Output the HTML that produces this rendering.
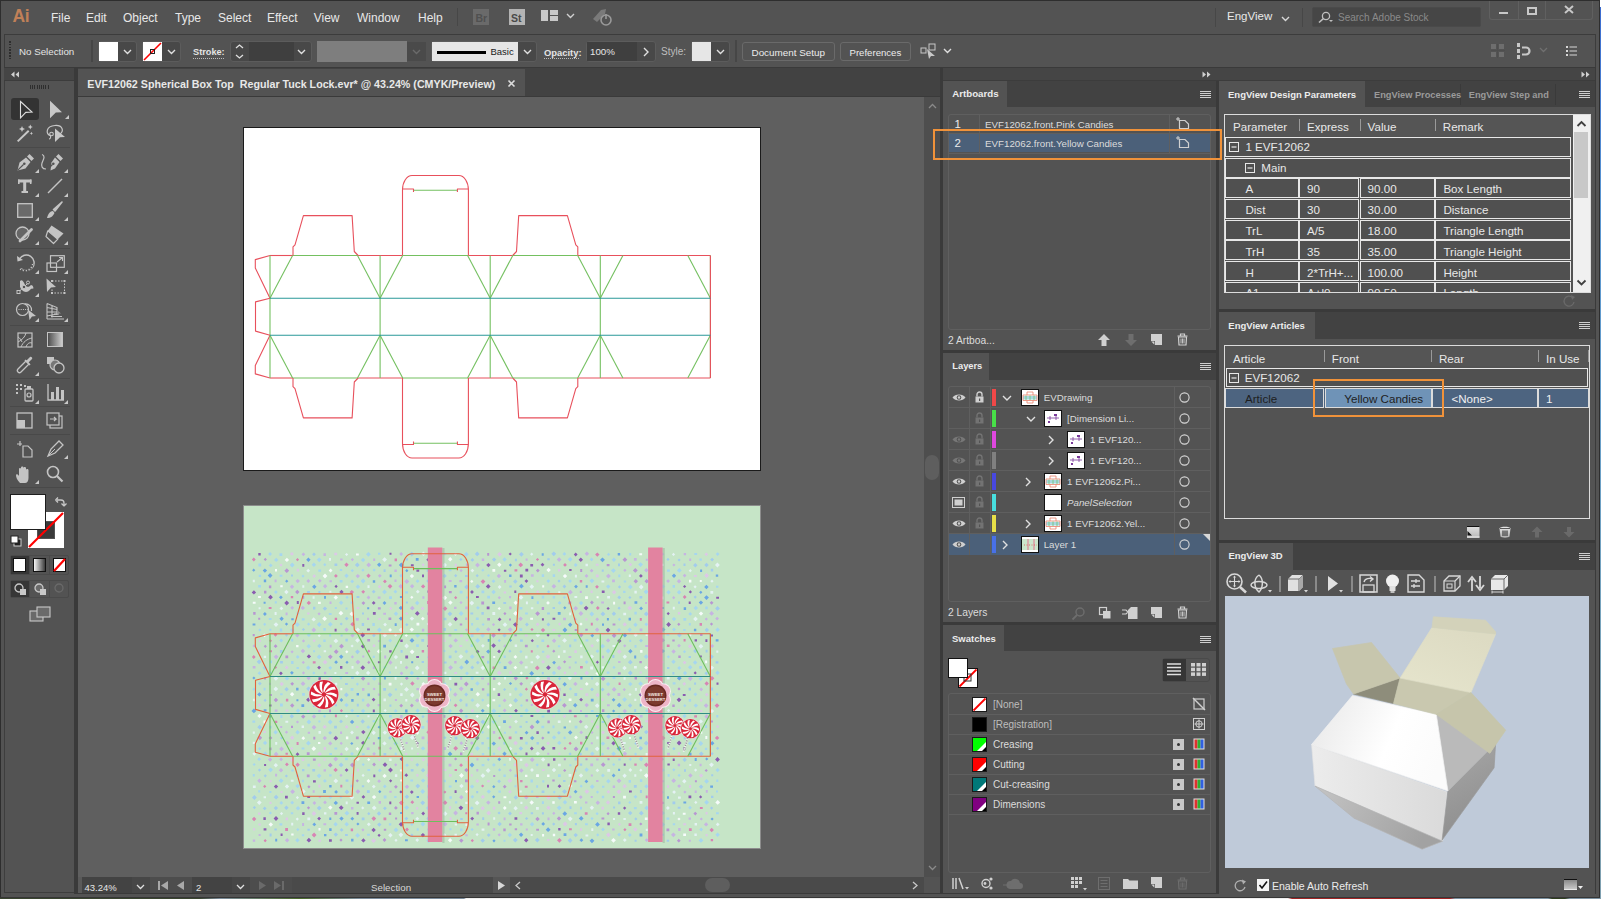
<!DOCTYPE html><html><head><meta charset="utf-8"><style>
html,body{margin:0;padding:0;}
body{width:1601px;height:899px;overflow:hidden;position:relative;background:#535353;font-family:"Liberation Sans",sans-serif;}
.a{position:absolute;}
.t{position:absolute;white-space:nowrap;line-height:1;}
svg{overflow:visible;}
</style></head><body>
<div class="a" style="left:0px;top:897px;width:1601px;height:2px;background:linear-gradient(90deg,#3a4630 0px,#3a4630 200px,#7a8a9a 220px,#4a6a2a 300px,#7a8a9a 360px,#7a8a9a 464px,#eeeeee 466px,#eeeeee 1288px,#a02424 1292px,#a02424 1450px,#7a90a0 1455px,#7a90a0 1548px,#304020 1552px,#304020 1565px,#7a90a0 1570px);"></div>
<div class="a" style="left:1600px;top:0px;width:1px;height:899px;background:linear-gradient(180deg,#3a6ad0 0px,#5a96d2 200px,#6aa0c8 450px,#7fa6b8 700px,#7fa0b0 899px);"></div>
<div class="a" style="left:1597px;top:0px;width:4px;height:7px;background:#ffffff;"></div>
<div class="a" style="left:0px;top:0px;width:1600px;height:898px;background:#535353;"></div>
<div class="a" style="left:0px;top:0px;width:1600px;height:1px;background:#2e2e2e;"></div>
<div class="a" style="left:0px;top:0px;width:1px;height:898px;background:#2e2e2e;"></div>
<div class="a" style="left:1599px;top:0px;width:1px;height:898px;background:#2e2e2e;"></div>
<div class="a" style="left:0px;top:897px;width:1600px;height:1px;background:#363636;"></div>
<div class="t" style="left:12.5px;top:8.19px;font-size:17.5px;color:#c08058;font-weight:bold;letter-spacing:-0.5px;">Ai</div>
<div class="t" style="left:51px;top:11.84px;font-size:12px;color:#e8e8e8;">File</div>
<div class="t" style="left:86px;top:11.84px;font-size:12px;color:#e8e8e8;">Edit</div>
<div class="t" style="left:123px;top:11.84px;font-size:12px;color:#e8e8e8;">Object</div>
<div class="t" style="left:175px;top:11.84px;font-size:12px;color:#e8e8e8;">Type</div>
<div class="t" style="left:218px;top:11.84px;font-size:12px;color:#e8e8e8;">Select</div>
<div class="t" style="left:267px;top:11.84px;font-size:12px;color:#e8e8e8;">Effect</div>
<div class="t" style="left:313.7px;top:11.84px;font-size:12px;color:#e8e8e8;">View</div>
<div class="t" style="left:357px;top:11.84px;font-size:12px;color:#e8e8e8;">Window</div>
<div class="t" style="left:418px;top:11.84px;font-size:12px;color:#e8e8e8;">Help</div>
<div class="a" style="left:457px;top:8px;width:1px;height:18px;background:#474747;"></div>
<div class="a" style="left:473px;top:9px;width:16px;height:16px;background:#6a6a6a;"></div>
<div class="t" style="left:475.5px;top:12.61px;font-size:10.5px;color:#505050;font-weight:bold;">Br</div>
<div class="a" style="left:509px;top:9px;width:16px;height:16px;background:#b4b4b4;"></div>
<div class="t" style="left:511px;top:12.61px;font-size:10.5px;color:#4a4a4a;font-weight:bold;">St</div>
<div class="a" style="left:541px;top:10px;width:7px;height:11px;background:#c8c8c8;"></div>
<div class="a" style="left:550px;top:10px;width:8px;height:5px;background:#c8c8c8;"></div>
<div class="a" style="left:550px;top:16px;width:8px;height:5px;background:#c8c8c8;"></div>
<svg class="a" style="left:566px;top:13px;" width="9" height="6" viewBox="0 0 9 6"><path d="M1 1 L4.5 4.5 L8 1" stroke="#d0d0d0" stroke-width="1.4" fill="none"/></svg>
<svg class="a" style="left:591px;top:7px;" width="22" height="19" viewBox="0 0 22 19"><path d="M2 12 L10 3 L15 2 L14 7 L6 15 Z" fill="#7a7a7a"/><circle cx="15" cy="13" r="5" fill="none" stroke="#9a9a9a" stroke-width="1.6"/><path d="M15 7 V12" stroke="#9a9a9a" stroke-width="1.6"/></svg>
<div class="a" style="left:1215px;top:8px;width:1px;height:19px;background:#474747;"></div>
<div class="t" style="left:1227px;top:11.27px;font-size:11.5px;color:#e8e8e8;">EngView</div>
<svg class="a" style="left:1281px;top:16px;" width="9" height="6" viewBox="0 0 9 6"><path d="M1 1 L4.5 4.5 L8 1" stroke="#d8d8d8" stroke-width="1.4" fill="none"/></svg>
<div class="a" style="left:1302px;top:8px;width:1px;height:19px;background:#474747;"></div>
<div class="a" style="left:1312px;top:7px;width:169px;height:20px;border:1px solid #4a4a4a;box-sizing:border-box;background:#464646;border-radius:2px;"></div>
<svg class="a" style="left:1317px;top:11px;" width="16" height="12" viewBox="0 0 16 12"><circle cx="9" cy="5" r="3.6" fill="none" stroke="#c0c0c0" stroke-width="1.3"/><path d="M6.5 7.5 L2 11.5" stroke="#c0c0c0" stroke-width="1.6"/><path d="M12 9 L16 9 L14 11 Z" fill="#c0c0c0"/></svg>
<div class="t" style="left:1338px;top:12.54px;font-size:10px;color:#8a8a8a;">Search Adobe Stock</div>
<div class="a" style="left:1489px;top:1px;width:104px;height:19px;border:1px solid #606060;box-sizing:border-box;border-top:none;border-radius:0 0 3px 3px;"></div>
<div class="a" style="left:1518px;top:1px;width:1px;height:18px;background:#606060;"></div>
<div class="a" style="left:1545px;top:1px;width:1px;height:18px;background:#606060;"></div>
<div class="a" style="left:1499px;top:12px;width:9px;height:2px;background:#c8c8c8;"></div>
<div class="a" style="left:1527px;top:7px;width:10px;height:8px;border:1px solid #c8c8c8;box-sizing:border-box;border-width:2px 2px 2px 2px;"></div>
<svg class="a" style="left:1564px;top:5px;" width="10" height="9" viewBox="0 0 10 9"><path d="M1 1 L9 8 M9 1 L1 8" stroke="#c8c8c8" stroke-width="2"/></svg>
<div class="a" style="left:4px;top:34px;width:1592px;height:34px;background:#3c3c3c;"></div>
<div class="a" style="left:5px;top:35px;width:1590px;height:32px;background:#535353;"></div>
<div class="a" style="left:9px;top:41.0px;width:2px;height:1.5px;background:#2e2e2e;"></div>
<div class="a" style="left:9px;top:43.8px;width:2px;height:1.5px;background:#2e2e2e;"></div>
<div class="a" style="left:9px;top:46.6px;width:2px;height:1.5px;background:#2e2e2e;"></div>
<div class="a" style="left:9px;top:49.4px;width:2px;height:1.5px;background:#2e2e2e;"></div>
<div class="a" style="left:9px;top:52.2px;width:2px;height:1.5px;background:#2e2e2e;"></div>
<div class="a" style="left:9px;top:55.0px;width:2px;height:1.5px;background:#2e2e2e;"></div>
<div class="a" style="left:9px;top:57.8px;width:2px;height:1.5px;background:#2e2e2e;"></div>
<div class="t" style="left:19px;top:46.75px;font-size:9.75px;color:#e4e4e4;">No Selection</div>
<div class="a" style="left:91px;top:40px;width:2px;height:22px;background:#464646;"></div>
<div class="a" style="left:98px;top:41px;width:39px;height:21px;border:1px solid #5c5c5c;box-sizing:border-box;background:#484848;border-radius:3px;"></div>
<div class="a" style="left:99px;top:42px;width:19px;height:19px;background:#ffffff;"></div>
<svg class="a" style="left:123px;top:49px;" width="9" height="6" viewBox="0 0 9 6"><path d="M1 1 L4.5 4.5 L8 1" stroke="#e0e0e0" stroke-width="1.4" fill="none"/></svg>
<div class="a" style="left:142px;top:41px;width:39px;height:21px;border:1px solid #5c5c5c;box-sizing:border-box;background:#484848;border-radius:3px;"></div>
<div class="a" style="left:143px;top:42px;width:19px;height:19px;background:#ffffff;"></div>
<svg class="a" style="left:143px;top:42px;" width="19" height="19" viewBox="0 0 19 19"><path d="M1 18 L18 1" stroke="#ff0000" stroke-width="1.6"/><rect x="7.5" y="7.5" width="4" height="4" fill="none" stroke="#222" stroke-width="1"/></svg>
<svg class="a" style="left:167px;top:49px;" width="9" height="6" viewBox="0 0 9 6"><path d="M1 1 L4.5 4.5 L8 1" stroke="#e0e0e0" stroke-width="1.4" fill="none"/></svg>
<div class="t" style="left:193px;top:48.21px;font-size:9.2px;color:#e4e4e4;font-weight:bold;">Stroke:</div>
<div class="a" style="left:193px;top:58px;width:31px;height:1px;background:repeating-linear-gradient(90deg,#bbb 0 1px,transparent 1px 2px);"></div>
<div class="a" style="left:230px;top:41px;width:82px;height:21px;border:1px solid #5c5c5c;box-sizing:border-box;background:#484848;border-radius:3px;"></div>
<svg class="a" style="left:235px;top:43px;" width="9" height="17" viewBox="0 0 9 17"><path d="M1 5 L4.5 2 L8 5 M1 12 L4.5 15 L8 12" stroke="#e0e0e0" stroke-width="1.3" fill="none"/></svg>
<div class="a" style="left:249px;top:42px;width:45px;height:19px;background:#3f3f3f;"></div>
<svg class="a" style="left:297px;top:49px;" width="9" height="6" viewBox="0 0 9 6"><path d="M1 1 L4.5 4.5 L8 1" stroke="#e0e0e0" stroke-width="1.4" fill="none"/></svg>
<div class="a" style="left:317px;top:41px;width:90px;height:21px;background:#7e7e7e;"></div>
<div class="a" style="left:407px;top:42px;width:19px;height:19px;background:#4a4a4a;"></div>
<svg class="a" style="left:412px;top:49px;" width="9" height="6" viewBox="0 0 9 6"><path d="M1 1 L4.5 4.5 L8 1" stroke="#6a6a6a" stroke-width="1.4" fill="none"/></svg>
<div class="a" style="left:431px;top:41px;width:106px;height:21px;border:1px solid #5c5c5c;box-sizing:border-box;background:#484848;border-radius:3px;"></div>
<div class="a" style="left:432px;top:42px;width:86px;height:19px;background:#e6e6e6;"></div>
<div class="a" style="left:437px;top:51px;width:49px;height:2.5px;background:#000000;"></div>
<div class="t" style="left:490.5px;top:47.46px;font-size:9.5px;color:#1a1a1a;">Basic</div>
<svg class="a" style="left:523px;top:49px;" width="9" height="6" viewBox="0 0 9 6"><path d="M1 1 L4.5 4.5 L8 1" stroke="#e0e0e0" stroke-width="1.4" fill="none"/></svg>
<div class="t" style="left:544px;top:48.04px;font-size:9.4px;color:#e4e4e4;font-weight:bold;">Opacity:</div>
<div class="a" style="left:544px;top:58px;width:36px;height:1px;background:repeating-linear-gradient(90deg,#bbb 0 1px,transparent 1px 2px);"></div>
<div class="a" style="left:586px;top:41px;width:70px;height:21px;border:1px solid #5c5c5c;box-sizing:border-box;background:#484848;border-radius:3px;"></div>
<div class="a" style="left:587px;top:42px;width:50px;height:19px;background:#3f3f3f;"></div>
<div class="t" style="left:590px;top:46.75px;font-size:9.75px;color:#e6e6e6;">100%</div>
<svg class="a" style="left:643px;top:47px;" width="6" height="10" viewBox="0 0 6 10"><path d="M1 1 L5 5 L1 9" stroke="#e0e0e0" stroke-width="1.4" fill="none"/></svg>
<div class="t" style="left:661px;top:47.04px;font-size:10px;color:#bdbdbd;">Style:</div>
<div class="a" style="left:691px;top:41px;width:39px;height:21px;border:1px solid #5c5c5c;box-sizing:border-box;background:#484848;border-radius:3px;"></div>
<div class="a" style="left:692px;top:42px;width:19px;height:19px;background:#e6e6e6;"></div>
<svg class="a" style="left:716px;top:49px;" width="9" height="6" viewBox="0 0 9 6"><path d="M1 1 L4.5 4.5 L8 1" stroke="#e0e0e0" stroke-width="1.4" fill="none"/></svg>
<div class="a" style="left:735px;top:40px;width:2px;height:22px;background:#464646;"></div>
<div class="a" style="left:742px;top:42px;width:93px;height:19px;border:1px solid #6a6a6a;box-sizing:border-box;border-radius:3px;"></div>
<div class="t" style="left:751.5px;top:47.62px;font-size:9.9px;color:#ececec;">Document Setup</div>
<div class="a" style="left:840px;top:42px;width:71px;height:19px;border:1px solid #6a6a6a;box-sizing:border-box;border-radius:3px;"></div>
<div class="t" style="left:849.5px;top:47.87px;font-size:9.6px;color:#ececec;">Preferences</div>
<svg class="a" style="left:920px;top:43px;" width="18" height="17" viewBox="0 0 18 17"><rect x="1" y="5" width="5" height="5" fill="none" stroke="#c8c8c8" stroke-width="1"/><rect x="9" y="1" width="6" height="6" fill="none" stroke="#c8c8c8" stroke-width="1"/><path d="M7 6 L15 13 L11 13 L9 16 Z" fill="#c8c8c8"/></svg>
<svg class="a" style="left:943px;top:48px;" width="9" height="6" viewBox="0 0 9 6"><path d="M1 1 L4.5 4.5 L8 1" stroke="#e0e0e0" stroke-width="1.4" fill="none"/></svg>
<svg class="a" style="left:1491px;top:44px;" width="14" height="14" viewBox="0 0 14 14"><rect x="0" y="0" width="5" height="5" fill="#6e6e6e"/><rect x="8" y="0" width="5" height="5" fill="#6e6e6e"/><rect x="0" y="8" width="5" height="5" fill="#6e6e6e"/><rect x="8" y="8" width="5" height="5" fill="#6e6e6e"/><path d="M6.5 0 V14 M0 6.5 H14" stroke="#4e4e4e" stroke-width="1"/></svg>
<svg class="a" style="left:1517px;top:43px;" width="16" height="16" viewBox="0 0 16 16"><rect x="0" y="0" width="3" height="4" fill="#c8c8c8"/><rect x="0" y="6" width="3" height="4" fill="#c8c8c8"/><rect x="0" y="12" width="3" height="4" fill="#c8c8c8"/><path d="M5 4.5 H9 A3.5 3.5 0 0 1 9 11.5 H5" stroke="#c8c8c8" stroke-width="2.2" fill="none"/></svg>
<svg class="a" style="left:1539px;top:47px;" width="9" height="6" viewBox="0 0 9 6"><path d="M1 1 L4.5 4.5 L8 1" stroke="#707070" stroke-width="1.3" fill="none"/></svg>
<svg class="a" style="left:1566px;top:46px;" width="12" height="10" viewBox="0 0 12 10"><rect x="0" y="0" width="2" height="2" fill="#d8d8d8"/><rect x="0" y="4" width="2" height="2" fill="#d8d8d8"/><rect x="0" y="8" width="2" height="2" fill="#d8d8d8"/><path d="M3.5 1 H11 M3.5 5 H11 M3.5 9 H11" stroke="#d8d8d8" stroke-width="1.2"/></svg>
<div class="a" style="left:4px;top:67px;width:1592px;height:2px;background:#3a3a3a;"></div>
<div class="a" style="left:4px;top:68px;width:72px;height:13px;background:#454545;"></div>
<div class="a" style="left:4px;top:80px;width:72px;height:1px;background:#3c3c3c;"></div>
<svg class="a" style="left:10px;top:71px;" width="10" height="7" viewBox="0 0 10 7"><path d="M4.5 0.5 L1 3.5 L4.5 6.5 Z M9 0.5 L5.5 3.5 L9 6.5 Z" fill="#d0d0d0"/></svg>
<div class="a" style="left:4px;top:81px;width:71px;height:812px;background:#3e3e3e;"></div>
<div class="a" style="left:5px;top:81px;width:69px;height:811px;background:#535353;"></div>
<div class="a" style="left:74px;top:68px;width:4px;height:826px;background:#3a3a3a;"></div>
<div class="a" style="left:30.0px;top:85px;width:1px;height:3.5px;background:#2e2e2e;"></div>
<div class="a" style="left:32.2px;top:85px;width:1px;height:3.5px;background:#2e2e2e;"></div>
<div class="a" style="left:34.4px;top:85px;width:1px;height:3.5px;background:#2e2e2e;"></div>
<div class="a" style="left:36.6px;top:85px;width:1px;height:3.5px;background:#2e2e2e;"></div>
<div class="a" style="left:38.8px;top:85px;width:1px;height:3.5px;background:#2e2e2e;"></div>
<div class="a" style="left:41.0px;top:85px;width:1px;height:3.5px;background:#2e2e2e;"></div>
<div class="a" style="left:43.2px;top:85px;width:1px;height:3.5px;background:#2e2e2e;"></div>
<div class="a" style="left:45.400000000000006px;top:85px;width:1px;height:3.5px;background:#2e2e2e;"></div>
<div class="a" style="left:47.6px;top:85px;width:1px;height:3.5px;background:#2e2e2e;"></div>
<div class="a" style="left:11px;top:98px;width:28px;height:22px;background:#333333;border-radius:3px;"></div>
<svg class="a" style="left:0px;top:0px;" width="80" height="150" viewBox="0 0 80 150"><path d="M20.5 101.5 L32 112 L25.8 112.4 L20.5 117.8 Z" fill="none" stroke="#dedede" stroke-width="1.1" stroke-linejoin="miter"/><path d="M50 100.8 L62 112.3 L55.8 112.6 L50 118.2 Z" fill="#c8c8c8"/><path d="M17.7 141.4 L28.7 130.7" stroke="#c8c8c8" stroke-width="2"/><path d="M22 126 L22.9 128.1 L25 129 L22.9 129.9 L22 132 L21.1 129.9 L19 129 L21.1 128.1 Z M30.3 124.5 L31.1 126.2 L32.8 127 L31.1 127.8 L30.3 129.5 L29.5 127.8 L27.8 127 L29.5 126.2 Z M31.4 131.8 L32 133 L33.2 133.4 L32 133.8 L31.4 135 L30.8 133.8 L29.6 133.4 L30.8 133 Z" fill="#c8c8c8"/><path d="M51 136 C45 134 46 126 55 125.5 C63 125 64 131 60 134" fill="none" stroke="#c8c8c8" stroke-width="1.2"/><circle cx="51.5" cy="134" r="1.8" fill="none" stroke="#c8c8c8" stroke-width="1.1"/><path d="M50.5 136 C51 138 50 139 49 139" fill="none" stroke="#c8c8c8" stroke-width="1.1"/><path d="M55 128.4 L65 137 L60 137.3 L55 142 Z" fill="#c8c8c8"/></svg>
<svg class="a" style="left:64.5px;top:115.3px;" width="4" height="4" viewBox="0 0 4 4"><path d="M4 0 L4 4 L0 4 Z" fill="#c8c8c8"/></svg>
<div class="a" style="left:10px;top:147px;width:60px;height:1px;background:#494949;"></div>
<svg class="a" style="left:16.5px;top:154px;" width="17" height="17" viewBox="0 0 17 17"><path d="M0.5 16.5 L2.5 8.5 L9 3.5 L13.5 8 L8.5 14.5 Z" fill="#c4c4c4"/><path d="M10 2.5 L12.5 0 L17 4.5 L14.5 7 Z" fill="#c4c4c4"/><path d="M0.8 16.2 L6.5 10.5" stroke="#535353" stroke-width="1.1"/><circle cx="7.3" cy="9.7" r="1.3" fill="#535353"/></svg>
<svg class="a" style="left:34.5px;top:168.5px;" width="4" height="4" viewBox="0 0 4 4"><path d="M4 0 L4 4 L0 4 Z" fill="#c8c8c8"/></svg>
<svg class="a" style="left:45.5px;top:154px;" width="17" height="17" viewBox="0 0 17 17"><path d="M4.5 16.5 L5.5 8.5 L9 3.5 L13.5 8 L9 14.5 Z" fill="#c4c4c4"/><path d="M10 2.5 L12.5 0 L17 4.5 L14.5 7 Z" fill="#c4c4c4"/><path d="M0.8 16.2 L6.5 10.5" stroke="#535353" stroke-width="1.1"/><circle cx="7.3" cy="9.7" r="1.3" fill="#535353"/></svg>
<svg class="a" style="left:40px;top:154px;" width="8" height="16" viewBox="0 0 8 16"><path d="M2 0.5 C6 2 3 6 2 9 C1 12 2 15 6 15" fill="none" stroke="#c4c4c4" stroke-width="1.2"/></svg>
<svg class="a" style="left:64px;top:168.5px;" width="4" height="4" viewBox="0 0 4 4"><path d="M4 0 L4 4 L0 4 Z" fill="#c8c8c8"/></svg>
<svg class="a" style="left:17px;top:179px;" width="15" height="15" viewBox="0 0 15 15"><rect x="1" y="0.5" width="13.5" height="3" fill="#c4c4c4"/><rect x="1" y="0.5" width="1.6" height="4.5" fill="#c4c4c4"/><rect x="12.9" y="0.5" width="1.6" height="4.5" fill="#c4c4c4"/><rect x="6.2" y="1" width="3" height="12.5" fill="#c4c4c4"/><rect x="4.5" y="12" width="6.5" height="2" fill="#c4c4c4"/></svg>
<svg class="a" style="left:34.5px;top:192.5px;" width="4" height="4" viewBox="0 0 4 4"><path d="M4 0 L4 4 L0 4 Z" fill="#c8c8c8"/></svg>
<svg class="a" style="left:47px;top:178px;" width="16" height="16" viewBox="0 0 16 16"><path d="M1 15 L15 1" stroke="#c4c4c4" stroke-width="1.5"/></svg>
<svg class="a" style="left:64px;top:192.5px;" width="4" height="4" viewBox="0 0 4 4"><path d="M4 0 L4 4 L0 4 Z" fill="#c8c8c8"/></svg>
<svg class="a" style="left:17px;top:202.5px;" width="16" height="15" viewBox="0 0 16 15"><rect x="0.7" y="0.7" width="14.6" height="13.6" fill="#6a6a6a" stroke="#c4c4c4" stroke-width="1.3"/></svg>
<svg class="a" style="left:34.5px;top:216.5px;" width="4" height="4" viewBox="0 0 4 4"><path d="M4 0 L4 4 L0 4 Z" fill="#c8c8c8"/></svg>
<svg class="a" style="left:46px;top:201px;" width="18" height="18" viewBox="0 0 18 18"><path d="M16 1 L9 10 L7.5 8.5 Z" fill="#c4c4c4" stroke="#c4c4c4" stroke-width="1.6" stroke-linejoin="round"/><path d="M1 17 C2 13 4 10 7 10 L8.5 12 C7 15 5 17 1 17 Z" fill="#c4c4c4"/></svg>
<svg class="a" style="left:64px;top:216.5px;" width="4" height="4" viewBox="0 0 4 4"><path d="M4 0 L4 4 L0 4 Z" fill="#c8c8c8"/></svg>
<svg class="a" style="left:14.5px;top:225.5px;" width="18" height="17" viewBox="0 0 18 17"><circle cx="7.5" cy="7.5" r="6.5" fill="#666" stroke="#c4c4c4" stroke-width="1.3"/><path d="M5 15 L16.5 3.5" stroke="#c4c4c4" stroke-width="2.8" stroke-linecap="round"/></svg>
<svg class="a" style="left:34.5px;top:240.5px;" width="4" height="4" viewBox="0 0 4 4"><path d="M4 0 L4 4 L0 4 Z" fill="#c8c8c8"/></svg>
<svg class="a" style="left:0px;top:0px;" width="80" height="260" viewBox="0 0 80 260"><path d="M51.5 225.5 L63.5 233.5 L57.8 239.2 L47.8 230.8 Z" fill="#c4c4c4"/><path d="M47.8 230.8 L57.8 239.2 L53.5 243.5 L46 236.5 Z" fill="none" stroke="#c4c4c4" stroke-width="1.2" stroke-linejoin="round"/></svg>
<svg class="a" style="left:64px;top:240.5px;" width="4" height="4" viewBox="0 0 4 4"><path d="M4 0 L4 4 L0 4 Z" fill="#c8c8c8"/></svg>
<div class="a" style="left:10px;top:248px;width:60px;height:1px;background:#494949;"></div>
<svg class="a" style="left:16px;top:254px;" width="18" height="18" viewBox="0 0 18 18"><path d="M3.5 5 A7.8 7.8 0 1 1 5 14.5" fill="none" stroke="#c4c4c4" stroke-width="1.4" stroke-dasharray="0 0"/><path d="M16.6 10 A7.8 7.8 0 0 1 4 15" fill="none" stroke="#535353" stroke-width="2"/><path d="M16.6 10 A7.8 7.8 0 0 1 4 15" fill="none" stroke="#c4c4c4" stroke-width="1.4" stroke-dasharray="1.2 1.8"/><path d="M1 2 L1.5 7.5 L7 6 Z" fill="#c4c4c4"/></svg>
<svg class="a" style="left:35px;top:270px;" width="4" height="4" viewBox="0 0 4 4"><path d="M4 0 L4 4 L0 4 Z" fill="#c8c8c8"/></svg>
<svg class="a" style="left:45.5px;top:254.5px;" width="19" height="17" viewBox="0 0 19 17"><rect x="1" y="8" width="9.5" height="8.5" fill="none" stroke="#c4c4c4" stroke-width="1.2"/><rect x="4.5" y="0.7" width="13.8" height="11.6" fill="none" stroke="#c4c4c4" stroke-width="1.2"/><path d="M11 7 L16.5 2.5 M13 2.5 H16.5 V6" stroke="#c4c4c4" stroke-width="1.1" fill="none"/></svg>
<svg class="a" style="left:64px;top:270px;" width="4" height="4" viewBox="0 0 4 4"><path d="M4 0 L4 4 L0 4 Z" fill="#c8c8c8"/></svg>
<svg class="a" style="left:15.5px;top:279px;" width="19" height="15" viewBox="0 0 19 15"><path d="M2.5 13 L9 7 L12 4" stroke="#c4c4c4" stroke-width="1" fill="none"/><path d="M4 2 C7 -1 8 5 10 7 C12 9 14 7 15 6 C17 6 18 9 17 10 C15 8 14 13 10 13 C7 13 5 10 4 8" fill="#c4c4c4"/><rect x="1" y="11.5" width="3" height="3" fill="#535353" stroke="#c4c4c4" stroke-width="1"/><circle cx="8" cy="8" r="1.8" fill="#535353" stroke="#c4c4c4" stroke-width="1"/><circle cx="12" cy="3.5" r="1.5" fill="#535353" stroke="#c4c4c4" stroke-width="1"/></svg>
<svg class="a" style="left:35px;top:293px;" width="4" height="4" viewBox="0 0 4 4"><path d="M4 0 L4 4 L0 4 Z" fill="#c8c8c8"/></svg>
<svg class="a" style="left:45.5px;top:278px;" width="20" height="16" viewBox="0 0 20 16"><path d="M0.5 0.5 L10 9 L5 9.5 L1 14 Z" fill="#c4c4c4"/><path d="M6 3 H18.5 V15 H6 V11" fill="none" stroke="#c4c4c4" stroke-width="1" stroke-dasharray="1.6 1.4"/><rect x="5" y="2" width="2" height="2" fill="#c4c4c4"/><rect x="17.5" y="2" width="2" height="2" fill="#c4c4c4"/><rect x="17.5" y="14" width="2" height="2" fill="#c4c4c4"/><rect x="5" y="14" width="2" height="2" fill="#c4c4c4"/></svg>
<svg class="a" style="left:15.5px;top:302.5px;" width="22" height="17" viewBox="0 0 22 17"><circle cx="6.5" cy="6.5" r="6" fill="none" stroke="#c4c4c4" stroke-width="1.2"/><path d="M8.5 1 A6 6 0 0 1 15.5 8" fill="none" stroke="#c4c4c4" stroke-width="1.2"/><path d="M2.5 6.5 H12" stroke="#c4c4c4" stroke-width="1.1" stroke-dasharray="1 1.2"/><path d="M12 6.5 L20 13 L16 13.5 L13.5 17 Z" fill="#c4c4c4"/></svg>
<svg class="a" style="left:35px;top:318px;" width="4" height="4" viewBox="0 0 4 4"><path d="M4 0 L4 4 L0 4 Z" fill="#c8c8c8"/></svg>
<svg class="a" style="left:45.5px;top:302.5px;" width="19" height="17" viewBox="0 0 19 17"><path d="M1 0.5 V16 M1 0.5 L11 4.5 V12 M1 4.5 L11 6.5 M1 9 L11 9 M1 13 L11 11 M6 2.5 V14.5" stroke="#c4c4c4" stroke-width="1.1" fill="none"/><path d="M1 16 H18 M5 13.5 H16 M8 11 H13" stroke="#c4c4c4" stroke-width="1"/><path d="M11 7 L15 10.5 H11 Z" fill="#8a8a8a"/></svg>
<svg class="a" style="left:64px;top:318px;" width="4" height="4" viewBox="0 0 4 4"><path d="M4 0 L4 4 L0 4 Z" fill="#c8c8c8"/></svg>
<div class="a" style="left:10px;top:325px;width:60px;height:1px;background:#494949;"></div>
<svg class="a" style="left:17px;top:332px;" width="16" height="16" viewBox="0 0 16 16"><rect x="1" y="1" width="14" height="14" fill="none" stroke="#c4c4c4" stroke-width="1.2"/><path d="M1 10 C5 8 8 5 9 1 M4 15 C6 10 10 7 15 6 M9 15 C10 12 12 10 15 11 M1 5 C3 6 4 8 5 10" fill="none" stroke="#c4c4c4" stroke-width="1"/></svg>
<svg class="a" style="left:47px;top:332px;" width="16" height="16" viewBox="0 0 16 16"><defs><linearGradient id="gg" x1="0" x2="1"><stop offset="0" stop-color="#4a4a4a"/><stop offset="1" stop-color="#d0d0d0"/></linearGradient></defs><rect x="0.5" y="0.5" width="15" height="14" fill="url(#gg)" stroke="#c4c4c4" stroke-width="1"/></svg>
<svg class="a" style="left:16px;top:356px;" width="18" height="18" viewBox="0 0 18 18"><path d="M2 16 C1 15 1 14 2 13 L10 5 L13 8 L5 16 C4 17 3 17 2 16 Z" fill="none" stroke="#c4c4c4" stroke-width="1.3"/><path d="M10 5 L14 1 C15 0 17 2 16 3 L12 7 Z" fill="#c4c4c4"/><path d="M9 4 L14 9" stroke="#c4c4c4" stroke-width="1.6"/></svg>
<svg class="a" style="left:35px;top:372px;" width="4" height="4" viewBox="0 0 4 4"><path d="M4 0 L4 4 L0 4 Z" fill="#c8c8c8"/></svg>
<svg class="a" style="left:46px;top:356px;" width="19" height="17" viewBox="0 0 19 17"><rect x="1" y="1" width="7" height="7" fill="#c4c4c4"/><circle cx="9" cy="9" r="5" fill="#777" stroke="#c4c4c4" stroke-width="1.2"/><circle cx="13" cy="12" r="5" fill="#535353" stroke="#c4c4c4" stroke-width="1.3"/></svg>
<div class="a" style="left:10px;top:378px;width:60px;height:1px;background:#494949;"></div>
<svg class="a" style="left:15px;top:383px;" width="22" height="19" viewBox="0 0 22 19"><rect x="1" y="1" width="2" height="2" fill="#c4c4c4"/><rect x="5" y="1" width="2" height="2" fill="#c4c4c4"/><rect x="1" y="5" width="2" height="2" fill="#c4c4c4"/><rect x="5" y="5" width="2" height="2" fill="#c4c4c4"/><rect x="1" y="9" width="2" height="2" fill="#c4c4c4"/><rect x="9" y="2" width="2" height="2" fill="#c4c4c4"/><rect x="10" y="6" width="8" height="12" rx="1" fill="none" stroke="#c4c4c4" stroke-width="1.3"/><rect x="12" y="3" width="4" height="3" fill="#c4c4c4"/><circle cx="14" cy="12" r="2" fill="none" stroke="#c4c4c4" stroke-width="1.2"/></svg>
<svg class="a" style="left:35px;top:400px;" width="4" height="4" viewBox="0 0 4 4"><path d="M4 0 L4 4 L0 4 Z" fill="#c8c8c8"/></svg>
<svg class="a" style="left:47px;top:383px;" width="17" height="18" viewBox="0 0 17 18"><path d="M1 1 V17 H17" stroke="#c4c4c4" stroke-width="1.3" fill="none"/><rect x="4" y="9" width="3" height="8" fill="#c4c4c4"/><rect x="9" y="4" width="3" height="13" fill="#c4c4c4"/><rect x="14" y="7" width="3" height="10" fill="#c4c4c4"/></svg>
<svg class="a" style="left:64px;top:400px;" width="4" height="4" viewBox="0 0 4 4"><path d="M4 0 L4 4 L0 4 Z" fill="#c8c8c8"/></svg>
<div class="a" style="left:10px;top:406px;width:60px;height:1px;background:#494949;"></div>
<svg class="a" style="left:16px;top:412px;" width="17" height="17" viewBox="0 0 17 17"><rect x="1" y="1" width="15" height="15" fill="none" stroke="#c4c4c4" stroke-width="1.3"/><rect x="1" y="8" width="8" height="8" fill="#c4c4c4"/></svg>
<svg class="a" style="left:46px;top:412px;" width="19" height="17" viewBox="0 0 19 17"><rect x="4" y="4" width="12" height="12" fill="none" stroke="#c4c4c4" stroke-width="1.2"/><rect x="1" y="1" width="12" height="12" fill="#535353" stroke="#c4c4c4" stroke-width="1.2"/><path d="M4 7 H10 L8 5 M10 7 L8 9" stroke="#c4c4c4" stroke-width="1.2" fill="none"/></svg>
<div class="a" style="left:10px;top:434px;width:60px;height:1px;background:#494949;"></div>
<svg class="a" style="left:16px;top:440px;" width="18" height="18" viewBox="0 0 18 18"><path d="M4 1 V6 M1 4 H6" stroke="#c4c4c4" stroke-width="1.2"/><path d="M7 6 H12 L16 10 V17 H7 Z" fill="none" stroke="#c4c4c4" stroke-width="1.2"/></svg>
<svg class="a" style="left:46px;top:440px;" width="19" height="18" viewBox="0 0 19 18"><path d="M2 16 L5 9 L13 1 L17 5 L9 13 Z" fill="none" stroke="#c4c4c4" stroke-width="1.3"/><path d="M2 16 L9 9" stroke="#c4c4c4" stroke-width="1"/></svg>
<svg class="a" style="left:64px;top:455px;" width="4" height="4" viewBox="0 0 4 4"><path d="M4 0 L4 4 L0 4 Z" fill="#c8c8c8"/></svg>
<svg class="a" style="left:15px;top:465px;" width="20" height="19" viewBox="0 0 20 19"><path d="M5 18 C2 15 1 12 1 10 C1 9 3 9 4 11 L4 4 C4 2.5 6 2.5 6 4 L6 9 L6 2.5 C6 1 8.5 1 8.5 2.5 L8.5 9 L8.5 3 C8.5 1.5 11 1.5 11 3 L11 9 L11 5 C11 3.5 13.5 3.5 13.5 5 L13.5 13 C13.5 16 12 18 10 18 Z" fill="#c4c4c4"/></svg>
<svg class="a" style="left:35px;top:480px;" width="4" height="4" viewBox="0 0 4 4"><path d="M4 0 L4 4 L0 4 Z" fill="#c8c8c8"/></svg>
<svg class="a" style="left:46px;top:465px;" width="18" height="18" viewBox="0 0 18 18"><circle cx="7" cy="7" r="5.5" fill="none" stroke="#c4c4c4" stroke-width="1.6"/><path d="M11 11 L16.5 16.5" stroke="#c4c4c4" stroke-width="2.2"/></svg>
<div class="a" style="left:10px;top:487px;width:60px;height:1px;background:#494949;"></div>
<div class="a" style="left:28px;top:512px;width:36px;height:36px;background:#ffffff;"></div>
<div class="a" style="left:37px;top:521px;width:18px;height:18px;background:#535353;"></div>
<div class="a" style="left:38px;top:522px;width:16px;height:16px;background:#3a3a3a;"></div>
<svg class="a" style="left:28px;top:512px;" width="36" height="36" viewBox="0 0 36 36"><path d="M1 35 L35 1" stroke="#ff0000" stroke-width="2.2"/></svg>
<div class="a" style="left:10px;top:494px;width:36px;height:36px;background:#1e1e1e;"></div>
<div class="a" style="left:11px;top:495px;width:34px;height:34px;background:#ffffff;"></div>
<svg class="a" style="left:55px;top:496px;" width="11" height="11" viewBox="0 0 11 11"><path d="M2 4 H6 A3 3 0 0 1 9 7 V10 M0.5 4 L3 1.5 M0.5 4 L3 6.5 M9 10 L6.5 7.5 M9 10 L11.5 7.5" stroke="#c8c8c8" stroke-width="1.3" fill="none"/></svg>
<svg class="a" style="left:10px;top:535px;" width="12" height="12" viewBox="0 0 12 12"><rect x="4" y="4" width="7" height="7" fill="#222" stroke="#d0d0d0" stroke-width="1"/><rect x="1" y="1" width="7" height="7" fill="#fff" stroke="#222" stroke-width="1"/></svg>
<div class="a" style="left:10px;top:555px;width:59px;height:20px;border:1px solid #4a4a4a;box-sizing:border-box;border-radius:2px;"></div>
<div class="a" style="left:11px;top:556px;width:18px;height:18px;background:#363636;"></div>
<div class="a" style="left:29px;top:556px;width:1px;height:18px;background:#4a4a4a;"></div>
<div class="a" style="left:49px;top:556px;width:1px;height:18px;background:#4a4a4a;"></div>
<div class="a" style="left:13px;top:558px;width:13px;height:14px;border:1px solid #111;box-sizing:border-box;background:#ffffff;"></div>
<svg class="a" style="left:33px;top:558px;" width="13" height="14" viewBox="0 0 13 14"><defs><linearGradient id="g2" x1="0" x2="1"><stop offset="0" stop-color="#fff"/><stop offset="1" stop-color="#333"/></linearGradient></defs><rect x="0.5" y="0.5" width="12" height="13" fill="url(#g2)" stroke="#111"/></svg>
<svg class="a" style="left:53px;top:558px;" width="13" height="14" viewBox="0 0 13 14"><rect x="0.5" y="0.5" width="12" height="13" fill="#fff" stroke="#111"/><path d="M1 13 L12 1" stroke="#ff0000" stroke-width="2.2"/></svg>
<div class="a" style="left:10px;top:580px;width:59px;height:18px;border:1px solid #4a4a4a;box-sizing:border-box;border-radius:2px;"></div>
<div class="a" style="left:11px;top:581px;width:18px;height:16px;background:#363636;"></div>
<div class="a" style="left:29px;top:581px;width:1px;height:16px;background:#4a4a4a;"></div>
<div class="a" style="left:49px;top:581px;width:1px;height:16px;background:#4a4a4a;"></div>
<svg class="a" style="left:14px;top:583px;" width="13" height="12" viewBox="0 0 13 12"><circle cx="5" cy="5" r="4" fill="none" stroke="#c8c8c8" stroke-width="1.3"/><rect x="6" y="6" width="6" height="6" fill="#c8c8c8"/></svg>
<svg class="a" style="left:34px;top:583px;" width="13" height="12" viewBox="0 0 13 12"><circle cx="5" cy="5" r="4" fill="#6a6a6a" stroke="#c8c8c8" stroke-width="1.3"/><rect x="6" y="6" width="6" height="6" fill="#c8c8c8"/></svg>
<svg class="a" style="left:54px;top:583px;" width="10" height="10" viewBox="0 0 10 10"><circle cx="5" cy="5" r="4" fill="none" stroke="#6a6a6a" stroke-width="1.3"/></svg>
<svg class="a" style="left:29px;top:606px;" width="22" height="16" viewBox="0 0 22 16"><rect x="1" y="5" width="13" height="10" fill="#6a6a6a" stroke="#c8c8c8" stroke-width="1.1"/><rect x="8" y="1" width="13" height="10" fill="#6a6a6a" stroke="#c8c8c8" stroke-width="1.1"/></svg>
<div class="a" style="left:78px;top:68px;width:862px;height:29px;background:#424242;"></div>
<div class="a" style="left:78px;top:69px;width:447px;height:28px;background:#535353;"></div>
<div class="t" style="left:87.3px;top:78.94px;font-size:10.7px;color:#e8e8e8;font-weight:bold;">EVF12062 Spherical Box Top &nbsp;Regular Tuck Lock.evr* @ 43.24% (CMYK/Preview)</div>
<svg class="a" style="left:508px;top:80px;" width="7" height="7" viewBox="0 0 7 7"><path d="M0.5 0.5 L6.5 6.5 M6.5 0.5 L0.5 6.5" stroke="#dcdcdc" stroke-width="1.6"/></svg>
<div class="a" style="left:78px;top:96px;width:862px;height:1px;background:#3a3a3a;"></div>
<div class="a" style="left:78px;top:97px;width:846px;height:780px;background:#5f5f5f;"></div>
<div class="a" style="left:924px;top:97px;width:16px;height:780px;background:#4e4e4e;"></div>
<svg class="a" style="left:928px;top:103px;" width="9" height="6" viewBox="0 0 9 6"><path d="M1 5 L4.5 1.5 L8 5" stroke="#8a8a8a" stroke-width="1.3" fill="none"/></svg>
<svg class="a" style="left:928px;top:865px;" width="9" height="6" viewBox="0 0 9 6"><path d="M1 1 L4.5 4.5 L8 1" stroke="#8a8a8a" stroke-width="1.3" fill="none"/></svg>
<div class="a" style="left:925px;top:455px;width:14px;height:25px;background:#5e5e5e;border-radius:7px;"></div>
<div class="a" style="left:940px;top:68px;width:3px;height:826px;background:#3a3a3a;"></div>
<div class="a" style="left:78px;top:877px;width:862px;height:16px;background:#4a4a4a;"></div>
<div class="a" style="left:78px;top:893px;width:862px;height:1px;background:#3a3a3a;"></div>
<div class="a" style="left:78px;top:877px;width:4px;height:16px;background:#5a5a5a;"></div>
<div class="a" style="left:82px;top:877px;width:50px;height:16px;background:#434343;"></div>
<div class="t" style="left:84.5px;top:882.96px;font-size:9.5px;color:#e6e6e6;">43.24%</div>
<div class="a" style="left:132px;top:877px;width:18px;height:16px;background:#474747;"></div>
<svg class="a" style="left:136px;top:884px;" width="9" height="6" viewBox="0 0 9 6"><path d="M1 1 L4.5 4.5 L8 1" stroke="#e0e0e0" stroke-width="1.3" fill="none"/></svg>
<div class="a" style="left:150px;top:877px;width:42px;height:16px;background:#4d4d4d;"></div>
<svg class="a" style="left:158px;top:881px;" width="11" height="9" viewBox="0 0 11 9"><rect x="0" y="0" width="2" height="9" fill="#a8a8a8"/><path d="M10 0 L3 4.5 L10 9 Z" fill="#a8a8a8"/></svg>
<svg class="a" style="left:177px;top:881px;" width="7" height="9" viewBox="0 0 7 9"><path d="M7 0 L0 4.5 L7 9 Z" fill="#a8a8a8"/></svg>
<div class="a" style="left:192px;top:877px;width:40px;height:16px;background:#434343;"></div>
<div class="t" style="left:196px;top:882.96px;font-size:9.5px;color:#e6e6e6;">2</div>
<div class="a" style="left:232px;top:877px;width:18px;height:16px;background:#474747;"></div>
<svg class="a" style="left:236px;top:884px;" width="9" height="6" viewBox="0 0 9 6"><path d="M1 1 L4.5 4.5 L8 1" stroke="#e0e0e0" stroke-width="1.3" fill="none"/></svg>
<div class="a" style="left:250px;top:877px;width:42px;height:16px;background:#4d4d4d;"></div>
<svg class="a" style="left:259px;top:881px;" width="7" height="9" viewBox="0 0 7 9"><path d="M0 0 L7 4.5 L0 9 Z" fill="#6a6a6a"/></svg>
<svg class="a" style="left:274px;top:881px;" width="11" height="9" viewBox="0 0 11 9"><path d="M0 0 L7 4.5 L0 9 Z" fill="#6a6a6a"/><rect x="8" y="0" width="2" height="9" fill="#6a6a6a"/></svg>
<div class="a" style="left:292px;top:877px;width:200px;height:16px;background:#4a4a4a;"></div>
<div class="t" style="left:371px;top:882.75px;font-size:9.75px;color:#d8d8d8;">Selection</div>
<div class="a" style="left:493px;top:877px;width:17px;height:16px;background:#555555;"></div>
<svg class="a" style="left:498px;top:881px;" width="7" height="9" viewBox="0 0 7 9"><path d="M0 0 L7 4.5 L0 9 Z" fill="#d8d8d8"/></svg>
<svg class="a" style="left:515px;top:881px;" width="6" height="9" viewBox="0 0 6 9"><path d="M5 1 L1 4.5 L5 8" stroke="#c8c8c8" stroke-width="1.3" fill="none"/></svg>
<div class="a" style="left:705px;top:878px;width:25px;height:14px;background:#5e5e5e;border-radius:7px;"></div>
<svg class="a" style="left:912px;top:881px;" width="6" height="9" viewBox="0 0 6 9"><path d="M1 1 L5 4.5 L1 8" stroke="#c8c8c8" stroke-width="1.3" fill="none"/></svg>
<div class="a" style="left:924px;top:877px;width:16px;height:16px;background:#535353;"></div>
<div class="a" style="left:243px;top:127px;width:518px;height:344px;background:#1a1a1a;"></div>
<div class="a" style="left:244px;top:128px;width:516px;height:342px;background:#ffffff;"></div>
<svg class="a" style="left:0px;top:0px;pointer-events:none;" width="1601" height="899" viewBox="0 0 1601 899"><path d="M270.0 255.5 L293.0 255.5" fill="none" stroke="#e8505c" stroke-width="1.1" stroke-linejoin="round"/><path d="M358.1 255.5 L402.5 255.5" fill="none" stroke="#e8505c" stroke-width="1.1" stroke-linejoin="round"/><path d="M468.4 255.5 L512.2 255.5" fill="none" stroke="#e8505c" stroke-width="1.1" stroke-linejoin="round"/><path d="M577.8 255.5 L710.4 255.5" fill="none" stroke="#e8505c" stroke-width="1.1" stroke-linejoin="round"/><path d="M293.0 255.5 L358.1 255.5" fill="none" stroke="#74c060" stroke-width="1.1" stroke-linejoin="round"/><path d="M402.5 255.5 L468.4 255.5" fill="none" stroke="#74c060" stroke-width="1.1" stroke-linejoin="round"/><path d="M512.2 255.5 L577.8 255.5" fill="none" stroke="#74c060" stroke-width="1.1" stroke-linejoin="round"/><path d="M293.0 255.5 L293.0 246.8 L295.0 244.8 L303.4 215.6 L352.1 215.6 L354.3 251.5 L358.1 255.5" fill="none" stroke="#e8505c" stroke-width="1.1" stroke-linejoin="round"/><path d="M577.8 255.5 L577.8 246.8 L575.8 244.8 L567.4 215.6 L518.7 215.6 L516.5 251.5 L512.7 255.5" fill="none" stroke="#e8505c" stroke-width="1.1" stroke-linejoin="round"/><path d="M402.5 255.5 L402.5 190.0 A9.5 14.5 0 0 1 412.0 175.5 L458.9 175.5 A9.5 14.5 0 0 1 468.4 190.0 L468.4 255.5" fill="none" stroke="#e8505c" stroke-width="1.1"/><path d="M402.5 189.0 L413.5 189.0 L413.5 192.0" fill="none" stroke="#e8505c" stroke-width="1.1" stroke-linejoin="round"/><path d="M468.4 189.0 L457.4 189.0 L457.4 192.0" fill="none" stroke="#e8505c" stroke-width="1.1" stroke-linejoin="round"/><path d="M413.8 190.3 L457.1 190.3" fill="none" stroke="#74c060" stroke-width="1.1" stroke-linejoin="round"/><path d="M270.0 298.2 L292.6 255.5" fill="none" stroke="#74c060" stroke-width="1.1" stroke-linejoin="round"/><path d="M357.5 255.5 L380.1 298.2" fill="none" stroke="#74c060" stroke-width="1.1" stroke-linejoin="round"/><path d="M380.1 298.2 L402.7 255.5" fill="none" stroke="#74c060" stroke-width="1.1" stroke-linejoin="round"/><path d="M467.6 255.5 L490.2 298.2" fill="none" stroke="#74c060" stroke-width="1.1" stroke-linejoin="round"/><path d="M490.2 298.2 L512.8 255.5" fill="none" stroke="#74c060" stroke-width="1.1" stroke-linejoin="round"/><path d="M577.7 255.5 L600.3 298.2" fill="none" stroke="#74c060" stroke-width="1.1" stroke-linejoin="round"/><path d="M600.3 298.2 L622.9 255.5" fill="none" stroke="#74c060" stroke-width="1.1" stroke-linejoin="round"/><path d="M687.8 255.5 L710.4 298.2" fill="none" stroke="#74c060" stroke-width="1.1" stroke-linejoin="round"/><path d="M270.0 255.5 L255.3 259.6 L255.3 268.1 L270.0 298.2" fill="none" stroke="#e8505c" stroke-width="1.1" stroke-linejoin="round"/><path d="M270.0 378.0 L293.0 378.0" fill="none" stroke="#e8505c" stroke-width="1.1" stroke-linejoin="round"/><path d="M358.1 378.0 L402.5 378.0" fill="none" stroke="#e8505c" stroke-width="1.1" stroke-linejoin="round"/><path d="M468.4 378.0 L512.2 378.0" fill="none" stroke="#e8505c" stroke-width="1.1" stroke-linejoin="round"/><path d="M577.8 378.0 L710.4 378.0" fill="none" stroke="#e8505c" stroke-width="1.1" stroke-linejoin="round"/><path d="M293.0 378.0 L358.1 378.0" fill="none" stroke="#74c060" stroke-width="1.1" stroke-linejoin="round"/><path d="M402.5 378.0 L468.4 378.0" fill="none" stroke="#74c060" stroke-width="1.1" stroke-linejoin="round"/><path d="M512.2 378.0 L577.8 378.0" fill="none" stroke="#74c060" stroke-width="1.1" stroke-linejoin="round"/><path d="M293.0 378.0 L293.0 386.7 L295.0 388.7 L303.4 417.9 L352.1 417.9 L354.3 382.0 L358.1 378.0" fill="none" stroke="#e8505c" stroke-width="1.1" stroke-linejoin="round"/><path d="M577.8 378.0 L577.8 386.7 L575.8 388.7 L567.4 417.9 L518.7 417.9 L516.5 382.0 L512.7 378.0" fill="none" stroke="#e8505c" stroke-width="1.1" stroke-linejoin="round"/><path d="M402.5 378.0 L402.5 443.5 A9.5 14.5 0 0 0 412.0 458.0 L458.9 458.0 A9.5 14.5 0 0 0 468.4 443.5 L468.4 378.0" fill="none" stroke="#e8505c" stroke-width="1.1"/><path d="M402.5 444.5 L413.5 444.5 L413.5 441.5" fill="none" stroke="#e8505c" stroke-width="1.1" stroke-linejoin="round"/><path d="M468.4 444.5 L457.4 444.5 L457.4 441.5" fill="none" stroke="#e8505c" stroke-width="1.1" stroke-linejoin="round"/><path d="M413.8 443.2 L457.1 443.2" fill="none" stroke="#74c060" stroke-width="1.1" stroke-linejoin="round"/><path d="M270.0 335.3 L292.6 378.0" fill="none" stroke="#74c060" stroke-width="1.1" stroke-linejoin="round"/><path d="M357.5 378.0 L380.1 335.3" fill="none" stroke="#74c060" stroke-width="1.1" stroke-linejoin="round"/><path d="M380.1 335.3 L402.7 378.0" fill="none" stroke="#74c060" stroke-width="1.1" stroke-linejoin="round"/><path d="M467.6 378.0 L490.2 335.3" fill="none" stroke="#74c060" stroke-width="1.1" stroke-linejoin="round"/><path d="M490.2 335.3 L512.8 378.0" fill="none" stroke="#74c060" stroke-width="1.1" stroke-linejoin="round"/><path d="M577.7 378.0 L600.3 335.3" fill="none" stroke="#74c060" stroke-width="1.1" stroke-linejoin="round"/><path d="M600.3 335.3 L622.9 378.0" fill="none" stroke="#74c060" stroke-width="1.1" stroke-linejoin="round"/><path d="M687.8 378.0 L710.4 335.3" fill="none" stroke="#74c060" stroke-width="1.1" stroke-linejoin="round"/><path d="M270.0 378.0 L255.3 373.9 L255.3 365.4 L270.0 335.3" fill="none" stroke="#e8505c" stroke-width="1.1" stroke-linejoin="round"/><path d="M270.0 255.5 L270.0 378.0" fill="none" stroke="#74c060" stroke-width="1.1" stroke-linejoin="round"/><path d="M380.1 255.5 L380.1 378.0" fill="none" stroke="#74c060" stroke-width="1.1" stroke-linejoin="round"/><path d="M490.2 255.5 L490.2 378.0" fill="none" stroke="#74c060" stroke-width="1.1" stroke-linejoin="round"/><path d="M600.3 255.5 L600.3 378.0" fill="none" stroke="#74c060" stroke-width="1.1" stroke-linejoin="round"/><path d="M710.4 255.5 L710.4 378.0" fill="none" stroke="#74c060" stroke-width="1.1" stroke-linejoin="round"/><path d="M710.4 255.5 L710.4 378.0" fill="none" stroke="#e8505c" stroke-width="1.1" stroke-linejoin="round"/><path d="M270.0 298.2 L255.5 301.9 L255.5 331.1 L270.0 335.2" fill="none" stroke="#e8505c" stroke-width="1.1" stroke-linejoin="round"/><path d="M270.0 298.2 L710.4 298.2" fill="none" stroke="#2a9898" stroke-width="1.1" stroke-linejoin="round"/><path d="M270.0 335.2 L710.4 335.2" fill="none" stroke="#2a9898" stroke-width="1.1" stroke-linejoin="round"/></svg>
<div class="a" style="left:243px;top:505px;width:518px;height:344px;background:#8c8c8c;"></div>
<div class="a" style="left:244px;top:506px;width:516px;height:342px;background:#c6e5c7;"></div>
<svg class="a" style="left:0px;top:0px;pointer-events:none;" width="1601" height="899" viewBox="0 0 1601 899"><g><path d="M270.1 552.1l1.9 1.9 -1.9 1.9 -1.9 -1.9zM279.5 553.2h2.8v2.8h-2.8zM368.4 551.9l2.4 2.4 -2.4 2.4 -2.4 -2.4zM378.0 552.8h2.4v2.0h-2.4zM432.6 552.4h2.8v2.8h-2.8zM445.0 552.5l1.6 1.6 -1.6 1.6 -1.6 -1.6zM466.3 551.9l2.4 2.4 -2.4 2.4 -2.4 -2.4zM564.4 552.0l1.9 1.9 -1.9 1.9 -1.9 -1.9zM608.6 552.8l1.6 1.6 -1.6 1.6 -1.6 -1.6zM629.2 553.1h2.0v2.4h-2.0zM694.3 553.1h2.8v2.0h-2.8zM717.6 552.2l1.9 1.9 -1.9 1.9 -1.9 -1.9zM276.2 557.7l2.2 2.2 -2.2 2.2 -2.2 -2.2zM319.2 557.4l2.4 2.4 -2.4 2.4 -2.4 -2.4zM363.1 557.8l2.2 2.2 -2.2 2.2 -2.2 -2.2zM504.6 557.3l2.2 2.2 -2.2 2.2 -2.2 -2.2zM570.2 556.9l2.4 2.4 -2.4 2.4 -2.4 -2.4zM591.6 557.5l1.9 1.9 -1.9 1.9 -1.9 -1.9zM613.9 557.6l2.2 2.2 -2.2 2.2 -2.2 -2.2zM699.4 558.4h2.4v2.4h-2.4zM258.4 563.6h2.8v2.8h-2.8zM270.7 563.5l1.9 1.9 -1.9 1.9 -1.9 -1.9zM292.2 562.6l2.4 2.4 -2.4 2.4 -2.4 -2.4zM313.9 562.6l2.2 2.2 -2.2 2.2 -2.2 -2.2zM324.8 563.1l1.6 1.6 -1.6 1.6 -1.6 -1.6zM575.7 563.1l1.9 1.9 -1.9 1.9 -1.9 -1.9zM640.6 562.2l2.4 2.4 -2.4 2.4 -2.4 -2.4zM318.3 569.4h2.8v2.4h-2.8zM339.8 569.0h2.4v2.0h-2.4zM352.3 569.0l1.6 1.6 -1.6 1.6 -1.6 -1.6zM362.9 568.6l1.6 1.6 -1.6 1.6 -1.6 -1.6zM374.1 568.5l1.6 1.6 -1.6 1.6 -1.6 -1.6zM439.7 567.8l2.4 2.4 -2.4 2.4 -2.4 -2.4zM448.7 569.3h2.8v2.0h-2.8zM482.8 568.6l1.6 1.6 -1.6 1.6 -1.6 -1.6zM613.4 568.2l2.4 2.4 -2.4 2.4 -2.4 -2.4zM667.0 569.4h2.8v2.4h-2.8zM679.3 568.0l2.4 2.4 -2.4 2.4 -2.4 -2.4zM258.7 574.7h2.4v2.4h-2.4zM279.6 574.7h2.8v2.0h-2.8zM303.0 574.5l1.6 1.6 -1.6 1.6 -1.6 -1.6zM346.5 573.6l2.2 2.2 -2.2 2.2 -2.2 -2.2zM401.2 573.8l1.9 1.9 -1.9 1.9 -1.9 -1.9zM488.5 573.9l1.6 1.6 -1.6 1.6 -1.6 -1.6zM541.7 574.3h2.4v2.8h-2.4zM552.7 574.3h2.4v2.8h-2.4zM618.3 574.4h2.0v2.8h-2.0zM651.7 573.6l2.2 2.2 -2.2 2.2 -2.2 -2.2zM339.7 580.0h2.8v2.4h-2.8zM352.2 579.5l1.9 1.9 -1.9 1.9 -1.9 -1.9zM363.1 578.6l2.4 2.4 -2.4 2.4 -2.4 -2.4zM417.6 579.3l1.9 1.9 -1.9 1.9 -1.9 -1.9zM493.5 579.3l1.9 1.9 -1.9 1.9 -1.9 -1.9zM548.3 579.2l1.9 1.9 -1.9 1.9 -1.9 -1.9zM570.1 579.2l1.9 1.9 -1.9 1.9 -1.9 -1.9zM591.9 578.4l2.4 2.4 -2.4 2.4 -2.4 -2.4zM623.7 580.4h2.4v2.0h-2.4zM657.3 579.1l1.9 1.9 -1.9 1.9 -1.9 -1.9zM258.2 585.1h2.8v2.4h-2.8zM357.9 584.5l2.2 2.2 -2.2 2.2 -2.2 -2.2zM433.5 584.2l2.4 2.4 -2.4 2.4 -2.4 -2.4zM608.2 584.4l2.2 2.2 -2.2 2.2 -2.2 -2.2zM630.3 584.5l2.4 2.4 -2.4 2.4 -2.4 -2.4zM663.1 584.3l2.2 2.2 -2.2 2.2 -2.2 -2.2zM672.6 585.0h2.4v2.8h-2.4zM716.0 585.8h2.4v2.0h-2.4zM275.9 590.2l1.9 1.9 -1.9 1.9 -1.9 -1.9zM384.5 589.5l2.4 2.4 -2.4 2.4 -2.4 -2.4zM395.4 589.8l1.9 1.9 -1.9 1.9 -1.9 -1.9zM405.2 591.2h2.8v2.4h-2.8zM459.7 590.7h2.8v2.8h-2.8zM481.5 590.4h2.8v2.8h-2.8zM493.6 589.8l2.2 2.2 -2.2 2.2 -2.2 -2.2zM623.1 590.7h2.4v2.4h-2.4zM646.1 589.4l2.4 2.4 -2.4 2.4 -2.4 -2.4zM668.5 590.0l2.2 2.2 -2.2 2.2 -2.2 -2.2zM679.1 590.1l2.2 2.2 -2.2 2.2 -2.2 -2.2zM347.1 595.7l1.6 1.6 -1.6 1.6 -1.6 -1.6zM389.1 596.3h2.8v2.8h-2.8zM433.9 595.6l1.6 1.6 -1.6 1.6 -1.6 -1.6zM466.0 596.4h2.0v2.0h-2.0zM487.2 595.7h2.8v2.8h-2.8zM541.8 595.8h2.4v2.8h-2.4zM552.7 596.1h2.4v2.4h-2.4zM564.4 595.7l1.6 1.6 -1.6 1.6 -1.6 -1.6zM274.8 601.2h2.0v2.4h-2.0zM341.1 600.5l2.2 2.2 -2.2 2.2 -2.2 -2.2zM350.7 601.4h2.4v2.4h-2.4zM417.2 600.8l2.2 2.2 -2.2 2.2 -2.2 -2.2zM536.8 601.2h2.0v2.8h-2.0zM559.6 601.0l1.9 1.9 -1.9 1.9 -1.9 -1.9zM581.1 600.9l2.2 2.2 -2.2 2.2 -2.2 -2.2zM334.8 607.1h2.0v2.0h-2.0zM345.5 607.5h2.0v2.0h-2.0zM477.9 605.9l1.9 1.9 -1.9 1.9 -1.9 -1.9zM519.6 607.1h2.8v2.4h-2.8zM695.8 605.8l2.2 2.2 -2.2 2.2 -2.2 -2.2zM705.3 606.5h2.4v2.8h-2.4zM298.0 611.8l1.6 1.6 -1.6 1.6 -1.6 -1.6zM328.8 612.9h2.8v2.0h-2.8zM396.0 611.5l2.2 2.2 -2.2 2.2 -2.2 -2.2zM461.1 611.1l2.4 2.4 -2.4 2.4 -2.4 -2.4zM525.1 612.6h2.8v2.0h-2.8zM591.8 611.6l2.4 2.4 -2.4 2.4 -2.4 -2.4zM634.4 611.8h2.4v2.8h-2.4zM690.2 612.0l1.9 1.9 -1.9 1.9 -1.9 -1.9zM268.8 618.0h2.8v2.0h-2.8zM301.8 618.2h2.8v2.4h-2.8zM475.9 617.6h2.8v2.4h-2.8zM619.4 617.7l1.6 1.6 -1.6 1.6 -1.6 -1.6zM661.7 617.7h2.4v2.0h-2.4zM674.0 616.9l2.2 2.2 -2.2 2.2 -2.2 -2.2zM683.4 617.9h2.8v2.8h-2.8zM264.7 622.7l1.6 1.6 -1.6 1.6 -1.6 -1.6zM297.4 622.2l2.4 2.4 -2.4 2.4 -2.4 -2.4zM308.6 622.6l1.6 1.6 -1.6 1.6 -1.6 -1.6zM319.2 622.1l2.4 2.4 -2.4 2.4 -2.4 -2.4zM330.3 621.9l2.4 2.4 -2.4 2.4 -2.4 -2.4zM372.4 623.1h2.4v2.8h-2.4zM471.1 623.1h2.0v2.4h-2.0zM483.1 622.9l1.6 1.6 -1.6 1.6 -1.6 -1.6zM635.5 622.5l2.2 2.2 -2.2 2.2 -2.2 -2.2zM646.3 622.4l1.9 1.9 -1.9 1.9 -1.9 -1.9zM655.6 623.3h2.8v2.4h-2.8zM688.8 623.1h2.0v2.4h-2.0zM259.8 628.4l1.6 1.6 -1.6 1.6 -1.6 -1.6zM269.4 628.7h2.0v2.4h-2.0zM279.8 628.6h2.4v2.8h-2.4zM292.2 627.9l2.2 2.2 -2.2 2.2 -2.2 -2.2zM323.4 628.0h2.4v2.8h-2.4zM379.4 627.5l2.4 2.4 -2.4 2.4 -2.4 -2.4zM454.3 629.0h2.8v2.0h-2.8zM477.7 627.2l2.4 2.4 -2.4 2.4 -2.4 -2.4zM519.4 628.3h2.8v2.8h-2.8zM619.1 627.9l1.9 1.9 -1.9 1.9 -1.9 -1.9zM629.7 627.6l2.2 2.2 -2.2 2.2 -2.2 -2.2zM674.0 627.6l1.9 1.9 -1.9 1.9 -1.9 -1.9zM683.2 628.9h2.4v2.0h-2.4zM717.6 627.6l2.2 2.2 -2.2 2.2 -2.2 -2.2zM308.9 632.7l2.2 2.2 -2.2 2.2 -2.2 -2.2zM329.2 634.0h2.0v2.4h-2.0zM417.6 633.0l2.4 2.4 -2.4 2.4 -2.4 -2.4zM428.1 633.0l1.9 1.9 -1.9 1.9 -1.9 -1.9zM470.7 634.1h2.8v2.8h-2.8zM482.6 632.9l2.4 2.4 -2.4 2.4 -2.4 -2.4zM656.4 633.9h2.4v2.8h-2.4zM666.5 633.8h2.8v2.0h-2.8zM281.2 638.6l1.9 1.9 -1.9 1.9 -1.9 -1.9zM291.2 638.8h2.0v2.8h-2.0zM323.3 639.5h2.4v2.4h-2.4zM390.2 638.7l1.9 1.9 -1.9 1.9 -1.9 -1.9zM477.6 638.1l2.4 2.4 -2.4 2.4 -2.4 -2.4zM541.4 639.6h2.8v2.4h-2.8zM573.8 639.1h2.8v2.4h-2.8zM585.5 639.2h2.8v2.4h-2.8zM629.2 639.7h2.0v2.4h-2.0zM651.5 638.1l2.4 2.4 -2.4 2.4 -2.4 -2.4zM308.7 644.0l2.2 2.2 -2.2 2.2 -2.2 -2.2zM396.0 644.4l1.6 1.6 -1.6 1.6 -1.6 -1.6zM416.1 644.3h2.8v2.8h-2.8zM439.4 644.7l1.6 1.6 -1.6 1.6 -1.6 -1.6zM470.7 644.3h2.0v2.8h-2.0zM536.6 645.0h2.0v2.4h-2.0zM557.9 645.3h2.4v2.0h-2.4zM602.6 643.8l2.4 2.4 -2.4 2.4 -2.4 -2.4zM634.5 644.9h2.0v2.8h-2.0zM313.1 650.2h2.0v2.0h-2.0zM432.5 649.7h2.4v2.8h-2.4zM444.4 649.4l1.6 1.6 -1.6 1.6 -1.6 -1.6zM466.5 649.6l1.9 1.9 -1.9 1.9 -1.9 -1.9zM520.9 650.0l1.6 1.6 -1.6 1.6 -1.6 -1.6zM541.9 650.8h2.4v2.0h-2.4zM597.5 649.3l1.9 1.9 -1.9 1.9 -1.9 -1.9zM608.1 648.6l2.4 2.4 -2.4 2.4 -2.4 -2.4zM684.5 650.1l1.6 1.6 -1.6 1.6 -1.6 -1.6zM297.7 655.0l1.9 1.9 -1.9 1.9 -1.9 -1.9zM319.1 654.5l2.4 2.4 -2.4 2.4 -2.4 -2.4zM372.8 655.7h2.0v2.4h-2.0zM428.5 655.6l1.6 1.6 -1.6 1.6 -1.6 -1.6zM472.2 654.3l2.4 2.4 -2.4 2.4 -2.4 -2.4zM503.7 655.5h2.0v2.4h-2.0zM646.2 654.3l2.4 2.4 -2.4 2.4 -2.4 -2.4zM668.4 655.2l1.6 1.6 -1.6 1.6 -1.6 -1.6zM269.6 660.4h2.4v2.8h-2.4zM291.1 661.1h2.4v2.8h-2.4zM499.7 660.9l1.6 1.6 -1.6 1.6 -1.6 -1.6zM586.6 660.2l1.9 1.9 -1.9 1.9 -1.9 -1.9zM608.4 660.1l1.9 1.9 -1.9 1.9 -1.9 -1.9zM651.0 660.7h2.0v2.8h-2.0zM673.5 659.6l2.2 2.2 -2.2 2.2 -2.2 -2.2zM695.1 660.3l2.2 2.2 -2.2 2.2 -2.2 -2.2zM264.9 665.4l2.4 2.4 -2.4 2.4 -2.4 -2.4zM296.5 666.9h2.4v2.0h-2.4zM308.2 665.5l2.2 2.2 -2.2 2.2 -2.2 -2.2zM330.3 665.9l1.9 1.9 -1.9 1.9 -1.9 -1.9zM384.9 665.7l1.6 1.6 -1.6 1.6 -1.6 -1.6zM438.0 666.4h2.0v2.4h-2.0zM614.0 665.8l1.6 1.6 -1.6 1.6 -1.6 -1.6zM679.2 666.1l1.9 1.9 -1.9 1.9 -1.9 -1.9zM690.2 665.0l2.2 2.2 -2.2 2.2 -2.2 -2.2zM699.2 665.9h2.8v2.8h-2.8zM259.5 671.3l1.9 1.9 -1.9 1.9 -1.9 -1.9zM269.4 671.7h2.8v2.0h-2.8zM313.8 671.4l1.6 1.6 -1.6 1.6 -1.6 -1.6zM388.9 671.6h2.0v2.0h-2.0zM411.8 670.7l2.2 2.2 -2.2 2.2 -2.2 -2.2zM432.9 671.6h2.0v2.4h-2.0zM467.0 671.4l1.9 1.9 -1.9 1.9 -1.9 -1.9zM554.0 670.7l2.2 2.2 -2.2 2.2 -2.2 -2.2zM606.7 671.4h2.8v2.4h-2.8zM685.0 670.9l2.2 2.2 -2.2 2.2 -2.2 -2.2zM717.5 670.5l2.2 2.2 -2.2 2.2 -2.2 -2.2zM287.0 676.2l2.2 2.2 -2.2 2.2 -2.2 -2.2zM341.0 676.5l1.6 1.6 -1.6 1.6 -1.6 -1.6zM374.3 676.0l2.4 2.4 -2.4 2.4 -2.4 -2.4zM427.5 677.0h2.0v2.0h-2.0zM439.4 676.1l1.9 1.9 -1.9 1.9 -1.9 -1.9zM470.8 676.9h2.8v2.8h-2.8zM612.6 677.0h2.8v2.0h-2.8zM657.4 675.7l2.4 2.4 -2.4 2.4 -2.4 -2.4zM700.7 676.5l2.2 2.2 -2.2 2.2 -2.2 -2.2zM314.3 681.7l2.4 2.4 -2.4 2.4 -2.4 -2.4zM357.4 682.5l1.6 1.6 -1.6 1.6 -1.6 -1.6zM443.3 682.8h2.8v2.4h-2.8zM477.4 681.3l2.2 2.2 -2.2 2.2 -2.2 -2.2zM608.1 681.9l2.2 2.2 -2.2 2.2 -2.2 -2.2zM630.3 681.9l2.2 2.2 -2.2 2.2 -2.2 -2.2zM640.6 681.3l2.4 2.4 -2.4 2.4 -2.4 -2.4zM650.6 682.1h2.0v2.8h-2.0zM672.7 682.2h2.8v2.4h-2.8zM253.9 687.6l1.6 1.6 -1.6 1.6 -1.6 -1.6zM263.6 687.8h2.0v2.8h-2.0zM350.6 687.9h2.8v2.8h-2.8zM394.9 688.5h2.0v2.0h-2.0zM450.1 687.6l1.9 1.9 -1.9 1.9 -1.9 -1.9zM515.8 687.1l1.9 1.9 -1.9 1.9 -1.9 -1.9zM570.5 687.3l1.6 1.6 -1.6 1.6 -1.6 -1.6zM280.2 693.2h2.4v2.0h-2.4zM302.1 693.0h2.8v2.8h-2.8zM421.7 693.2h2.0v2.8h-2.0zM434.1 693.3l1.6 1.6 -1.6 1.6 -1.6 -1.6zM520.7 692.6l2.2 2.2 -2.2 2.2 -2.2 -2.2zM695.4 692.4l1.9 1.9 -1.9 1.9 -1.9 -1.9zM717.0 692.7l1.6 1.6 -1.6 1.6 -1.6 -1.6zM361.9 698.7h2.4v2.8h-2.4zM428.2 698.8l1.6 1.6 -1.6 1.6 -1.6 -1.6zM472.4 698.3l1.9 1.9 -1.9 1.9 -1.9 -1.9zM482.7 698.5l1.6 1.6 -1.6 1.6 -1.6 -1.6zM559.5 697.7l2.2 2.2 -2.2 2.2 -2.2 -2.2zM624.6 697.2l2.4 2.4 -2.4 2.4 -2.4 -2.4zM666.8 698.7h2.4v2.4h-2.4zM688.7 698.9h2.4v2.8h-2.4zM711.8 697.5l2.2 2.2 -2.2 2.2 -2.2 -2.2zM280.0 703.6h2.8v2.8h-2.8zM346.5 702.9l2.2 2.2 -2.2 2.2 -2.2 -2.2zM433.6 703.8l1.9 1.9 -1.9 1.9 -1.9 -1.9zM498.6 704.5h2.0v2.4h-2.0zM521.4 703.9l1.6 1.6 -1.6 1.6 -1.6 -1.6zM552.3 703.7h2.4v2.8h-2.4zM651.9 703.5l2.2 2.2 -2.2 2.2 -2.2 -2.2zM684.8 704.1l1.6 1.6 -1.6 1.6 -1.6 -1.6zM695.8 703.4l2.2 2.2 -2.2 2.2 -2.2 -2.2zM298.0 708.5l2.2 2.2 -2.2 2.2 -2.2 -2.2zM352.2 708.7l1.9 1.9 -1.9 1.9 -1.9 -1.9zM363.1 708.7l2.2 2.2 -2.2 2.2 -2.2 -2.2zM395.7 709.0l1.9 1.9 -1.9 1.9 -1.9 -1.9zM417.6 708.5l2.2 2.2 -2.2 2.2 -2.2 -2.2zM428.7 708.6l2.2 2.2 -2.2 2.2 -2.2 -2.2zM450.1 709.1l1.9 1.9 -1.9 1.9 -1.9 -1.9zM493.9 708.5l2.4 2.4 -2.4 2.4 -2.4 -2.4zM526.6 708.2l2.2 2.2 -2.2 2.2 -2.2 -2.2zM590.8 710.0h2.8v2.0h-2.8zM646.8 709.1l1.6 1.6 -1.6 1.6 -1.6 -1.6zM280.4 715.1h2.0v2.8h-2.0zM324.5 714.7l1.6 1.6 -1.6 1.6 -1.6 -1.6zM356.7 715.0h2.4v2.0h-2.4zM389.0 715.0h2.8v2.4h-2.8zM455.5 714.2l2.4 2.4 -2.4 2.4 -2.4 -2.4zM466.4 714.4l1.9 1.9 -1.9 1.9 -1.9 -1.9zM498.5 714.9h2.0v2.0h-2.0zM541.6 715.6h2.8v2.0h-2.8zM619.2 714.6l1.9 1.9 -1.9 1.9 -1.9 -1.9zM629.3 714.7h2.0v2.4h-2.0zM684.5 713.9l2.2 2.2 -2.2 2.2 -2.2 -2.2zM716.3 715.1h2.0v2.4h-2.0zM252.4 720.4h2.8v2.4h-2.8zM308.9 719.5l2.4 2.4 -2.4 2.4 -2.4 -2.4zM318.4 720.5h2.0v2.0h-2.0zM330.2 719.6l2.4 2.4 -2.4 2.4 -2.4 -2.4zM372.6 720.3h2.4v2.0h-2.4zM428.4 719.2l2.4 2.4 -2.4 2.4 -2.4 -2.4zM494.0 719.3l2.4 2.4 -2.4 2.4 -2.4 -2.4zM623.8 720.4h2.4v2.4h-2.4zM657.1 719.2l2.2 2.2 -2.2 2.2 -2.2 -2.2zM368.3 725.3l1.9 1.9 -1.9 1.9 -1.9 -1.9zM421.5 725.9h2.8v2.8h-2.8zM455.4 724.6l2.2 2.2 -2.2 2.2 -2.2 -2.2zM541.4 725.8h2.8v2.4h-2.8zM552.5 725.5h2.0v2.8h-2.0zM574.6 725.7h2.8v2.8h-2.8zM619.3 724.4l2.4 2.4 -2.4 2.4 -2.4 -2.4zM629.3 725.6h2.4v2.8h-2.4zM662.8 725.6l1.6 1.6 -1.6 1.6 -1.6 -1.6zM705.1 725.3h2.0v2.8h-2.0zM275.6 730.1l2.2 2.2 -2.2 2.2 -2.2 -2.2zM297.6 730.1l2.2 2.2 -2.2 2.2 -2.2 -2.2zM482.6 730.7l1.6 1.6 -1.6 1.6 -1.6 -1.6zM503.9 731.7h2.0v2.0h-2.0zM514.8 731.2h2.4v2.4h-2.4zM635.3 730.8l1.9 1.9 -1.9 1.9 -1.9 -1.9zM367.7 737.0h2.0v2.0h-2.0zM401.5 735.5l1.9 1.9 -1.9 1.9 -1.9 -1.9zM486.6 737.2h2.8v2.0h-2.8zM554.1 735.3l2.2 2.2 -2.2 2.2 -2.2 -2.2zM564.6 736.3l1.6 1.6 -1.6 1.6 -1.6 -1.6zM673.4 736.0l1.9 1.9 -1.9 1.9 -1.9 -1.9zM265.1 740.7l2.2 2.2 -2.2 2.2 -2.2 -2.2zM308.4 740.8l2.4 2.4 -2.4 2.4 -2.4 -2.4zM427.3 741.6h2.4v2.4h-2.4zM439.3 741.0l2.2 2.2 -2.2 2.2 -2.2 -2.2zM525.3 741.7h2.4v2.8h-2.4zM559.3 740.7l2.2 2.2 -2.2 2.2 -2.2 -2.2zM602.9 741.4l2.2 2.2 -2.2 2.2 -2.2 -2.2zM690.1 741.2l2.2 2.2 -2.2 2.2 -2.2 -2.2zM700.8 741.1l2.4 2.4 -2.4 2.4 -2.4 -2.4zM259.6 747.1l1.6 1.6 -1.6 1.6 -1.6 -1.6zM301.6 747.6h2.8v2.0h-2.8zM334.4 747.4h2.8v2.0h-2.8zM423.0 746.2l2.2 2.2 -2.2 2.2 -2.2 -2.2zM477.4 746.1l2.4 2.4 -2.4 2.4 -2.4 -2.4zM487.8 747.0h2.0v2.4h-2.0zM662.4 747.3l1.6 1.6 -1.6 1.6 -1.6 -1.6zM693.8 747.5h2.8v2.0h-2.8zM704.9 747.7h2.4v2.4h-2.4zM265.2 751.6l2.2 2.2 -2.2 2.2 -2.2 -2.2zM329.2 752.9h2.8v2.0h-2.8zM352.0 751.9l1.9 1.9 -1.9 1.9 -1.9 -1.9zM361.9 753.2h2.8v2.0h-2.8zM395.8 752.3l1.6 1.6 -1.6 1.6 -1.6 -1.6zM481.8 752.9h2.4v2.4h-2.4zM494.0 752.2l1.6 1.6 -1.6 1.6 -1.6 -1.6zM592.3 751.6l2.2 2.2 -2.2 2.2 -2.2 -2.2zM602.6 752.6l1.6 1.6 -1.6 1.6 -1.6 -1.6zM613.6 751.4l2.4 2.4 -2.4 2.4 -2.4 -2.4zM635.6 752.5l1.6 1.6 -1.6 1.6 -1.6 -1.6zM259.1 757.3l1.9 1.9 -1.9 1.9 -1.9 -1.9zM345.0 757.8h2.8v2.4h-2.8zM433.7 758.1l1.6 1.6 -1.6 1.6 -1.6 -1.6zM630.3 757.7l1.6 1.6 -1.6 1.6 -1.6 -1.6zM641.2 756.6l2.4 2.4 -2.4 2.4 -2.4 -2.4zM254.2 762.9l1.6 1.6 -1.6 1.6 -1.6 -1.6zM307.4 763.8h2.4v2.8h-2.4zM363.2 763.0l1.6 1.6 -1.6 1.6 -1.6 -1.6zM407.0 763.3l1.9 1.9 -1.9 1.9 -1.9 -1.9zM427.3 763.3h2.8v2.8h-2.8zM481.6 763.9h2.8v2.4h-2.8zM493.9 763.0l1.9 1.9 -1.9 1.9 -1.9 -1.9zM503.4 763.8h2.4v2.0h-2.4zM537.2 763.2l1.6 1.6 -1.6 1.6 -1.6 -1.6zM569.4 764.2h2.0v2.0h-2.0zM613.7 763.0l1.6 1.6 -1.6 1.6 -1.6 -1.6zM270.6 767.4l2.4 2.4 -2.4 2.4 -2.4 -2.4zM291.3 769.6h2.4v2.0h-2.4zM367.4 769.1h2.8v2.0h-2.8zM379.8 768.5l1.9 1.9 -1.9 1.9 -1.9 -1.9zM586.6 767.6l2.2 2.2 -2.2 2.2 -2.2 -2.2zM650.7 768.9h2.0v2.4h-2.0zM662.7 767.9l2.2 2.2 -2.2 2.2 -2.2 -2.2zM673.8 768.2l1.6 1.6 -1.6 1.6 -1.6 -1.6zM717.6 767.9l2.2 2.2 -2.2 2.2 -2.2 -2.2zM252.8 774.0h2.0v2.4h-2.0zM296.3 774.6h2.4v2.4h-2.4zM319.1 773.4l2.4 2.4 -2.4 2.4 -2.4 -2.4zM329.2 774.2h2.4v2.4h-2.4zM503.4 774.5h2.4v2.4h-2.4zM558.0 774.3h2.8v2.8h-2.8zM602.9 773.6l1.9 1.9 -1.9 1.9 -1.9 -1.9zM667.6 773.9h2.0v2.8h-2.0zM679.1 773.7l1.6 1.6 -1.6 1.6 -1.6 -1.6zM281.1 778.3l2.4 2.4 -2.4 2.4 -2.4 -2.4zM301.9 779.8h2.0v2.4h-2.0zM324.9 779.0l1.9 1.9 -1.9 1.9 -1.9 -1.9zM410.3 779.6h2.8v2.0h-2.8zM423.1 778.4l2.2 2.2 -2.2 2.2 -2.2 -2.2zM443.5 779.8h2.4v2.4h-2.4zM530.5 779.6h2.4v2.8h-2.4zM542.3 780.2h2.0v2.4h-2.0zM608.3 779.0l2.2 2.2 -2.2 2.2 -2.2 -2.2zM628.6 779.9h2.4v2.8h-2.4zM639.9 779.3h2.4v2.8h-2.4zM706.6 778.9l2.4 2.4 -2.4 2.4 -2.4 -2.4zM716.3 779.6h2.0v2.4h-2.0zM297.6 783.9l2.2 2.2 -2.2 2.2 -2.2 -2.2zM350.6 784.8h2.8v2.4h-2.8zM384.8 784.5l1.9 1.9 -1.9 1.9 -1.9 -1.9zM427.1 785.1h2.0v2.4h-2.0zM448.8 785.4h2.8v2.0h-2.8zM472.1 784.4l2.2 2.2 -2.2 2.2 -2.2 -2.2zM514.5 785.3h2.0v2.0h-2.0zM536.1 785.3h2.0v2.4h-2.0zM581.1 784.6l1.6 1.6 -1.6 1.6 -1.6 -1.6zM592.2 784.3l2.4 2.4 -2.4 2.4 -2.4 -2.4zM602.0 785.7h2.4v2.0h-2.4zM646.4 784.2l2.2 2.2 -2.2 2.2 -2.2 -2.2zM657.7 784.8l1.6 1.6 -1.6 1.6 -1.6 -1.6zM258.2 790.2h2.0v2.4h-2.0zM269.4 790.9h2.0v2.0h-2.0zM422.7 789.1l2.4 2.4 -2.4 2.4 -2.4 -2.4zM432.9 791.1h2.4v2.0h-2.4zM488.8 789.4l2.2 2.2 -2.2 2.2 -2.2 -2.2zM498.4 790.4h2.4v2.4h-2.4zM531.2 790.4h2.0v2.4h-2.0zM554.2 790.5l1.6 1.6 -1.6 1.6 -1.6 -1.6zM597.5 790.5l1.6 1.6 -1.6 1.6 -1.6 -1.6zM716.0 790.6h2.0v2.0h-2.0zM330.4 795.3l1.9 1.9 -1.9 1.9 -1.9 -1.9zM340.9 795.5l1.6 1.6 -1.6 1.6 -1.6 -1.6zM383.7 795.6h2.8v2.8h-2.8zM394.2 796.0h2.4v2.0h-2.4zM427.4 795.8h2.4v2.8h-2.4zM449.4 796.3h2.4v2.4h-2.4zM472.4 794.9l1.9 1.9 -1.9 1.9 -1.9 -1.9zM601.8 795.8h2.4v2.4h-2.4zM635.5 794.9l1.9 1.9 -1.9 1.9 -1.9 -1.9zM281.3 801.0l1.9 1.9 -1.9 1.9 -1.9 -1.9zM292.2 800.8l1.9 1.9 -1.9 1.9 -1.9 -1.9zM433.7 801.0l1.9 1.9 -1.9 1.9 -1.9 -1.9zM454.9 801.2h2.4v2.4h-2.4zM541.9 801.2h2.0v2.8h-2.0zM565.0 800.1l2.2 2.2 -2.2 2.2 -2.2 -2.2zM629.8 800.9l1.6 1.6 -1.6 1.6 -1.6 -1.6zM652.2 801.3l1.6 1.6 -1.6 1.6 -1.6 -1.6zM706.6 799.9l2.4 2.4 -2.4 2.4 -2.4 -2.4zM298.0 806.1l2.2 2.2 -2.2 2.2 -2.2 -2.2zM406.7 805.2l2.4 2.4 -2.4 2.4 -2.4 -2.4zM428.3 805.7l2.4 2.4 -2.4 2.4 -2.4 -2.4zM471.8 806.3l1.9 1.9 -1.9 1.9 -1.9 -1.9zM559.2 805.4l2.4 2.4 -2.4 2.4 -2.4 -2.4zM580.0 806.7h2.0v2.8h-2.0zM633.9 806.9h2.8v2.4h-2.8zM646.7 805.5l2.4 2.4 -2.4 2.4 -2.4 -2.4zM690.0 805.8l1.9 1.9 -1.9 1.9 -1.9 -1.9zM270.4 811.4l1.6 1.6 -1.6 1.6 -1.6 -1.6zM290.8 812.3h2.4v2.0h-2.4zM346.9 810.8l2.4 2.4 -2.4 2.4 -2.4 -2.4zM574.1 812.3h2.8v2.0h-2.8zM597.1 812.1l1.6 1.6 -1.6 1.6 -1.6 -1.6zM650.5 811.7h2.4v2.8h-2.4zM716.0 812.3h2.8v2.0h-2.8zM592.0 817.0l1.6 1.6 -1.6 1.6 -1.6 -1.6zM666.5 817.4h2.8v2.4h-2.8zM279.5 823.2h2.8v2.4h-2.8zM335.6 822.0l2.2 2.2 -2.2 2.2 -2.2 -2.2zM346.7 822.0l2.2 2.2 -2.2 2.2 -2.2 -2.2zM388.9 823.2h2.4v2.4h-2.4zM411.8 822.9l1.6 1.6 -1.6 1.6 -1.6 -1.6zM422.9 821.6l2.4 2.4 -2.4 2.4 -2.4 -2.4zM434.3 821.6l2.4 2.4 -2.4 2.4 -2.4 -2.4zM532.1 822.0l2.2 2.2 -2.2 2.2 -2.2 -2.2zM585.0 823.3h2.8v2.0h-2.8zM672.8 823.2h2.4v2.0h-2.4zM297.8 828.0l1.6 1.6 -1.6 1.6 -1.6 -1.6zM396.0 827.5l2.4 2.4 -2.4 2.4 -2.4 -2.4zM416.7 828.3h2.0v2.4h-2.0zM438.0 828.1h2.4v2.8h-2.4zM449.5 828.3h2.0v2.0h-2.0zM460.1 828.5h2.4v2.8h-2.4zM472.1 827.9l1.6 1.6 -1.6 1.6 -1.6 -1.6zM603.0 827.5l1.9 1.9 -1.9 1.9 -1.9 -1.9zM656.5 828.5h2.4v2.4h-2.4zM701.2 827.6l1.9 1.9 -1.9 1.9 -1.9 -1.9zM301.8 834.2h2.4v2.0h-2.4zM357.6 833.0l2.4 2.4 -2.4 2.4 -2.4 -2.4zM367.1 833.8h2.8v2.0h-2.8zM509.8 832.8l2.2 2.2 -2.2 2.2 -2.2 -2.2zM597.7 833.3l1.6 1.6 -1.6 1.6 -1.6 -1.6zM619.1 832.8l1.9 1.9 -1.9 1.9 -1.9 -1.9zM629.8 833.1l1.9 1.9 -1.9 1.9 -1.9 -1.9zM717.6 832.6l2.2 2.2 -2.2 2.2 -2.2 -2.2zM297.4 838.0l2.2 2.2 -2.2 2.2 -2.2 -2.2zM428.7 838.1l2.4 2.4 -2.4 2.4 -2.4 -2.4zM503.5 839.7h2.0v2.0h-2.0zM601.7 839.1h2.0v2.0h-2.0zM701.0 838.0l2.4 2.4 -2.4 2.4 -2.4 -2.4z" fill="#a6d6f0"/><path d="M346.6 552.9l1.6 1.6 -1.6 1.6 -1.6 -1.6zM423.4 551.6l2.2 2.2 -2.2 2.2 -2.2 -2.2zM455.5 552.7l1.6 1.6 -1.6 1.6 -1.6 -1.6zM531.7 552.6l1.6 1.6 -1.6 1.6 -1.6 -1.6zM673.5 552.8l1.6 1.6 -1.6 1.6 -1.6 -1.6zM329.0 557.9h2.0v2.8h-2.0zM384.6 557.2l2.4 2.4 -2.4 2.4 -2.4 -2.4zM438.4 558.0h2.0v2.4h-2.0zM444.8 562.8l2.2 2.2 -2.2 2.2 -2.2 -2.2zM585.5 563.8h2.4v2.4h-2.4zM652.2 563.1l1.6 1.6 -1.6 1.6 -1.6 -1.6zM661.5 563.7h2.4v2.4h-2.4zM717.4 562.6l2.4 2.4 -2.4 2.4 -2.4 -2.4zM308.2 568.8l1.9 1.9 -1.9 1.9 -1.9 -1.9zM472.4 568.7l1.9 1.9 -1.9 1.9 -1.9 -1.9zM690.3 569.1l1.6 1.6 -1.6 1.6 -1.6 -1.6zM574.9 574.8h2.0v2.8h-2.0zM628.8 574.6h2.0v2.4h-2.0zM252.8 579.8h2.0v2.4h-2.0zM601.5 580.4h2.8v2.0h-2.8zM712.0 579.6l1.6 1.6 -1.6 1.6 -1.6 -1.6zM302.3 585.3h2.0v2.4h-2.0zM367.5 585.3h2.0v2.8h-2.0zM499.6 585.1l1.9 1.9 -1.9 1.9 -1.9 -1.9zM531.8 584.3l2.4 2.4 -2.4 2.4 -2.4 -2.4zM641.2 584.6l2.4 2.4 -2.4 2.4 -2.4 -2.4zM695.1 585.2l1.6 1.6 -1.6 1.6 -1.6 -1.6zM286.4 589.8l2.2 2.2 -2.2 2.2 -2.2 -2.2zM329.4 590.8h2.0v2.0h-2.0zM417.8 589.8l1.9 1.9 -1.9 1.9 -1.9 -1.9zM558.3 591.2h2.0v2.0h-2.0zM634.4 590.8h2.4v2.8h-2.4zM657.2 589.4l2.2 2.2 -2.2 2.2 -2.2 -2.2zM710.4 590.9h2.8v2.8h-2.8zM312.6 596.3h2.0v2.4h-2.0zM521.0 595.0l2.4 2.4 -2.4 2.4 -2.4 -2.4zM574.4 596.0h2.8v2.0h-2.8zM607.2 596.0h2.8v2.4h-2.8zM661.4 596.4h2.4v2.8h-2.4zM471.8 600.7l2.4 2.4 -2.4 2.4 -2.4 -2.4zM525.9 601.5h2.0v2.8h-2.0zM258.6 607.3h2.0v2.0h-2.0zM281.4 606.5l1.9 1.9 -1.9 1.9 -1.9 -1.9zM530.9 607.3h2.4v2.0h-2.4zM672.8 606.8h2.0v2.8h-2.0zM274.6 612.1h2.0v2.8h-2.0zM492.4 612.1h2.8v2.8h-2.8zM569.2 612.4h2.0v2.8h-2.0zM623.3 612.8h2.8v2.4h-2.8zM313.7 617.2l2.2 2.2 -2.2 2.2 -2.2 -2.2zM411.9 616.4l2.2 2.2 -2.2 2.2 -2.2 -2.2zM695.5 616.5l2.4 2.4 -2.4 2.4 -2.4 -2.4zM276.0 622.2l2.4 2.4 -2.4 2.4 -2.4 -2.4zM385.1 622.7l1.9 1.9 -1.9 1.9 -1.9 -1.9zM428.8 621.9l2.2 2.2 -2.2 2.2 -2.2 -2.2zM450.0 622.0l2.4 2.4 -2.4 2.4 -2.4 -2.4zM505.0 622.3l2.4 2.4 -2.4 2.4 -2.4 -2.4zM357.8 627.5l2.2 2.2 -2.2 2.2 -2.2 -2.2zM401.1 627.5l2.4 2.4 -2.4 2.4 -2.4 -2.4zM319.2 634.0l1.6 1.6 -1.6 1.6 -1.6 -1.6zM384.8 633.1l2.2 2.2 -2.2 2.2 -2.2 -2.2zM395.6 633.6l1.6 1.6 -1.6 1.6 -1.6 -1.6zM537.8 632.5l2.4 2.4 -2.4 2.4 -2.4 -2.4zM635.7 632.7l2.2 2.2 -2.2 2.2 -2.2 -2.2zM645.6 633.9h2.0v2.0h-2.0zM690.2 633.3l1.6 1.6 -1.6 1.6 -1.6 -1.6zM335.9 638.5l2.4 2.4 -2.4 2.4 -2.4 -2.4zM357.5 637.9l2.4 2.4 -2.4 2.4 -2.4 -2.4zM564.6 638.0l2.4 2.4 -2.4 2.4 -2.4 -2.4zM597.7 638.4l1.9 1.9 -1.9 1.9 -1.9 -1.9zM352.1 644.4l1.6 1.6 -1.6 1.6 -1.6 -1.6zM406.6 643.6l2.4 2.4 -2.4 2.4 -2.4 -2.4zM482.9 643.9l1.9 1.9 -1.9 1.9 -1.9 -1.9zM514.7 644.6h2.4v2.4h-2.4zM580.1 644.6h2.0v2.4h-2.0zM612.5 645.0h2.8v2.0h-2.8zM700.9 643.9l2.4 2.4 -2.4 2.4 -2.4 -2.4zM323.7 650.2h2.4v2.0h-2.4zM563.2 650.3h2.4v2.4h-2.4zM716.3 650.4h2.0v2.4h-2.0zM263.7 655.7h2.4v2.4h-2.4zM395.9 654.9l2.2 2.2 -2.2 2.2 -2.2 -2.2zM460.9 654.2l2.4 2.4 -2.4 2.4 -2.4 -2.4zM525.1 655.7h2.4v2.8h-2.4zM537.7 654.7l2.4 2.4 -2.4 2.4 -2.4 -2.4zM580.2 655.4h2.4v2.8h-2.4zM591.8 654.4l2.2 2.2 -2.2 2.2 -2.2 -2.2zM624.8 654.5l2.2 2.2 -2.2 2.2 -2.2 -2.2zM400.0 661.0h2.0v2.8h-2.0zM530.6 661.2h2.4v2.0h-2.4zM351.5 666.0h2.0v2.8h-2.0zM394.9 666.4h2.0v2.4h-2.0zM417.2 665.5l2.4 2.4 -2.4 2.4 -2.4 -2.4zM482.9 665.4l2.4 2.4 -2.4 2.4 -2.4 -2.4zM524.8 666.2h2.8v2.4h-2.8zM590.2 666.6h2.8v2.8h-2.8zM601.7 666.2h2.4v2.4h-2.4zM624.5 665.8l2.2 2.2 -2.2 2.2 -2.2 -2.2zM634.0 666.0h2.8v2.4h-2.8zM711.9 665.5l2.2 2.2 -2.2 2.2 -2.2 -2.2zM334.4 671.9h2.0v2.0h-2.0zM357.3 670.8l2.2 2.2 -2.2 2.2 -2.2 -2.2zM368.1 670.7l2.2 2.2 -2.2 2.2 -2.2 -2.2zM421.8 671.5h2.0v2.8h-2.0zM443.6 671.7h2.8v2.4h-2.8zM475.7 671.8h2.8v2.0h-2.8zM275.9 676.0l2.4 2.4 -2.4 2.4 -2.4 -2.4zM394.6 677.0h2.0v2.8h-2.0zM449.0 677.2h2.4v2.8h-2.4zM504.1 677.1h2.0v2.4h-2.0zM537.8 676.3l2.4 2.4 -2.4 2.4 -2.4 -2.4zM569.9 675.9l2.2 2.2 -2.2 2.2 -2.2 -2.2zM623.6 677.3h2.0v2.4h-2.0zM666.8 677.1h2.8v2.4h-2.8zM334.8 682.8h2.4v2.8h-2.4zM401.5 682.5l1.6 1.6 -1.6 1.6 -1.6 -1.6zM532.0 681.6l2.2 2.2 -2.2 2.2 -2.2 -2.2zM597.1 681.8l2.2 2.2 -2.2 2.2 -2.2 -2.2zM275.8 686.5l2.4 2.4 -2.4 2.4 -2.4 -2.4zM406.5 687.0l2.4 2.4 -2.4 2.4 -2.4 -2.4zM634.9 688.0h2.0v2.8h-2.0zM400.2 693.3h2.4v2.8h-2.4zM412.3 692.6l2.4 2.4 -2.4 2.4 -2.4 -2.4zM509.3 693.3h2.0v2.4h-2.0zM531.8 692.6l1.9 1.9 -1.9 1.9 -1.9 -1.9zM542.7 693.1l1.6 1.6 -1.6 1.6 -1.6 -1.6zM630.0 692.9l1.6 1.6 -1.6 1.6 -1.6 -1.6zM252.9 698.8h2.0v2.4h-2.0zM383.5 698.4h2.4v2.8h-2.4zM405.3 699.1h2.0v2.4h-2.0zM634.3 698.7h2.0v2.4h-2.0zM422.8 703.7l1.9 1.9 -1.9 1.9 -1.9 -1.9zM477.7 702.9l2.4 2.4 -2.4 2.4 -2.4 -2.4zM597.2 703.3l2.4 2.4 -2.4 2.4 -2.4 -2.4zM385.2 708.9l1.6 1.6 -1.6 1.6 -1.6 -1.6zM657.2 708.4l2.4 2.4 -2.4 2.4 -2.4 -2.4zM668.6 709.0l1.6 1.6 -1.6 1.6 -1.6 -1.6zM712.0 708.9l2.2 2.2 -2.2 2.2 -2.2 -2.2zM346.5 714.6l1.6 1.6 -1.6 1.6 -1.6 -1.6zM367.5 715.2h2.0v2.0h-2.0zM379.1 714.1l2.4 2.4 -2.4 2.4 -2.4 -2.4zM412.1 714.8l1.6 1.6 -1.6 1.6 -1.6 -1.6zM285.4 720.7h2.8v2.0h-2.8zM395.4 719.5l2.4 2.4 -2.4 2.4 -2.4 -2.4zM416.4 720.4h2.4v2.0h-2.4zM516.0 719.7l1.9 1.9 -1.9 1.9 -1.9 -1.9zM557.8 720.5h2.8v2.4h-2.8zM700.8 719.2l2.2 2.2 -2.2 2.2 -2.2 -2.2zM301.6 725.6h2.4v2.4h-2.4zM390.4 724.5l2.4 2.4 -2.4 2.4 -2.4 -2.4zM434.2 725.2l1.6 1.6 -1.6 1.6 -1.6 -1.6zM498.4 726.0h2.0v2.4h-2.0zM586.2 724.7l2.2 2.2 -2.2 2.2 -2.2 -2.2zM652.1 724.8l2.2 2.2 -2.2 2.2 -2.2 -2.2zM672.3 726.1h2.0v2.4h-2.0zM694.8 725.3h2.0v2.8h-2.0zM252.8 731.4h2.0v2.4h-2.0zM318.5 731.0h2.4v2.8h-2.4zM352.0 730.6l1.9 1.9 -1.9 1.9 -1.9 -1.9zM373.7 730.5l2.2 2.2 -2.2 2.2 -2.2 -2.2zM384.9 730.4l2.2 2.2 -2.2 2.2 -2.2 -2.2zM406.6 729.9l2.2 2.2 -2.2 2.2 -2.2 -2.2zM472.2 729.9l2.2 2.2 -2.2 2.2 -2.2 -2.2zM412.3 735.1l2.4 2.4 -2.4 2.4 -2.4 -2.4zM433.9 736.3l1.9 1.9 -1.9 1.9 -1.9 -1.9zM596.2 736.4h2.4v2.8h-2.4zM252.8 741.7h2.8v2.4h-2.8zM275.2 742.0h2.0v2.8h-2.0zM384.5 741.2l2.2 2.2 -2.2 2.2 -2.2 -2.2zM449.2 741.6h2.0v2.8h-2.0zM622.9 742.1h2.8v2.0h-2.8zM346.6 746.8l2.2 2.2 -2.2 2.2 -2.2 -2.2zM400.4 747.1h2.0v2.8h-2.0zM411.1 747.5h2.0v2.0h-2.0zM510.5 746.8l1.9 1.9 -1.9 1.9 -1.9 -1.9zM597.2 746.4l2.4 2.4 -2.4 2.4 -2.4 -2.4zM254.3 751.9l1.9 1.9 -1.9 1.9 -1.9 -1.9zM537.7 751.4l2.2 2.2 -2.2 2.2 -2.2 -2.2zM645.6 752.9h2.0v2.8h-2.0zM357.8 756.9l2.2 2.2 -2.2 2.2 -2.2 -2.2zM389.2 758.6h2.4v2.4h-2.4zM509.0 758.0h2.0v2.8h-2.0zM519.9 758.6h2.4v2.4h-2.4zM543.1 757.3l2.2 2.2 -2.2 2.2 -2.2 -2.2zM275.8 763.0l2.2 2.2 -2.2 2.2 -2.2 -2.2zM558.0 763.8h2.8v2.4h-2.8zM689.3 763.9h2.0v2.0h-2.0zM711.5 762.4l2.4 2.4 -2.4 2.4 -2.4 -2.4zM488.1 768.1l2.4 2.4 -2.4 2.4 -2.4 -2.4zM532.0 768.1l1.9 1.9 -1.9 1.9 -1.9 -1.9zM554.0 767.8l2.2 2.2 -2.2 2.2 -2.2 -2.2zM597.4 768.5l1.9 1.9 -1.9 1.9 -1.9 -1.9zM607.3 768.9h2.8v2.8h-2.8zM630.3 768.1l1.9 1.9 -1.9 1.9 -1.9 -1.9zM640.8 768.6l1.6 1.6 -1.6 1.6 -1.6 -1.6zM695.6 768.5l1.6 1.6 -1.6 1.6 -1.6 -1.6zM363.1 773.8l1.6 1.6 -1.6 1.6 -1.6 -1.6zM394.9 774.2h2.4v2.8h-2.4zM482.9 773.3l2.4 2.4 -2.4 2.4 -2.4 -2.4zM568.6 773.9h2.8v2.8h-2.8zM581.0 773.3l2.2 2.2 -2.2 2.2 -2.2 -2.2zM624.6 773.5l2.2 2.2 -2.2 2.2 -2.2 -2.2zM634.3 774.3h2.0v2.4h-2.0zM656.2 774.8h2.4v2.4h-2.4zM290.8 779.8h2.8v2.0h-2.8zM335.8 778.5l2.4 2.4 -2.4 2.4 -2.4 -2.4zM684.3 779.0l2.2 2.2 -2.2 2.2 -2.2 -2.2zM252.9 785.6h2.8v2.4h-2.8zM287.0 784.3l2.2 2.2 -2.2 2.2 -2.2 -2.2zM373.8 784.7l1.9 1.9 -1.9 1.9 -1.9 -1.9zM461.5 783.8l2.2 2.2 -2.2 2.2 -2.2 -2.2zM570.3 783.9l2.2 2.2 -2.2 2.2 -2.2 -2.2zM303.3 789.0l2.4 2.4 -2.4 2.4 -2.4 -2.4zM519.7 790.4h2.0v2.0h-2.0zM674.1 790.2l1.9 1.9 -1.9 1.9 -1.9 -1.9zM263.6 796.2h2.4v2.0h-2.4zM297.4 796.0l1.6 1.6 -1.6 1.6 -1.6 -1.6zM351.8 794.9l2.4 2.4 -2.4 2.4 -2.4 -2.4zM678.0 796.4h2.8v2.4h-2.8zM259.3 800.2l2.4 2.4 -2.4 2.4 -2.4 -2.4zM345.7 801.4h2.0v2.8h-2.0zM465.3 801.7h2.4v2.4h-2.4zM477.1 800.5l2.4 2.4 -2.4 2.4 -2.4 -2.4zM508.9 801.1h2.0v2.4h-2.0zM520.4 801.7h2.0v2.4h-2.0zM639.6 800.9h2.8v2.8h-2.8zM695.8 800.8l1.6 1.6 -1.6 1.6 -1.6 -1.6zM362.7 806.3l1.6 1.6 -1.6 1.6 -1.6 -1.6zM374.2 805.5l2.4 2.4 -2.4 2.4 -2.4 -2.4zM438.3 806.5h2.8v2.4h-2.8zM515.6 806.1l2.2 2.2 -2.2 2.2 -2.2 -2.2zM536.0 806.9h2.8v2.8h-2.8zM591.9 805.5l2.2 2.2 -2.2 2.2 -2.2 -2.2zM656.6 807.0h2.0v2.0h-2.0zM667.9 806.1l1.9 1.9 -1.9 1.9 -1.9 -1.9zM281.5 812.0l1.6 1.6 -1.6 1.6 -1.6 -1.6zM324.0 812.2h2.4v2.4h-2.4zM445.1 811.3l2.4 2.4 -2.4 2.4 -2.4 -2.4zM672.9 812.0h2.0v2.4h-2.0zM297.3 817.5l1.6 1.6 -1.6 1.6 -1.6 -1.6zM307.4 817.5h2.8v2.8h-2.8zM417.3 816.8l1.9 1.9 -1.9 1.9 -1.9 -1.9zM493.2 817.3h2.0v2.4h-2.0zM570.2 816.4l2.4 2.4 -2.4 2.4 -2.4 -2.4zM613.0 817.9h2.0v2.0h-2.0zM623.4 818.0h2.4v2.0h-2.4zM291.2 822.8h2.0v2.8h-2.0zM368.8 822.4l1.9 1.9 -1.9 1.9 -1.9 -1.9zM454.7 823.4h2.4v2.0h-2.4zM465.4 823.1h2.8v2.8h-2.8zM652.0 821.6l2.4 2.4 -2.4 2.4 -2.4 -2.4zM694.6 823.0h2.4v2.4h-2.4zM717.7 822.5l1.9 1.9 -1.9 1.9 -1.9 -1.9zM481.6 828.4h2.8v2.4h-2.8zM591.3 828.3h2.0v2.8h-2.0zM645.8 828.7h2.0v2.4h-2.0zM390.4 833.0l2.2 2.2 -2.2 2.2 -2.2 -2.2zM400.9 832.4l2.4 2.4 -2.4 2.4 -2.4 -2.4zM434.3 832.3l2.4 2.4 -2.4 2.4 -2.4 -2.4zM444.6 833.3l1.9 1.9 -1.9 1.9 -1.9 -1.9zM454.5 833.8h2.4v2.8h-2.4zM477.1 833.0l1.6 1.6 -1.6 1.6 -1.6 -1.6zM530.7 833.9h2.0v2.0h-2.0zM585.5 834.4h2.8v2.0h-2.8zM694.4 833.6h2.4v2.4h-2.4zM396.0 838.7l1.6 1.6 -1.6 1.6 -1.6 -1.6zM417.2 838.2l1.9 1.9 -1.9 1.9 -1.9 -1.9zM624.8 838.2l1.9 1.9 -1.9 1.9 -1.9 -1.9z" fill="#e4f2f4"/><path d="M356.0 553.5h2.8v2.0h-2.8zM639.3 553.3h2.8v2.0h-2.8zM286.9 557.7l2.2 2.2 -2.2 2.2 -2.2 -2.2zM450.2 557.0l2.2 2.2 -2.2 2.2 -2.2 -2.2zM657.7 557.2l2.2 2.2 -2.2 2.2 -2.2 -2.2zM499.3 562.6l2.2 2.2 -2.2 2.2 -2.2 -2.2zM275.0 569.1h2.0v2.4h-2.0zM330.6 568.6l1.9 1.9 -1.9 1.9 -1.9 -1.9zM492.4 569.0h2.8v2.8h-2.8zM548.6 567.8l2.2 2.2 -2.2 2.2 -2.2 -2.2zM325.0 573.6l2.4 2.4 -2.4 2.4 -2.4 -2.4zM411.9 573.9l2.2 2.2 -2.2 2.2 -2.2 -2.2zM565.0 573.9l2.2 2.2 -2.2 2.2 -2.2 -2.2zM471.8 579.8l1.6 1.6 -1.6 1.6 -1.6 -1.6zM689.0 579.7h2.4v2.8h-2.4zM699.8 580.1h2.0v2.0h-2.0zM280.3 585.3h2.4v2.0h-2.4zM345.7 585.7h2.4v2.4h-2.4zM542.2 585.2h2.0v2.4h-2.0zM258.1 596.1h2.8v2.0h-2.8zM335.8 595.3l2.2 2.2 -2.2 2.2 -2.2 -2.2zM411.8 595.7l1.6 1.6 -1.6 1.6 -1.6 -1.6zM444.8 595.4l2.4 2.4 -2.4 2.4 -2.4 -2.4zM585.1 596.2h2.8v2.8h-2.8zM596.6 596.3h2.0v2.0h-2.0zM252.8 601.7h2.8v2.0h-2.8zM318.0 601.7h2.8v2.4h-2.8zM450.4 600.4l2.2 2.2 -2.2 2.2 -2.2 -2.2zM515.7 600.5l2.2 2.2 -2.2 2.2 -2.2 -2.2zM548.0 601.0l1.9 1.9 -1.9 1.9 -1.9 -1.9zM613.1 601.7h2.0v2.8h-2.0zM499.2 606.9l1.6 1.6 -1.6 1.6 -1.6 -1.6zM340.9 610.8l2.4 2.4 -2.4 2.4 -2.4 -2.4zM351.9 611.5l2.4 2.4 -2.4 2.4 -2.4 -2.4zM515.6 611.0l2.4 2.4 -2.4 2.4 -2.4 -2.4zM701.0 611.4l2.2 2.2 -2.2 2.2 -2.2 -2.2zM324.6 616.3l2.4 2.4 -2.4 2.4 -2.4 -2.4zM422.8 616.8l1.9 1.9 -1.9 1.9 -1.9 -1.9zM530.2 617.7h2.8v2.0h-2.8zM416.5 622.8h2.8v2.8h-2.8zM581.0 622.5l1.6 1.6 -1.6 1.6 -1.6 -1.6zM390.1 628.0l1.9 1.9 -1.9 1.9 -1.9 -1.9zM411.8 627.4l2.2 2.2 -2.2 2.2 -2.2 -2.2zM432.6 628.3h2.4v2.4h-2.4zM264.6 633.4l1.9 1.9 -1.9 1.9 -1.9 -1.9zM406.3 633.8l1.6 1.6 -1.6 1.6 -1.6 -1.6zM434.1 639.0l1.9 1.9 -1.9 1.9 -1.9 -1.9zM296.1 644.9h2.4v2.4h-2.4zM346.8 650.2l1.6 1.6 -1.6 1.6 -1.6 -1.6zM379.2 649.0l2.4 2.4 -2.4 2.4 -2.4 -2.4zM412.1 649.4l2.4 2.4 -2.4 2.4 -2.4 -2.4zM640.1 650.0h2.4v2.8h-2.4zM493.2 655.9h2.0v2.0h-2.0zM515.4 655.0l1.9 1.9 -1.9 1.9 -1.9 -1.9zM557.9 655.5h2.0v2.4h-2.0zM705.1 660.5h2.0v2.8h-2.0zM515.4 665.7l1.9 1.9 -1.9 1.9 -1.9 -1.9zM646.1 665.7l1.9 1.9 -1.9 1.9 -1.9 -1.9zM379.5 671.0l2.2 2.2 -2.2 2.2 -2.2 -2.2zM521.3 671.5l1.6 1.6 -1.6 1.6 -1.6 -1.6zM597.6 671.2l2.2 2.2 -2.2 2.2 -2.2 -2.2zM388.7 682.7h2.8v2.8h-2.8zM423.4 682.1l1.9 1.9 -1.9 1.9 -1.9 -1.9zM499.2 681.8l1.9 1.9 -1.9 1.9 -1.9 -1.9zM586.8 682.0l1.9 1.9 -1.9 1.9 -1.9 -1.9zM340.3 687.9h2.0v2.4h-2.0zM492.9 688.1h2.4v2.4h-2.4zM292.1 692.0l2.2 2.2 -2.2 2.2 -2.2 -2.2zM477.8 692.0l2.2 2.2 -2.2 2.2 -2.2 -2.2zM651.8 692.0l2.2 2.2 -2.2 2.2 -2.2 -2.2zM330.5 697.4l2.4 2.4 -2.4 2.4 -2.4 -2.4zM492.4 699.2h2.8v2.0h-2.8zM568.7 698.5h2.8v2.4h-2.8zM488.3 703.7l1.9 1.9 -1.9 1.9 -1.9 -1.9zM510.5 703.4l1.9 1.9 -1.9 1.9 -1.9 -1.9zM259.5 713.7l2.2 2.2 -2.2 2.2 -2.2 -2.2zM477.3 714.7l1.6 1.6 -1.6 1.6 -1.6 -1.6zM487.3 715.3h2.8v2.4h-2.8zM263.5 720.6h2.8v2.8h-2.8zM568.9 720.4h2.0v2.0h-2.0zM488.7 724.7l2.2 2.2 -2.2 2.2 -2.2 -2.2zM417.4 730.9l1.9 1.9 -1.9 1.9 -1.9 -1.9zM623.4 731.0h2.0v2.8h-2.0zM699.9 731.0h2.4v2.8h-2.4zM303.3 736.3l1.9 1.9 -1.9 1.9 -1.9 -1.9zM345.9 736.4h2.4v2.8h-2.4zM466.4 736.3l1.6 1.6 -1.6 1.6 -1.6 -1.6zM576.0 735.6l1.9 1.9 -1.9 1.9 -1.9 -1.9zM629.0 737.0h2.0v2.0h-2.0zM705.3 736.1h2.0v2.8h-2.0zM318.0 741.9h2.4v2.0h-2.4zM313.8 746.3l2.4 2.4 -2.4 2.4 -2.4 -2.4zM357.4 746.9l1.9 1.9 -1.9 1.9 -1.9 -1.9zM368.7 758.0l1.6 1.6 -1.6 1.6 -1.6 -1.6zM399.9 769.6h2.0v2.0h-2.0zM384.6 773.7l2.2 2.2 -2.2 2.2 -2.2 -2.2zM439.6 773.8l1.6 1.6 -1.6 1.6 -1.6 -1.6zM461.5 773.1l2.4 2.4 -2.4 2.4 -2.4 -2.4zM525.0 774.7h2.4v2.4h-2.4zM536.1 774.3h2.8v2.8h-2.8zM547.1 774.6h2.4v2.4h-2.4zM646.4 773.2l2.4 2.4 -2.4 2.4 -2.4 -2.4zM368.4 779.1l1.9 1.9 -1.9 1.9 -1.9 -1.9zM400.2 779.6h2.0v2.0h-2.0zM439.7 784.2l1.9 1.9 -1.9 1.9 -1.9 -1.9zM466.5 790.0l1.6 1.6 -1.6 1.6 -1.6 -1.6zM374.1 794.9l2.2 2.2 -2.2 2.2 -2.2 -2.2zM503.5 796.3h2.8v2.0h-2.8zM623.1 795.8h2.8v2.8h-2.8zM531.7 800.3l2.2 2.2 -2.2 2.2 -2.2 -2.2zM552.3 801.3h2.4v2.4h-2.4zM574.0 801.1h2.8v2.4h-2.8zM717.7 800.0l2.4 2.4 -2.4 2.4 -2.4 -2.4zM330.3 805.4l2.2 2.2 -2.2 2.2 -2.2 -2.2zM504.8 806.1l1.9 1.9 -1.9 1.9 -1.9 -1.9zM682.8 812.7h2.8v2.0h-2.8zM644.8 817.5h2.8v2.4h-2.8zM679.0 817.4l1.6 1.6 -1.6 1.6 -1.6 -1.6zM270.8 822.3l2.2 2.2 -2.2 2.2 -2.2 -2.2zM318.5 828.1h2.0v2.4h-2.0zM291.2 833.6h2.4v2.0h-2.4zM542.1 834.1h2.0v2.4h-2.0zM552.8 833.8h2.4v2.4h-2.4zM683.2 833.6h2.8v2.4h-2.8zM450.1 838.1l2.2 2.2 -2.2 2.2 -2.2 -2.2zM613.5 837.9l2.4 2.4 -2.4 2.4 -2.4 -2.4z" fill="#f6fbfb"/><path d="M258.3 553.1h2.4v2.4h-2.4zM389.5 552.8h2.0v2.0h-2.0zM510.2 552.4l1.6 1.6 -1.6 1.6 -1.6 -1.6zM575.7 552.6l1.9 1.9 -1.9 1.9 -1.9 -1.9zM428.5 557.6l2.2 2.2 -2.2 2.2 -2.2 -2.2zM580.8 557.6l2.2 2.2 -2.2 2.2 -2.2 -2.2zM302.3 563.9h2.0v2.8h-2.0zM410.9 564.2h2.8v2.0h-2.8zM434.0 562.7l1.9 1.9 -1.9 1.9 -1.9 -1.9zM488.4 562.9l2.2 2.2 -2.2 2.2 -2.2 -2.2zM530.3 564.1h2.8v2.4h-2.8zM542.5 562.8l1.9 1.9 -1.9 1.9 -1.9 -1.9zM416.4 569.4h2.8v2.4h-2.8zM503.9 569.7h2.4v2.0h-2.4zM525.4 568.7h2.8v2.8h-2.8zM569.2 569.1h2.4v2.0h-2.4zM422.0 574.4h2.0v2.8h-2.0zM519.9 574.6h2.8v2.8h-2.8zM640.9 574.0l1.9 1.9 -1.9 1.9 -1.9 -1.9zM526.4 579.2l1.9 1.9 -1.9 1.9 -1.9 -1.9zM336.1 584.8l1.6 1.6 -1.6 1.6 -1.6 -1.6zM488.2 584.0l2.4 2.4 -2.4 2.4 -2.4 -2.4zM650.7 585.1h2.8v2.4h-2.8zM684.6 584.9l1.6 1.6 -1.6 1.6 -1.6 -1.6zM253.9 590.2l2.2 2.2 -2.2 2.2 -2.2 -2.2zM341.5 589.7l2.2 2.2 -2.2 2.2 -2.2 -2.2zM427.5 590.4h2.0v2.4h-2.0zM472.0 590.1l1.9 1.9 -1.9 1.9 -1.9 -1.9zM514.3 590.5h2.0v2.4h-2.0zM601.8 590.5h2.8v2.4h-2.8zM690.4 590.3l1.6 1.6 -1.6 1.6 -1.6 -1.6zM270.5 594.8l2.4 2.4 -2.4 2.4 -2.4 -2.4zM476.0 596.0h2.8v2.0h-2.8zM716.2 596.8h2.8v2.0h-2.8zM286.7 600.6l2.4 2.4 -2.4 2.4 -2.4 -2.4zM296.8 601.1h2.0v2.8h-2.0zM373.7 601.0l1.9 1.9 -1.9 1.9 -1.9 -1.9zM688.7 601.5h2.0v2.4h-2.0zM486.7 606.4h2.8v2.8h-2.8zM586.1 605.7l2.4 2.4 -2.4 2.4 -2.4 -2.4zM608.1 606.9l1.6 1.6 -1.6 1.6 -1.6 -1.6zM652.0 606.5l1.9 1.9 -1.9 1.9 -1.9 -1.9zM372.9 612.0h2.8v2.8h-2.8zM417.3 611.0l2.4 2.4 -2.4 2.4 -2.4 -2.4zM668.2 612.0l1.6 1.6 -1.6 1.6 -1.6 -1.6zM455.7 616.8l2.2 2.2 -2.2 2.2 -2.2 -2.2zM499.6 617.5l1.9 1.9 -1.9 1.9 -1.9 -1.9zM541.9 618.2h2.0v2.4h-2.0zM552.5 617.7h2.8v2.0h-2.8zM438.0 623.1h2.0v2.8h-2.0zM515.4 622.2l2.4 2.4 -2.4 2.4 -2.4 -2.4zM668.6 622.1l2.4 2.4 -2.4 2.4 -2.4 -2.4zM334.6 628.7h2.0v2.8h-2.0zM367.1 628.5h2.8v2.0h-2.8zM499.1 628.2l1.6 1.6 -1.6 1.6 -1.6 -1.6zM608.0 627.7l2.4 2.4 -2.4 2.4 -2.4 -2.4zM362.7 632.6l2.4 2.4 -2.4 2.4 -2.4 -2.4zM548.1 633.5l1.6 1.6 -1.6 1.6 -1.6 -1.6zM710.2 634.6h2.8v2.0h-2.8zM400.3 639.5h2.4v2.4h-2.4zM532.3 639.1l1.6 1.6 -1.6 1.6 -1.6 -1.6zM619.3 638.7l2.2 2.2 -2.2 2.2 -2.2 -2.2zM694.6 639.2h2.4v2.4h-2.4zM705.4 639.2h2.0v2.8h-2.0zM363.0 644.1l2.2 2.2 -2.2 2.2 -2.2 -2.2zM428.5 644.5l1.6 1.6 -1.6 1.6 -1.6 -1.6zM493.6 643.2l2.4 2.4 -2.4 2.4 -2.4 -2.4zM389.2 650.2h2.4v2.4h-2.4zM477.6 649.8l1.9 1.9 -1.9 1.9 -1.9 -1.9zM499.1 649.5l1.9 1.9 -1.9 1.9 -1.9 -1.9zM308.9 654.2l2.2 2.2 -2.2 2.2 -2.2 -2.2zM405.3 655.6h2.8v2.8h-2.8zM416.2 656.1h2.8v2.0h-2.8zM699.8 655.5h2.0v2.0h-2.0zM377.9 661.2h2.4v2.0h-2.4zM597.4 660.6l1.6 1.6 -1.6 1.6 -1.6 -1.6zM319.1 665.7l1.9 1.9 -1.9 1.9 -1.9 -1.9zM340.0 665.9h2.4v2.8h-2.4zM362.8 665.3l2.4 2.4 -2.4 2.4 -2.4 -2.4zM548.4 665.3l2.4 2.4 -2.4 2.4 -2.4 -2.4zM280.9 671.4l1.9 1.9 -1.9 1.9 -1.9 -1.9zM695.2 671.3l1.6 1.6 -1.6 1.6 -1.6 -1.6zM318.5 677.3h2.4v2.8h-2.4zM454.4 682.7h2.8v2.8h-2.8zM716.5 682.4h2.0v2.4h-2.0zM497.7 693.3h2.4v2.8h-2.4zM563.3 693.5h2.4v2.4h-2.4zM640.6 692.8l1.9 1.9 -1.9 1.9 -1.9 -1.9zM682.8 693.9h2.8v2.0h-2.8zM308.3 697.6l2.2 2.2 -2.2 2.2 -2.2 -2.2zM373.6 697.7l1.9 1.9 -1.9 1.9 -1.9 -1.9zM546.7 698.4h2.8v2.4h-2.8zM581.1 697.8l1.9 1.9 -1.9 1.9 -1.9 -1.9zM679.0 697.4l2.4 2.4 -2.4 2.4 -2.4 -2.4zM269.1 704.5h2.4v2.0h-2.4zM372.8 709.4h2.0v2.8h-2.0zM516.0 708.8l1.9 1.9 -1.9 1.9 -1.9 -1.9zM547.2 709.8h2.8v2.8h-2.8zM434.3 713.5l2.4 2.4 -2.4 2.4 -2.4 -2.4zM530.5 715.0h2.8v2.0h-2.8zM412.2 725.1l1.6 1.6 -1.6 1.6 -1.6 -1.6zM641.1 724.8l1.9 1.9 -1.9 1.9 -1.9 -1.9zM363.3 729.9l2.2 2.2 -2.2 2.2 -2.2 -2.2zM536.4 731.2h2.4v2.8h-2.4zM657.5 730.1l2.2 2.2 -2.2 2.2 -2.2 -2.2zM335.8 735.8l2.4 2.4 -2.4 2.4 -2.4 -2.4zM477.2 735.8l2.2 2.2 -2.2 2.2 -2.2 -2.2zM519.9 737.0h2.8v2.4h-2.8zM585.5 736.2h2.4v2.8h-2.4zM363.2 740.7l2.2 2.2 -2.2 2.2 -2.2 -2.2zM417.3 741.7l1.6 1.6 -1.6 1.6 -1.6 -1.6zM613.5 741.1l2.2 2.2 -2.2 2.2 -2.2 -2.2zM667.2 742.0h2.4v2.0h-2.4zM679.1 740.6l2.4 2.4 -2.4 2.4 -2.4 -2.4zM531.8 746.6l1.9 1.9 -1.9 1.9 -1.9 -1.9zM543.1 746.0l2.4 2.4 -2.4 2.4 -2.4 -2.4zM552.4 747.0h2.8v2.4h-2.8zM683.3 747.3h2.0v2.8h-2.0zM297.5 752.3l1.9 1.9 -1.9 1.9 -1.9 -1.9zM525.5 752.4h2.0v2.8h-2.0zM401.5 757.2l1.9 1.9 -1.9 1.9 -1.9 -1.9zM553.0 758.3h2.4v2.4h-2.4zM672.7 758.5h2.0v2.4h-2.0zM717.5 757.1l2.4 2.4 -2.4 2.4 -2.4 -2.4zM264.1 764.0h2.0v2.0h-2.0zM385.0 762.3l2.4 2.4 -2.4 2.4 -2.4 -2.4zM547.6 763.5h2.0v2.8h-2.0zM623.7 763.4h2.0v2.4h-2.0zM667.4 763.6h2.4v2.0h-2.4zM346.6 768.2l1.9 1.9 -1.9 1.9 -1.9 -1.9zM390.5 767.6l2.4 2.4 -2.4 2.4 -2.4 -2.4zM373.3 774.5h2.0v2.8h-2.0zM406.3 773.3l1.9 1.9 -1.9 1.9 -1.9 -1.9zM313.0 780.2h2.8v2.4h-2.8zM390.6 779.2l1.6 1.6 -1.6 1.6 -1.6 -1.6zM276.0 784.4l2.2 2.2 -2.2 2.2 -2.2 -2.2zM547.0 784.7h2.0v2.8h-2.0zM559.5 784.3l1.9 1.9 -1.9 1.9 -1.9 -1.9zM400.9 790.3l1.6 1.6 -1.6 1.6 -1.6 -1.6zM411.8 790.2l1.9 1.9 -1.9 1.9 -1.9 -1.9zM454.6 790.2h2.0v2.8h-2.0zM629.0 790.6h2.8v2.0h-2.8zM285.0 795.8h2.8v2.8h-2.8zM307.3 796.1h2.8v2.0h-2.8zM363.4 795.0l1.9 1.9 -1.9 1.9 -1.9 -1.9zM688.5 795.5h2.8v2.8h-2.8zM700.6 795.3l1.6 1.6 -1.6 1.6 -1.6 -1.6zM356.5 801.7h2.4v2.0h-2.4zM389.3 801.4h2.0v2.8h-2.0zM341.2 805.3l2.4 2.4 -2.4 2.4 -2.4 -2.4zM460.9 805.4l2.4 2.4 -2.4 2.4 -2.4 -2.4zM624.6 806.5l1.6 1.6 -1.6 1.6 -1.6 -1.6zM302.2 812.3h2.4v2.8h-2.4zM356.6 812.0h2.0v2.8h-2.0zM423.2 811.6l1.9 1.9 -1.9 1.9 -1.9 -1.9zM617.8 812.3h2.4v2.4h-2.4zM263.4 817.2h2.4v2.8h-2.4zM276.0 816.1l2.4 2.4 -2.4 2.4 -2.4 -2.4zM319.1 816.7l1.9 1.9 -1.9 1.9 -1.9 -1.9zM472.2 816.7l1.9 1.9 -1.9 1.9 -1.9 -1.9zM514.5 817.3h2.8v2.4h-2.8zM401.1 821.9l2.4 2.4 -2.4 2.4 -2.4 -2.4zM607.4 822.4h2.4v2.8h-2.4zM263.6 828.2h2.8v2.4h-2.8zM373.6 827.8l2.2 2.2 -2.2 2.2 -2.2 -2.2zM558.2 828.0h2.4v2.4h-2.4zM280.6 833.5h2.0v2.4h-2.0zM379.1 833.7l1.6 1.6 -1.6 1.6 -1.6 -1.6zM422.9 832.9l2.2 2.2 -2.2 2.2 -2.2 -2.2zM308.9 837.8l2.4 2.4 -2.4 2.4 -2.4 -2.4zM329.0 839.3h2.8v2.4h-2.8zM363.4 838.2l2.2 2.2 -2.2 2.2 -2.2 -2.2zM526.2 838.0l2.2 2.2 -2.2 2.2 -2.2 -2.2z" fill="#8a5cb0"/><path d="M303.4 552.4l1.9 1.9 -1.9 1.9 -1.9 -1.9zM323.5 553.2h2.4v2.8h-2.4zM401.2 552.1l1.9 1.9 -1.9 1.9 -1.9 -1.9zM586.9 551.6l2.2 2.2 -2.2 2.2 -2.2 -2.2zM662.8 552.6l1.6 1.6 -1.6 1.6 -1.6 -1.6zM683.7 552.9h2.4v2.4h-2.4zM340.2 558.4h2.4v2.0h-2.4zM352.4 558.0l1.6 1.6 -1.6 1.6 -1.6 -1.6zM373.2 558.6h2.0v2.4h-2.0zM481.8 558.6h2.4v2.4h-2.4zM525.6 558.4h2.0v2.4h-2.0zM559.1 557.2l2.4 2.4 -2.4 2.4 -2.4 -2.4zM633.9 558.0h2.8v2.8h-2.8zM645.8 558.7h2.0v2.0h-2.0zM689.2 558.6h2.0v2.4h-2.0zM368.7 562.5l2.4 2.4 -2.4 2.4 -2.4 -2.4zM465.9 563.5h2.0v2.4h-2.0zM477.5 562.7l2.4 2.4 -2.4 2.4 -2.4 -2.4zM673.9 563.4l1.6 1.6 -1.6 1.6 -1.6 -1.6zM394.4 569.6h2.4v2.4h-2.4zM461.1 569.0l1.6 1.6 -1.6 1.6 -1.6 -1.6zM591.6 568.8l1.9 1.9 -1.9 1.9 -1.9 -1.9zM624.9 568.7l1.6 1.6 -1.6 1.6 -1.6 -1.6zM646.3 568.1l2.2 2.2 -2.2 2.2 -2.2 -2.2zM655.6 568.7h2.8v2.8h-2.8zM357.8 573.9l2.2 2.2 -2.2 2.2 -2.2 -2.2zM379.8 573.9l1.9 1.9 -1.9 1.9 -1.9 -1.9zM434.0 573.3l2.2 2.2 -2.2 2.2 -2.2 -2.2zM498.9 573.8l2.2 2.2 -2.2 2.2 -2.2 -2.2zM530.9 574.3h2.8v2.4h-2.8zM586.5 574.0l1.9 1.9 -1.9 1.9 -1.9 -1.9zM608.4 573.7l2.4 2.4 -2.4 2.4 -2.4 -2.4zM684.6 573.7l1.9 1.9 -1.9 1.9 -1.9 -1.9zM274.6 579.5h2.0v2.8h-2.0zM297.7 578.9l2.2 2.2 -2.2 2.2 -2.2 -2.2zM308.3 579.1l1.9 1.9 -1.9 1.9 -1.9 -1.9zM319.8 578.9l1.9 1.9 -1.9 1.9 -1.9 -1.9zM329.5 580.2h2.4v2.0h-2.4zM394.5 579.6h2.0v2.4h-2.0zM406.8 579.1l2.4 2.4 -2.4 2.4 -2.4 -2.4zM448.8 580.0h2.8v2.0h-2.8zM459.4 579.9h2.8v2.4h-2.8zM504.1 580.0h2.0v2.8h-2.0zM612.1 579.5h2.8v2.8h-2.8zM668.1 579.2l1.9 1.9 -1.9 1.9 -1.9 -1.9zM679.0 579.0l2.2 2.2 -2.2 2.2 -2.2 -2.2zM292.0 584.6l2.2 2.2 -2.2 2.2 -2.2 -2.2zM325.1 584.0l2.2 2.2 -2.2 2.2 -2.2 -2.2zM400.8 583.9l2.4 2.4 -2.4 2.4 -2.4 -2.4zM412.1 584.0l2.2 2.2 -2.2 2.2 -2.2 -2.2zM553.9 583.9l2.4 2.4 -2.4 2.4 -2.4 -2.4zM570.4 589.8l2.4 2.4 -2.4 2.4 -2.4 -2.4zM579.8 590.7h2.0v2.4h-2.0zM368.5 595.6l1.9 1.9 -1.9 1.9 -1.9 -1.9zM377.7 596.4h2.8v2.4h-2.8zM422.4 596.3h2.0v2.4h-2.0zM499.3 596.1l1.6 1.6 -1.6 1.6 -1.6 -1.6zM509.1 595.9h2.0v2.4h-2.0zM673.7 596.1l1.6 1.6 -1.6 1.6 -1.6 -1.6zM329.5 601.5h2.0v2.4h-2.0zM394.3 602.0h2.4v2.4h-2.4zM461.0 601.0l1.6 1.6 -1.6 1.6 -1.6 -1.6zM601.2 601.6h2.8v2.0h-2.8zM645.1 602.1h2.0v2.0h-2.0zM292.2 605.9l1.9 1.9 -1.9 1.9 -1.9 -1.9zM302.8 605.7l2.2 2.2 -2.2 2.2 -2.2 -2.2zM412.3 605.8l2.4 2.4 -2.4 2.4 -2.4 -2.4zM454.1 606.7h2.4v2.4h-2.4zM465.3 606.4h2.4v2.8h-2.4zM509.2 606.5h2.4v2.8h-2.4zM575.7 605.9l2.4 2.4 -2.4 2.4 -2.4 -2.4zM285.6 612.4h2.0v2.8h-2.0zM319.1 612.2l1.6 1.6 -1.6 1.6 -1.6 -1.6zM383.2 612.8h2.8v2.0h-2.8zM580.9 611.1l2.4 2.4 -2.4 2.4 -2.4 -2.4zM711.6 611.0l2.4 2.4 -2.4 2.4 -2.4 -2.4zM355.9 617.9h2.8v2.8h-2.8zM367.1 617.7h2.0v2.4h-2.0zM465.2 617.6h2.0v2.4h-2.0zM520.7 616.6l2.2 2.2 -2.2 2.2 -2.2 -2.2zM563.1 617.8h2.8v2.4h-2.8zM575.2 617.6l1.6 1.6 -1.6 1.6 -1.6 -1.6zM597.2 617.4l1.9 1.9 -1.9 1.9 -1.9 -1.9zM706.3 617.5l1.6 1.6 -1.6 1.6 -1.6 -1.6zM717.1 616.7l1.9 1.9 -1.9 1.9 -1.9 -1.9zM493.5 623.0l1.6 1.6 -1.6 1.6 -1.6 -1.6zM313.8 627.5l2.4 2.4 -2.4 2.4 -2.4 -2.4zM346.5 627.6l2.2 2.2 -2.2 2.2 -2.2 -2.2zM421.9 628.7h2.4v2.8h-2.4zM466.5 628.2l1.6 1.6 -1.6 1.6 -1.6 -1.6zM488.4 627.2l2.2 2.2 -2.2 2.2 -2.2 -2.2zM510.2 627.2l2.4 2.4 -2.4 2.4 -2.4 -2.4zM597.1 627.5l2.2 2.2 -2.2 2.2 -2.2 -2.2zM639.6 628.4h2.8v2.8h-2.8zM297.3 633.0l2.2 2.2 -2.2 2.2 -2.2 -2.2zM352.5 633.2l2.2 2.2 -2.2 2.2 -2.2 -2.2zM448.6 633.6h2.8v2.8h-2.8zM559.3 633.7l1.9 1.9 -1.9 1.9 -1.9 -1.9zM303.5 639.3l1.6 1.6 -1.6 1.6 -1.6 -1.6zM379.3 639.4l1.6 1.6 -1.6 1.6 -1.6 -1.6zM455.7 638.2l2.2 2.2 -2.2 2.2 -2.2 -2.2zM554.1 638.6l2.2 2.2 -2.2 2.2 -2.2 -2.2zM608.1 638.2l2.2 2.2 -2.2 2.2 -2.2 -2.2zM254.1 644.3l1.6 1.6 -1.6 1.6 -1.6 -1.6zM329.7 644.7h2.0v2.8h-2.0zM450.6 643.9l2.2 2.2 -2.2 2.2 -2.2 -2.2zM505.1 644.3l1.9 1.9 -1.9 1.9 -1.9 -1.9zM624.7 644.2l1.6 1.6 -1.6 1.6 -1.6 -1.6zM645.2 645.1h2.8v2.0h-2.8zM679.0 643.8l1.9 1.9 -1.9 1.9 -1.9 -1.9zM712.2 644.1l1.9 1.9 -1.9 1.9 -1.9 -1.9zM292.1 650.2l1.6 1.6 -1.6 1.6 -1.6 -1.6zM302.9 648.8l2.2 2.2 -2.2 2.2 -2.2 -2.2zM673.6 649.3l2.2 2.2 -2.2 2.2 -2.2 -2.2zM276.1 654.4l2.4 2.4 -2.4 2.4 -2.4 -2.4zM352.4 655.3l1.6 1.6 -1.6 1.6 -1.6 -1.6zM362.3 655.6h2.0v2.0h-2.0zM384.2 655.6h2.0v2.8h-2.0zM568.5 655.9h2.8v2.0h-2.8zM602.0 655.8h2.0v2.4h-2.0zM656.0 655.8h2.4v2.4h-2.4zM303.3 660.8l1.6 1.6 -1.6 1.6 -1.6 -1.6zM357.9 659.7l2.4 2.4 -2.4 2.4 -2.4 -2.4zM390.3 660.3l2.2 2.2 -2.2 2.2 -2.2 -2.2zM454.2 661.1h2.4v2.4h-2.4zM510.2 660.2l2.4 2.4 -2.4 2.4 -2.4 -2.4zM521.2 660.4l2.2 2.2 -2.2 2.2 -2.2 -2.2zM618.1 661.0h2.4v2.0h-2.4zM252.7 666.1h2.8v2.4h-2.8zM372.9 666.3h2.4v2.8h-2.4zM406.6 665.7l1.9 1.9 -1.9 1.9 -1.9 -1.9zM450.6 665.2l2.4 2.4 -2.4 2.4 -2.4 -2.4zM559.1 665.5l2.4 2.4 -2.4 2.4 -2.4 -2.4zM568.8 666.5h2.0v2.0h-2.0zM303.5 671.3l1.6 1.6 -1.6 1.6 -1.6 -1.6zM323.9 671.8h2.4v2.4h-2.4zM345.3 672.1h2.8v2.0h-2.8zM401.5 671.4l1.9 1.9 -1.9 1.9 -1.9 -1.9zM308.6 675.9l2.2 2.2 -2.2 2.2 -2.2 -2.2zM417.8 676.8l1.6 1.6 -1.6 1.6 -1.6 -1.6zM460.2 676.9h2.0v2.8h-2.0zM481.2 677.4h2.8v2.0h-2.8zM547.1 677.3h2.8v2.8h-2.8zM646.7 676.4l1.6 1.6 -1.6 1.6 -1.6 -1.6zM690.3 676.1l2.4 2.4 -2.4 2.4 -2.4 -2.4zM269.0 682.7h2.0v2.4h-2.0zM303.0 681.3l2.4 2.4 -2.4 2.4 -2.4 -2.4zM324.5 682.2l1.6 1.6 -1.6 1.6 -1.6 -1.6zM367.5 682.5h2.0v2.4h-2.0zM378.4 682.6h2.8v2.4h-2.8zM433.0 682.9h2.4v2.4h-2.4zM487.4 682.8h2.0v2.4h-2.0zM552.5 682.6h2.0v2.4h-2.0zM575.4 681.7l2.2 2.2 -2.2 2.2 -2.2 -2.2zM362.0 687.9h2.4v2.8h-2.4zM374.1 687.4l1.6 1.6 -1.6 1.6 -1.6 -1.6zM416.4 687.9h2.8v2.4h-2.8zM461.2 686.4l2.4 2.4 -2.4 2.4 -2.4 -2.4zM557.8 688.0h2.8v2.8h-2.8zM614.1 687.0l2.4 2.4 -2.4 2.4 -2.4 -2.4zM624.3 688.0l1.6 1.6 -1.6 1.6 -1.6 -1.6zM701.2 687.4l1.9 1.9 -1.9 1.9 -1.9 -1.9zM377.9 693.4h2.4v2.4h-2.4zM455.3 692.3l2.2 2.2 -2.2 2.2 -2.2 -2.2zM608.5 692.5l1.9 1.9 -1.9 1.9 -1.9 -1.9zM617.5 693.1h2.8v2.8h-2.8zM394.9 698.9h2.0v2.0h-2.0zM417.2 698.2l2.2 2.2 -2.2 2.2 -2.2 -2.2zM439.0 698.5l1.6 1.6 -1.6 1.6 -1.6 -1.6zM504.6 698.5l1.9 1.9 -1.9 1.9 -1.9 -1.9zM655.9 699.0h2.4v2.4h-2.4zM368.1 703.1l2.2 2.2 -2.2 2.2 -2.2 -2.2zM377.7 703.9h2.8v2.4h-2.8zM530.8 704.1h2.0v2.0h-2.0zM586.7 702.9l2.2 2.2 -2.2 2.2 -2.2 -2.2zM607.0 704.3h2.8v2.0h-2.8zM706.1 703.2l2.4 2.4 -2.4 2.4 -2.4 -2.4zM274.7 709.4h2.8v2.4h-2.8zM318.3 709.9h2.4v2.4h-2.4zM437.6 709.4h2.8v2.8h-2.8zM504.7 708.5l1.9 1.9 -1.9 1.9 -1.9 -1.9zM580.0 709.9h2.0v2.0h-2.0zM624.8 708.9l2.2 2.2 -2.2 2.2 -2.2 -2.2zM314.0 714.3l2.2 2.2 -2.2 2.2 -2.2 -2.2zM400.2 715.1h2.4v2.8h-2.4zM584.9 714.8h2.8v2.4h-2.8zM639.8 715.0h2.8v2.4h-2.8zM706.7 714.2l2.4 2.4 -2.4 2.4 -2.4 -2.4zM297.5 720.4l1.6 1.6 -1.6 1.6 -1.6 -1.6zM634.0 720.8h2.8v2.0h-2.8zM667.1 720.5h2.4v2.0h-2.4zM280.2 726.1h2.0v2.0h-2.0zM314.0 724.9l2.4 2.4 -2.4 2.4 -2.4 -2.4zM510.1 725.5l1.6 1.6 -1.6 1.6 -1.6 -1.6zM286.5 730.6l1.6 1.6 -1.6 1.6 -1.6 -1.6zM307.7 731.8h2.4v2.0h-2.4zM340.1 731.5h2.0v2.4h-2.0zM492.8 730.9h2.4v2.8h-2.4zM581.2 730.5l1.9 1.9 -1.9 1.9 -1.9 -1.9zM592.0 730.9l1.6 1.6 -1.6 1.6 -1.6 -1.6zM613.9 729.7l2.4 2.4 -2.4 2.4 -2.4 -2.4zM324.8 735.9l2.2 2.2 -2.2 2.2 -2.2 -2.2zM421.6 736.4h2.8v2.8h-2.8zM287.1 740.8l2.4 2.4 -2.4 2.4 -2.4 -2.4zM330.2 741.2l2.2 2.2 -2.2 2.2 -2.2 -2.2zM341.2 741.7l1.6 1.6 -1.6 1.6 -1.6 -1.6zM405.6 741.9h2.0v2.0h-2.0zM461.3 741.3l1.9 1.9 -1.9 1.9 -1.9 -1.9zM471.8 741.2l1.9 1.9 -1.9 1.9 -1.9 -1.9zM590.8 742.2h2.0v2.0h-2.0zM281.5 746.5l2.4 2.4 -2.4 2.4 -2.4 -2.4zM366.7 747.5h2.8v2.4h-2.8zM390.6 746.7l1.6 1.6 -1.6 1.6 -1.6 -1.6zM443.6 747.1h2.4v2.8h-2.4zM608.1 746.7l1.6 1.6 -1.6 1.6 -1.6 -1.6zM276.1 751.8l2.4 2.4 -2.4 2.4 -2.4 -2.4zM341.4 752.6l1.6 1.6 -1.6 1.6 -1.6 -1.6zM374.1 751.9l1.9 1.9 -1.9 1.9 -1.9 -1.9zM427.0 752.8h2.8v2.8h-2.8zM547.3 752.8h2.0v2.0h-2.0zM624.9 751.6l2.2 2.2 -2.2 2.2 -2.2 -2.2zM667.1 752.7h2.8v2.8h-2.8zM270.1 757.4l2.2 2.2 -2.2 2.2 -2.2 -2.2zM281.1 757.4l1.9 1.9 -1.9 1.9 -1.9 -1.9zM335.7 756.7l2.4 2.4 -2.4 2.4 -2.4 -2.4zM476.4 758.2h2.0v2.4h-2.0zM532.2 757.3l2.4 2.4 -2.4 2.4 -2.4 -2.4zM596.1 758.5h2.4v2.0h-2.4zM652.2 756.6l2.4 2.4 -2.4 2.4 -2.4 -2.4zM395.7 763.2l1.6 1.6 -1.6 1.6 -1.6 -1.6zM448.6 763.7h2.8v2.8h-2.8zM590.3 763.5h2.8v2.8h-2.8zM657.5 762.7l2.4 2.4 -2.4 2.4 -2.4 -2.4zM677.7 763.8h2.4v2.4h-2.4zM699.6 763.8h2.0v2.4h-2.0zM281.0 768.1l2.2 2.2 -2.2 2.2 -2.2 -2.2zM323.6 769.2h2.4v2.4h-2.4zM476.3 769.0h2.0v2.4h-2.0zM510.4 768.7l1.6 1.6 -1.6 1.6 -1.6 -1.6zM521.3 768.3l2.2 2.2 -2.2 2.2 -2.2 -2.2zM275.1 773.8h2.0v2.8h-2.0zM341.0 773.7l1.6 1.6 -1.6 1.6 -1.6 -1.6zM590.8 774.6h2.0v2.0h-2.0zM690.4 773.3l2.2 2.2 -2.2 2.2 -2.2 -2.2zM259.4 778.6l2.2 2.2 -2.2 2.2 -2.2 -2.2zM379.1 779.3l1.9 1.9 -1.9 1.9 -1.9 -1.9zM596.1 780.0h2.4v2.0h-2.4zM619.0 778.4l2.4 2.4 -2.4 2.4 -2.4 -2.4zM661.8 780.3h2.4v2.0h-2.4zM673.7 778.3l2.4 2.4 -2.4 2.4 -2.4 -2.4zM407.0 784.5l2.2 2.2 -2.2 2.2 -2.2 -2.2zM612.7 785.5h2.4v2.4h-2.4zM679.1 784.2l1.9 1.9 -1.9 1.9 -1.9 -1.9zM292.6 789.3l2.4 2.4 -2.4 2.4 -2.4 -2.4zM312.7 790.3h2.0v2.4h-2.0zM357.9 789.2l2.4 2.4 -2.4 2.4 -2.4 -2.4zM389.3 790.7h2.4v2.0h-2.4zM684.9 790.5l1.6 1.6 -1.6 1.6 -1.6 -1.6zM694.7 790.5h2.0v2.4h-2.0zM705.8 790.0h2.0v2.8h-2.0zM318.8 796.0h2.0v2.0h-2.0zM461.3 795.1l2.2 2.2 -2.2 2.2 -2.2 -2.2zM526.3 795.0l2.2 2.2 -2.2 2.2 -2.2 -2.2zM536.1 796.0h2.4v2.0h-2.4zM570.3 795.3l1.6 1.6 -1.6 1.6 -1.6 -1.6zM580.8 795.2l1.9 1.9 -1.9 1.9 -1.9 -1.9zM590.7 796.1h2.0v2.0h-2.0zM656.1 795.6h2.4v2.8h-2.4zM314.4 801.1l1.9 1.9 -1.9 1.9 -1.9 -1.9zM325.0 800.5l1.9 1.9 -1.9 1.9 -1.9 -1.9zM378.6 801.0h2.4v2.8h-2.4zM488.3 800.4l2.2 2.2 -2.2 2.2 -2.2 -2.2zM585.0 801.6h2.4v2.0h-2.4zM597.8 800.5l2.2 2.2 -2.2 2.2 -2.2 -2.2zM351.0 807.1h2.4v2.4h-2.4zM411.2 811.9h2.4v2.4h-2.4zM455.6 810.6l2.4 2.4 -2.4 2.4 -2.4 -2.4zM553.8 811.7l1.6 1.6 -1.6 1.6 -1.6 -1.6zM503.6 817.4h2.0v2.8h-2.0zM547.5 817.5h2.0v2.8h-2.0zM688.6 817.4h2.4v2.4h-2.4zM701.3 817.4l1.6 1.6 -1.6 1.6 -1.6 -1.6zM302.1 823.1h2.0v2.8h-2.0zM323.4 823.3h2.8v2.0h-2.8zM445.1 821.7l2.4 2.4 -2.4 2.4 -2.4 -2.4zM476.4 823.4h2.4v2.0h-2.4zM520.1 823.2h2.4v2.4h-2.4zM706.1 822.2l2.2 2.2 -2.2 2.2 -2.2 -2.2zM362.9 828.2l1.6 1.6 -1.6 1.6 -1.6 -1.6zM492.8 828.3h2.4v2.4h-2.4zM525.8 828.4h2.0v2.0h-2.0zM612.2 828.4h2.4v2.0h-2.4zM678.2 828.1h2.4v2.8h-2.4zM258.6 834.0h2.0v2.0h-2.0zM465.3 834.3h2.4v2.0h-2.4zM499.2 833.2l1.6 1.6 -1.6 1.6 -1.6 -1.6zM673.4 832.4l2.4 2.4 -2.4 2.4 -2.4 -2.4zM252.8 839.4h2.4v2.4h-2.4zM287.1 838.1l2.2 2.2 -2.2 2.2 -2.2 -2.2zM646.7 838.2l1.9 1.9 -1.9 1.9 -1.9 -1.9zM688.8 839.7h2.0v2.0h-2.0z" fill="#c6b4e2"/><path d="M597.3 552.4l2.2 2.2 -2.2 2.2 -2.2 -2.2zM253.8 557.6l1.9 1.9 -1.9 1.9 -1.9 -1.9zM297.5 558.1l1.6 1.6 -1.6 1.6 -1.6 -1.6zM394.6 558.5h2.4v2.8h-2.4zM537.5 557.9l1.6 1.6 -1.6 1.6 -1.6 -1.6zM346.5 562.5l2.2 2.2 -2.2 2.2 -2.2 -2.2zM520.7 562.5l2.4 2.4 -2.4 2.4 -2.4 -2.4zM565.0 563.0l1.9 1.9 -1.9 1.9 -1.9 -1.9zM514.5 569.2h2.8v2.4h-2.8zM335.9 574.0l1.9 1.9 -1.9 1.9 -1.9 -1.9zM368.5 573.5l2.2 2.2 -2.2 2.2 -2.2 -2.2zM384.9 579.5l1.9 1.9 -1.9 1.9 -1.9 -1.9zM483.0 579.2l2.4 2.4 -2.4 2.4 -2.4 -2.4zM579.8 580.1h2.4v2.4h-2.4zM390.0 583.9l2.4 2.4 -2.4 2.4 -2.4 -2.4zM423.1 584.2l2.2 2.2 -2.2 2.2 -2.2 -2.2zM597.0 584.9l1.9 1.9 -1.9 1.9 -1.9 -1.9zM351.8 589.9l2.2 2.2 -2.2 2.2 -2.2 -2.2zM363.2 589.9l1.9 1.9 -1.9 1.9 -1.9 -1.9zM290.8 595.9h2.4v2.4h-2.4zM455.7 596.1l1.6 1.6 -1.6 1.6 -1.6 -1.6zM684.7 595.1l1.9 1.9 -1.9 1.9 -1.9 -1.9zM308.8 600.7l2.2 2.2 -2.2 2.2 -2.2 -2.2zM427.1 601.1h2.4v2.8h-2.4zM666.5 601.5h2.8v2.0h-2.8zM268.7 607.0h2.8v2.0h-2.8zM445.0 606.2l2.4 2.4 -2.4 2.4 -2.4 -2.4zM597.8 606.1l1.9 1.9 -1.9 1.9 -1.9 -1.9zM334.7 617.7h2.4v2.4h-2.4zM639.8 617.9h2.0v2.8h-2.0zM352.5 622.1l2.2 2.2 -2.2 2.2 -2.2 -2.2zM590.8 622.7h2.0v2.8h-2.0zM699.6 622.9h2.4v2.8h-2.4zM532.0 627.9l1.6 1.6 -1.6 1.6 -1.6 -1.6zM543.0 627.9l2.2 2.2 -2.2 2.2 -2.2 -2.2zM275.5 632.9l1.9 1.9 -1.9 1.9 -1.9 -1.9zM270.5 639.2l1.6 1.6 -1.6 1.6 -1.6 -1.6zM683.6 639.0h2.0v2.4h-2.0zM548.0 644.6l1.6 1.6 -1.6 1.6 -1.6 -1.6zM666.8 644.5h2.8v2.4h-2.8zM269.2 650.3h2.8v2.0h-2.8zM368.8 649.6l1.6 1.6 -1.6 1.6 -1.6 -1.6zM421.7 650.1h2.4v2.4h-2.4zM530.8 650.2h2.0v2.4h-2.0zM650.8 650.4h2.0v2.0h-2.0zM253.8 655.1l1.9 1.9 -1.9 1.9 -1.9 -1.9zM312.8 661.2h2.8v2.4h-2.8zM275.5 665.7l1.6 1.6 -1.6 1.6 -1.6 -1.6zM492.6 666.6h2.8v2.4h-2.8zM537.3 665.5l2.4 2.4 -2.4 2.4 -2.4 -2.4zM580.0 666.1h2.8v2.4h-2.8zM526.9 676.5l1.6 1.6 -1.6 1.6 -1.6 -1.6zM712.0 675.9l2.4 2.4 -2.4 2.4 -2.4 -2.4zM412.4 681.3l2.2 2.2 -2.2 2.2 -2.2 -2.2zM541.7 682.9h2.8v2.4h-2.8zM618.6 682.5h2.0v2.4h-2.0zM706.7 681.3l2.2 2.2 -2.2 2.2 -2.2 -2.2zM319.5 686.7l2.4 2.4 -2.4 2.4 -2.4 -2.4zM439.0 686.7l2.4 2.4 -2.4 2.4 -2.4 -2.4zM526.4 687.6l1.6 1.6 -1.6 1.6 -1.6 -1.6zM285.9 698.8h2.4v2.8h-2.4zM455.6 703.4l1.9 1.9 -1.9 1.9 -1.9 -1.9zM717.0 703.2l2.4 2.4 -2.4 2.4 -2.4 -2.4zM341.4 709.1l1.6 1.6 -1.6 1.6 -1.6 -1.6zM334.9 714.5h2.0v2.8h-2.0zM573.9 715.3h2.8v2.0h-2.8zM650.6 715.0h2.4v2.8h-2.4zM694.2 715.2h2.8v2.4h-2.8zM274.5 720.7h2.8v2.4h-2.8zM450.3 719.8l1.6 1.6 -1.6 1.6 -1.6 -1.6zM690.3 719.8l1.6 1.6 -1.6 1.6 -1.6 -1.6zM428.5 730.1l2.2 2.2 -2.2 2.2 -2.2 -2.2zM499.7 736.4l1.6 1.6 -1.6 1.6 -1.6 -1.6zM508.7 736.4h2.8v2.8h-2.8zM606.5 736.6h2.8v2.4h-2.8zM663.0 735.6l2.4 2.4 -2.4 2.4 -2.4 -2.4zM717.1 735.7l2.2 2.2 -2.2 2.2 -2.2 -2.2zM296.6 742.1h2.0v2.8h-2.0zM570.1 741.7l1.6 1.6 -1.6 1.6 -1.6 -1.6zM580.0 741.8h2.4v2.8h-2.4zM378.4 746.8h2.4v2.8h-2.4zM455.7 745.9l2.4 2.4 -2.4 2.4 -2.4 -2.4zM565.0 746.8l1.6 1.6 -1.6 1.6 -1.6 -1.6zM285.5 752.8h2.4v2.0h-2.4zM286.9 762.5l1.9 1.9 -1.9 1.9 -1.9 -1.9zM297.6 762.6l2.2 2.2 -2.2 2.2 -2.2 -2.2zM439.4 762.9l1.9 1.9 -1.9 1.9 -1.9 -1.9zM461.1 763.3l1.9 1.9 -1.9 1.9 -1.9 -1.9zM634.3 763.4h2.4v2.4h-2.4zM646.4 762.4l2.4 2.4 -2.4 2.4 -2.4 -2.4zM335.6 767.7l2.2 2.2 -2.2 2.2 -2.2 -2.2zM454.6 768.9h2.4v2.0h-2.4zM434.0 778.6l2.2 2.2 -2.2 2.2 -2.2 -2.2zM520.1 779.9h2.4v2.4h-2.4zM264.7 784.8l1.6 1.6 -1.6 1.6 -1.6 -1.6zM340.3 784.7h2.0v2.8h-2.0zM482.6 784.4l1.6 1.6 -1.6 1.6 -1.6 -1.6zM524.8 785.8h2.8v2.0h-2.8zM444.8 790.5l1.6 1.6 -1.6 1.6 -1.6 -1.6zM645.7 795.5h2.0v2.8h-2.0zM401.3 800.4l2.4 2.4 -2.4 2.4 -2.4 -2.4zM412.3 800.3l1.9 1.9 -1.9 1.9 -1.9 -1.9zM445.0 800.3l2.4 2.4 -2.4 2.4 -2.4 -2.4zM699.9 807.1h2.8v2.0h-2.8zM465.3 812.2h2.0v2.0h-2.0zM584.8 812.3h2.8v2.4h-2.8zM254.1 816.8l2.2 2.2 -2.2 2.2 -2.2 -2.2zM373.8 816.2l2.4 2.4 -2.4 2.4 -2.4 -2.4zM383.5 817.4h2.8v2.8h-2.8zM437.8 817.4h2.4v2.4h-2.4zM628.6 823.2h2.8v2.8h-2.8zM285.2 828.1h2.8v2.8h-2.8zM350.7 828.4h2.4v2.8h-2.4zM407.0 827.6l1.9 1.9 -1.9 1.9 -1.9 -1.9zM569.0 828.2h2.8v2.0h-2.8zM624.9 828.1l1.6 1.6 -1.6 1.6 -1.6 -1.6zM688.9 828.3h2.8v2.8h-2.8zM711.7 827.8l2.2 2.2 -2.2 2.2 -2.2 -2.2zM314.1 832.6l2.4 2.4 -2.4 2.4 -2.4 -2.4zM265.2 839.1l1.6 1.6 -1.6 1.6 -1.6 -1.6zM472.3 839.0l1.6 1.6 -1.6 1.6 -1.6 -1.6zM559.4 837.9l2.4 2.4 -2.4 2.4 -2.4 -2.4zM710.7 838.9h2.4v2.4h-2.4z" fill="#d884b4"/><path d="M541.7 553.3h2.0v2.4h-2.0zM617.7 553.0h2.4v2.4h-2.4zM308.4 557.6l2.2 2.2 -2.2 2.2 -2.2 -2.2zM415.8 558.0h2.8v2.8h-2.8zM602.5 557.4l2.4 2.4 -2.4 2.4 -2.4 -2.4zM379.2 562.5l2.2 2.2 -2.2 2.2 -2.2 -2.2zM401.3 562.6l2.4 2.4 -2.4 2.4 -2.4 -2.4zM510.4 563.5l1.6 1.6 -1.6 1.6 -1.6 -1.6zM253.7 568.6l1.6 1.6 -1.6 1.6 -1.6 -1.6zM264.9 568.4l2.2 2.2 -2.2 2.2 -2.2 -2.2zM406.8 569.1l1.6 1.6 -1.6 1.6 -1.6 -1.6zM700.1 569.5h2.0v2.4h-2.0zM270.1 573.1l2.4 2.4 -2.4 2.4 -2.4 -2.4zM389.7 574.5h2.0v2.8h-2.0zM509.1 574.6h2.4v2.4h-2.4zM674.0 573.5l2.2 2.2 -2.2 2.2 -2.2 -2.2zM715.8 574.4h2.4v2.4h-2.4zM263.8 579.5h2.4v2.8h-2.4zM286.7 579.6l1.6 1.6 -1.6 1.6 -1.6 -1.6zM372.8 580.3h2.4v2.4h-2.4zM438.2 580.0h2.8v2.8h-2.8zM314.3 584.6l2.2 2.2 -2.2 2.2 -2.2 -2.2zM454.2 585.0h2.4v2.4h-2.4zM521.4 583.8l2.4 2.4 -2.4 2.4 -2.4 -2.4zM576.0 584.7l1.9 1.9 -1.9 1.9 -1.9 -1.9zM585.7 585.3h2.0v2.4h-2.0zM706.4 584.8l2.2 2.2 -2.2 2.2 -2.2 -2.2zM700.8 590.7l1.6 1.6 -1.6 1.6 -1.6 -1.6zM280.9 595.4l1.9 1.9 -1.9 1.9 -1.9 -1.9zM324.0 596.0h2.0v2.8h-2.0zM399.9 596.1h2.4v2.0h-2.4zM531.4 596.3h2.0v2.8h-2.0zM652.2 595.4l1.9 1.9 -1.9 1.9 -1.9 -1.9zM706.5 595.2l2.4 2.4 -2.4 2.4 -2.4 -2.4zM263.6 601.7h2.0v2.0h-2.0zM384.5 601.1l1.9 1.9 -1.9 1.9 -1.9 -1.9zM492.3 601.5h2.8v2.4h-2.8zM634.5 601.3h2.8v2.4h-2.8zM700.9 600.4l2.2 2.2 -2.2 2.2 -2.2 -2.2zM367.2 607.3h2.0v2.0h-2.0zM400.9 605.7l2.2 2.2 -2.2 2.2 -2.2 -2.2zM564.8 606.2l1.6 1.6 -1.6 1.6 -1.6 -1.6zM641.1 606.5l1.9 1.9 -1.9 1.9 -1.9 -1.9zM662.1 607.0h2.0v2.0h-2.0zM683.7 607.2h2.4v2.8h-2.4zM264.9 612.1l1.9 1.9 -1.9 1.9 -1.9 -1.9zM557.8 612.0h2.8v2.8h-2.8zM281.6 616.6l2.2 2.2 -2.2 2.2 -2.2 -2.2zM291.3 618.2h2.4v2.0h-2.4zM401.0 616.4l2.2 2.2 -2.2 2.2 -2.2 -2.2zM606.9 618.0h2.0v2.4h-2.0zM628.6 617.7h2.4v2.8h-2.4zM651.8 617.2l1.9 1.9 -1.9 1.9 -1.9 -1.9zM252.6 623.4h2.8v2.0h-2.8zM286.5 622.5l1.6 1.6 -1.6 1.6 -1.6 -1.6zM394.7 623.3h2.0v2.8h-2.0zM570.2 622.5l2.2 2.2 -2.2 2.2 -2.2 -2.2zM602.0 623.4h2.0v2.4h-2.0zM564.9 627.6l2.4 2.4 -2.4 2.4 -2.4 -2.4zM663.1 627.2l2.4 2.4 -2.4 2.4 -2.4 -2.4zM693.9 628.8h2.4v2.4h-2.4zM592.3 633.7l1.9 1.9 -1.9 1.9 -1.9 -1.9zM624.9 633.0l2.2 2.2 -2.2 2.2 -2.2 -2.2zM412.0 638.0l2.4 2.4 -2.4 2.4 -2.4 -2.4zM487.7 639.0h2.0v2.8h-2.0zM510.5 638.7l1.6 1.6 -1.6 1.6 -1.6 -1.6zM715.7 639.2h2.8v2.4h-2.8zM383.2 644.7h2.8v2.8h-2.8zM488.3 649.4l2.2 2.2 -2.2 2.2 -2.2 -2.2zM630.4 649.0l2.2 2.2 -2.2 2.2 -2.2 -2.2zM662.8 648.9l2.2 2.2 -2.2 2.2 -2.2 -2.2zM341.2 654.6l2.2 2.2 -2.2 2.2 -2.2 -2.2zM439.3 654.4l2.2 2.2 -2.2 2.2 -2.2 -2.2zM634.2 655.6h2.0v2.8h-2.0zM336.1 660.3l1.9 1.9 -1.9 1.9 -1.9 -1.9zM347.0 660.7l1.6 1.6 -1.6 1.6 -1.6 -1.6zM411.2 661.2h2.0v2.0h-2.0zM434.1 660.0l1.9 1.9 -1.9 1.9 -1.9 -1.9zM466.8 659.6l2.4 2.4 -2.4 2.4 -2.4 -2.4zM554.1 660.7l1.9 1.9 -1.9 1.9 -1.9 -1.9zM503.7 666.2h2.8v2.8h-2.8zM291.9 670.9l1.9 1.9 -1.9 1.9 -1.9 -1.9zM531.7 671.0l2.4 2.4 -2.4 2.4 -2.4 -2.4zM650.8 671.9h2.8v2.8h-2.8zM253.9 676.4l1.6 1.6 -1.6 1.6 -1.6 -1.6zM383.9 677.1h2.0v2.4h-2.0zM580.4 677.0h2.0v2.4h-2.0zM679.3 675.8l2.4 2.4 -2.4 2.4 -2.4 -2.4zM510.5 681.9l1.6 1.6 -1.6 1.6 -1.6 -1.6zM564.7 682.0l2.2 2.2 -2.2 2.2 -2.2 -2.2zM661.9 682.9h2.4v2.4h-2.4zM296.1 687.8h2.4v2.8h-2.4zM470.5 688.3h2.4v2.4h-2.4zM536.3 687.9h2.4v2.8h-2.4zM645.2 687.7h2.4v2.4h-2.4zM657.2 687.6l1.9 1.9 -1.9 1.9 -1.9 -1.9zM259.4 692.2l2.2 2.2 -2.2 2.2 -2.2 -2.2zM356.6 693.0h2.4v2.4h-2.4zM367.5 693.4h2.4v2.8h-2.4zM296.4 699.3h2.0v2.0h-2.0zM341.4 698.1l1.9 1.9 -1.9 1.9 -1.9 -1.9zM351.2 698.9h2.4v2.8h-2.4zM536.5 699.1h2.4v2.4h-2.4zM590.8 698.8h2.8v2.8h-2.8zM613.6 697.9l1.9 1.9 -1.9 1.9 -1.9 -1.9zM301.4 704.3h2.8v2.8h-2.8zM324.9 703.5l1.6 1.6 -1.6 1.6 -1.6 -1.6zM575.2 703.0l2.2 2.2 -2.2 2.2 -2.2 -2.2zM619.2 702.8l2.4 2.4 -2.4 2.4 -2.4 -2.4zM639.7 703.8h2.0v2.8h-2.0zM253.9 708.5l2.4 2.4 -2.4 2.4 -2.4 -2.4zM263.7 709.2h2.8v2.4h-2.8zM405.1 709.6h2.4v2.8h-2.4zM482.7 708.8l1.9 1.9 -1.9 1.9 -1.9 -1.9zM613.6 709.4l1.6 1.6 -1.6 1.6 -1.6 -1.6zM268.6 715.0h2.8v2.4h-2.8zM596.1 715.1h2.8v2.0h-2.8zM662.1 715.4h2.0v2.0h-2.0zM352.1 719.7l2.2 2.2 -2.2 2.2 -2.2 -2.2zM439.1 719.6l1.9 1.9 -1.9 1.9 -1.9 -1.9zM503.1 720.2h2.8v2.8h-2.8zM537.6 719.7l2.2 2.2 -2.2 2.2 -2.2 -2.2zM379.2 725.6l1.6 1.6 -1.6 1.6 -1.6 -1.6zM563.6 726.4h2.4v2.0h-2.4zM526.6 730.8l1.9 1.9 -1.9 1.9 -1.9 -1.9zM547.5 731.6h2.0v2.0h-2.0zM570.2 730.3l2.2 2.2 -2.2 2.2 -2.2 -2.2zM690.0 730.4l1.9 1.9 -1.9 1.9 -1.9 -1.9zM377.8 736.9h2.8v2.4h-2.8zM532.2 735.9l2.2 2.2 -2.2 2.2 -2.2 -2.2zM639.5 736.8h2.4v2.4h-2.4zM351.8 741.9l1.6 1.6 -1.6 1.6 -1.6 -1.6zM493.8 741.4l2.2 2.2 -2.2 2.2 -2.2 -2.2zM712.2 741.1l2.2 2.2 -2.2 2.2 -2.2 -2.2zM619.0 746.1l2.4 2.4 -2.4 2.4 -2.4 -2.4zM450.0 751.5l2.4 2.4 -2.4 2.4 -2.4 -2.4zM504.5 751.6l2.2 2.2 -2.2 2.2 -2.2 -2.2zM689.1 752.7h2.4v2.8h-2.4zM499.3 757.4l1.9 1.9 -1.9 1.9 -1.9 -1.9zM694.7 758.1h2.0v2.8h-2.0zM706.7 757.4l1.6 1.6 -1.6 1.6 -1.6 -1.6zM472.0 762.6l2.4 2.4 -2.4 2.4 -2.4 -2.4zM618.1 768.7h2.0v2.4h-2.0zM613.6 773.6l1.9 1.9 -1.9 1.9 -1.9 -1.9zM455.0 779.9h2.0v2.4h-2.0zM586.4 779.5l1.9 1.9 -1.9 1.9 -1.9 -1.9zM329.2 785.1h2.4v2.4h-2.4zM493.8 785.1l1.6 1.6 -1.6 1.6 -1.6 -1.6zM710.2 785.4h2.8v2.4h-2.8zM323.1 790.1h2.8v2.8h-2.8zM336.1 790.0l1.9 1.9 -1.9 1.9 -1.9 -1.9zM379.8 790.1l1.6 1.6 -1.6 1.6 -1.6 -1.6zM575.6 789.8l1.9 1.9 -1.9 1.9 -1.9 -1.9zM416.6 795.9h2.4v2.0h-2.4zM493.7 795.2l1.6 1.6 -1.6 1.6 -1.6 -1.6zM667.0 796.3h2.0v2.4h-2.0zM301.5 801.3h2.8v2.8h-2.8zM335.8 800.7l2.2 2.2 -2.2 2.2 -2.2 -2.2zM367.3 801.6h2.8v2.4h-2.8zM683.4 801.4h2.8v2.0h-2.8zM400.1 812.0h2.8v2.0h-2.8zM433.6 811.3l2.2 2.2 -2.2 2.2 -2.2 -2.2zM564.8 811.3l2.4 2.4 -2.4 2.4 -2.4 -2.4zM329.3 817.6h2.0v2.4h-2.0zM341.5 816.4l2.2 2.2 -2.2 2.2 -2.2 -2.2zM352.3 816.8l1.9 1.9 -1.9 1.9 -1.9 -1.9zM581.2 816.0l2.4 2.4 -2.4 2.4 -2.4 -2.4zM712.1 817.4l1.6 1.6 -1.6 1.6 -1.6 -1.6zM314.3 822.5l1.9 1.9 -1.9 1.9 -1.9 -1.9zM357.9 822.4l1.6 1.6 -1.6 1.6 -1.6 -1.6zM543.2 822.0l1.9 1.9 -1.9 1.9 -1.9 -1.9zM597.5 822.0l2.4 2.4 -2.4 2.4 -2.4 -2.4zM329.2 828.3h2.4v2.8h-2.4zM548.1 827.3l2.4 2.4 -2.4 2.4 -2.4 -2.4zM324.0 833.9h2.4v2.4h-2.4zM521.1 832.5l2.2 2.2 -2.2 2.2 -2.2 -2.2zM563.6 833.3h2.8v2.8h-2.8zM639.6 833.6h2.8v2.8h-2.8zM275.2 838.7h2.0v2.8h-2.0zM351.1 838.7h2.4v2.8h-2.4zM405.0 839.2h2.8v2.0h-2.8zM438.2 839.6h2.0v2.0h-2.0zM494.0 839.2l1.6 1.6 -1.6 1.6 -1.6 -1.6zM581.4 838.3l1.9 1.9 -1.9 1.9 -1.9 -1.9zM592.0 838.4l2.4 2.4 -2.4 2.4 -2.4 -2.4z" fill="#6aa6e4"/><path d="M314.0 552.4l1.9 1.9 -1.9 1.9 -1.9 -1.9zM411.8 551.7l2.4 2.4 -2.4 2.4 -2.4 -2.4zM477.2 551.5l2.4 2.4 -2.4 2.4 -2.4 -2.4zM521.4 551.9l2.4 2.4 -2.4 2.4 -2.4 -2.4zM553.8 551.4l2.4 2.4 -2.4 2.4 -2.4 -2.4zM405.6 558.2h2.4v2.4h-2.4zM460.9 557.9l1.6 1.6 -1.6 1.6 -1.6 -1.6zM472.4 558.0l1.9 1.9 -1.9 1.9 -1.9 -1.9zM494.1 557.4l2.2 2.2 -2.2 2.2 -2.2 -2.2zM514.9 558.8h2.0v2.4h-2.0zM547.3 558.3h2.4v2.0h-2.4zM668.0 557.8l1.6 1.6 -1.6 1.6 -1.6 -1.6zM679.1 558.4l1.6 1.6 -1.6 1.6 -1.6 -1.6zM712.1 557.7l1.9 1.9 -1.9 1.9 -1.9 -1.9zM334.5 563.6h2.8v2.4h-2.8zM357.3 562.5l2.4 2.4 -2.4 2.4 -2.4 -2.4zM552.9 563.7h2.0v2.0h-2.0zM618.0 563.4h2.0v2.8h-2.0zM683.5 563.6h2.0v2.4h-2.0zM695.3 563.0l2.2 2.2 -2.2 2.2 -2.2 -2.2zM706.5 562.8l2.2 2.2 -2.2 2.2 -2.2 -2.2zM383.6 569.2h2.0v2.8h-2.0zM426.7 568.9h2.8v2.8h-2.8zM601.7 569.4h2.0v2.4h-2.0zM710.8 568.8h2.4v2.8h-2.4zM291.0 574.5h2.0v2.0h-2.0zM444.6 573.7l2.2 2.2 -2.2 2.2 -2.2 -2.2zM455.7 574.1l1.6 1.6 -1.6 1.6 -1.6 -1.6zM465.0 574.9h2.8v2.0h-2.8zM477.2 574.1l1.6 1.6 -1.6 1.6 -1.6 -1.6zM428.1 579.2l1.9 1.9 -1.9 1.9 -1.9 -1.9zM515.3 579.3l2.2 2.2 -2.2 2.2 -2.2 -2.2zM559.0 579.5l1.6 1.6 -1.6 1.6 -1.6 -1.6zM466.7 584.6l2.4 2.4 -2.4 2.4 -2.4 -2.4zM477.7 584.0l2.4 2.4 -2.4 2.4 -2.4 -2.4zM509.3 585.6h2.4v2.0h-2.4zM564.4 584.6l1.9 1.9 -1.9 1.9 -1.9 -1.9zM619.5 585.3l1.6 1.6 -1.6 1.6 -1.6 -1.6zM307.1 591.0h2.8v2.4h-2.8zM318.4 591.0h2.0v2.4h-2.0zM373.7 589.8l1.9 1.9 -1.9 1.9 -1.9 -1.9zM437.7 591.1h2.8v2.0h-2.8zM548.6 590.2l1.6 1.6 -1.6 1.6 -1.6 -1.6zM356.6 596.1h2.8v2.0h-2.8zM619.2 595.5l1.9 1.9 -1.9 1.9 -1.9 -1.9zM629.9 595.9l1.6 1.6 -1.6 1.6 -1.6 -1.6zM639.5 596.0h2.8v2.4h-2.8zM695.2 595.5l1.6 1.6 -1.6 1.6 -1.6 -1.6zM405.9 601.6h2.0v2.0h-2.0zM438.3 601.1h2.8v2.8h-2.8zM503.3 601.9h2.8v2.0h-2.8zM678.0 601.4h2.0v2.4h-2.0zM313.0 606.7h2.4v2.8h-2.4zM324.9 606.4l2.2 2.2 -2.2 2.2 -2.2 -2.2zM552.6 607.1h2.4v2.0h-2.4zM619.1 606.6l1.6 1.6 -1.6 1.6 -1.6 -1.6zM717.5 606.0l2.4 2.4 -2.4 2.4 -2.4 -2.4zM362.0 612.6h2.0v2.0h-2.0zM449.9 611.4l2.4 2.4 -2.4 2.4 -2.4 -2.4zM470.4 612.4h2.8v2.0h-2.8zM481.4 612.0h2.4v2.8h-2.4zM547.1 612.4h2.8v2.0h-2.8zM602.9 611.5l2.4 2.4 -2.4 2.4 -2.4 -2.4zM613.9 611.5l2.2 2.2 -2.2 2.2 -2.2 -2.2zM646.3 611.5l2.4 2.4 -2.4 2.4 -2.4 -2.4zM657.2 611.4l2.4 2.4 -2.4 2.4 -2.4 -2.4zM346.7 616.7l1.9 1.9 -1.9 1.9 -1.9 -1.9zM433.7 617.4l1.9 1.9 -1.9 1.9 -1.9 -1.9zM443.6 617.8h2.8v2.4h-2.8zM341.2 622.4l1.6 1.6 -1.6 1.6 -1.6 -1.6zM361.7 623.1h2.4v2.8h-2.4zM406.8 623.1l1.6 1.6 -1.6 1.6 -1.6 -1.6zM526.9 622.6l1.9 1.9 -1.9 1.9 -1.9 -1.9zM548.4 622.6l1.9 1.9 -1.9 1.9 -1.9 -1.9zM303.4 627.9l1.6 1.6 -1.6 1.6 -1.6 -1.6zM443.5 628.1h2.4v2.8h-2.4zM706.8 627.8l2.2 2.2 -2.2 2.2 -2.2 -2.2zM286.5 633.5l1.6 1.6 -1.6 1.6 -1.6 -1.6zM340.6 634.5h2.0v2.0h-2.0zM373.9 633.5l1.9 1.9 -1.9 1.9 -1.9 -1.9zM438.0 634.4h2.4v2.0h-2.4zM504.5 633.2l2.2 2.2 -2.2 2.2 -2.2 -2.2zM679.4 632.6l2.4 2.4 -2.4 2.4 -2.4 -2.4zM345.4 638.8h2.4v2.8h-2.4zM421.3 639.0h2.8v2.8h-2.8zM499.3 639.0l1.6 1.6 -1.6 1.6 -1.6 -1.6zM520.0 639.4h2.8v2.4h-2.8zM641.0 638.7l1.9 1.9 -1.9 1.9 -1.9 -1.9zM319.4 643.7l2.2 2.2 -2.2 2.2 -2.2 -2.2zM569.2 644.4h2.0v2.8h-2.0zM657.1 644.6l1.6 1.6 -1.6 1.6 -1.6 -1.6zM279.9 650.1h2.8v2.8h-2.8zM357.5 649.4l2.4 2.4 -2.4 2.4 -2.4 -2.4zM400.6 650.0h2.0v2.8h-2.0zM455.9 650.1l1.6 1.6 -1.6 1.6 -1.6 -1.6zM509.9 649.6l1.6 1.6 -1.6 1.6 -1.6 -1.6zM585.7 650.1h2.0v2.0h-2.0zM695.4 648.8l2.2 2.2 -2.2 2.2 -2.2 -2.2zM705.6 649.7h2.0v2.8h-2.0zM448.7 655.5h2.8v2.8h-2.8zM612.4 655.1h2.0v2.8h-2.0zM688.6 655.9h2.4v2.0h-2.4zM711.6 654.5l2.2 2.2 -2.2 2.2 -2.2 -2.2zM259.1 659.4l2.4 2.4 -2.4 2.4 -2.4 -2.4zM280.1 661.1h2.8v2.4h-2.8zM421.6 660.9h2.4v2.0h-2.4zM443.8 661.4h2.8v2.0h-2.8zM477.8 660.7l1.9 1.9 -1.9 1.9 -1.9 -1.9zM487.0 660.8h2.4v2.8h-2.4zM574.7 661.6h2.0v2.0h-2.0zM630.3 659.8l2.4 2.4 -2.4 2.4 -2.4 -2.4zM715.6 661.2h2.8v2.4h-2.8zM461.4 665.3l2.2 2.2 -2.2 2.2 -2.2 -2.2zM472.3 665.6l1.9 1.9 -1.9 1.9 -1.9 -1.9zM667.0 667.0h2.4v2.0h-2.4zM541.8 671.9h2.0v2.4h-2.0zM630.3 670.6l2.4 2.4 -2.4 2.4 -2.4 -2.4zM672.4 672.1h2.0v2.4h-2.0zM706.3 671.4l1.9 1.9 -1.9 1.9 -1.9 -1.9zM351.1 677.1h2.8v2.0h-2.8zM559.6 677.0l1.6 1.6 -1.6 1.6 -1.6 -1.6zM591.1 677.2h2.0v2.4h-2.0zM259.8 681.7l1.9 1.9 -1.9 1.9 -1.9 -1.9zM345.0 683.0h2.8v2.0h-2.8zM694.1 682.4h2.0v2.4h-2.0zM286.6 687.0l2.2 2.2 -2.2 2.2 -2.2 -2.2zM308.6 686.4l2.4 2.4 -2.4 2.4 -2.4 -2.4zM383.2 687.9h2.8v2.8h-2.8zM504.6 687.9l1.6 1.6 -1.6 1.6 -1.6 -1.6zM592.0 687.5l1.9 1.9 -1.9 1.9 -1.9 -1.9zM602.6 687.6l1.9 1.9 -1.9 1.9 -1.9 -1.9zM668.2 687.3l1.6 1.6 -1.6 1.6 -1.6 -1.6zM688.6 687.8h2.4v2.8h-2.4zM710.7 687.6h2.4v2.8h-2.4zM314.4 692.6l2.2 2.2 -2.2 2.2 -2.2 -2.2zM335.7 692.2l2.2 2.2 -2.2 2.2 -2.2 -2.2zM346.4 692.5l2.4 2.4 -2.4 2.4 -2.4 -2.4zM390.0 692.4l2.4 2.4 -2.4 2.4 -2.4 -2.4zM466.2 692.6l1.9 1.9 -1.9 1.9 -1.9 -1.9zM486.8 693.5h2.8v2.8h-2.8zM574.4 693.1h2.8v2.8h-2.8zM662.9 693.1l1.9 1.9 -1.9 1.9 -1.9 -1.9zM673.6 692.7l1.6 1.6 -1.6 1.6 -1.6 -1.6zM265.1 698.7l1.6 1.6 -1.6 1.6 -1.6 -1.6zM448.9 699.3h2.0v2.0h-2.0zM460.8 698.4l1.9 1.9 -1.9 1.9 -1.9 -1.9zM515.7 698.0l2.4 2.4 -2.4 2.4 -2.4 -2.4zM313.0 704.3h2.8v2.8h-2.8zM334.6 704.2h2.4v2.0h-2.4zM356.8 703.7h2.0v2.8h-2.0zM389.4 704.4h2.0v2.4h-2.0zM465.5 703.6h2.0v2.8h-2.0zM541.5 704.4h2.8v2.0h-2.8zM630.1 703.3l2.2 2.2 -2.2 2.2 -2.2 -2.2zM662.8 703.8l1.6 1.6 -1.6 1.6 -1.6 -1.6zM558.9 709.0l1.9 1.9 -1.9 1.9 -1.9 -1.9zM634.2 709.1h2.0v2.8h-2.0zM291.8 714.0l2.2 2.2 -2.2 2.2 -2.2 -2.2zM423.0 715.0l1.6 1.6 -1.6 1.6 -1.6 -1.6zM520.2 715.1h2.4v2.0h-2.4zM608.6 714.0l2.4 2.4 -2.4 2.4 -2.4 -2.4zM672.7 715.5h2.0v2.0h-2.0zM341.0 719.5l1.9 1.9 -1.9 1.9 -1.9 -1.9zM362.7 719.3l2.2 2.2 -2.2 2.2 -2.2 -2.2zM385.1 720.4l1.6 1.6 -1.6 1.6 -1.6 -1.6zM406.4 720.0l1.6 1.6 -1.6 1.6 -1.6 -1.6zM482.9 719.5l2.4 2.4 -2.4 2.4 -2.4 -2.4zM525.6 721.0h2.0v2.0h-2.0zM601.7 720.9h2.8v2.0h-2.8zM259.7 724.8l2.4 2.4 -2.4 2.4 -2.4 -2.4zM269.5 725.7h2.0v2.8h-2.0zM334.1 725.8h2.8v2.8h-2.8zM399.6 726.2h2.8v2.0h-2.8zM466.5 724.5l2.2 2.2 -2.2 2.2 -2.2 -2.2zM519.5 725.7h2.4v2.0h-2.4zM607.5 726.1h2.4v2.4h-2.4zM684.5 724.3l2.4 2.4 -2.4 2.4 -2.4 -2.4zM330.1 730.9l1.9 1.9 -1.9 1.9 -1.9 -1.9zM558.9 730.9l1.9 1.9 -1.9 1.9 -1.9 -1.9zM646.2 729.9l2.2 2.2 -2.2 2.2 -2.2 -2.2zM668.0 730.6l1.9 1.9 -1.9 1.9 -1.9 -1.9zM710.6 730.8h2.4v2.8h-2.4zM281.7 736.4l1.6 1.6 -1.6 1.6 -1.6 -1.6zM390.0 736.0l1.9 1.9 -1.9 1.9 -1.9 -1.9zM444.8 736.1l1.6 1.6 -1.6 1.6 -1.6 -1.6zM454.6 736.8h2.8v2.8h-2.8zM617.9 737.0h2.0v2.0h-2.0zM683.8 736.5h2.0v2.8h-2.0zM395.7 741.2l2.2 2.2 -2.2 2.2 -2.2 -2.2zM481.4 742.0h2.4v2.4h-2.4zM503.4 741.7h2.4v2.8h-2.4zM536.5 742.1h2.4v2.4h-2.4zM635.8 741.9l1.6 1.6 -1.6 1.6 -1.6 -1.6zM646.2 740.8l2.4 2.4 -2.4 2.4 -2.4 -2.4zM656.1 742.0h2.8v2.8h-2.8zM433.6 746.9l1.9 1.9 -1.9 1.9 -1.9 -1.9zM520.9 746.3l2.2 2.2 -2.2 2.2 -2.2 -2.2zM585.3 747.6h2.8v2.8h-2.8zM640.8 746.0l2.2 2.2 -2.2 2.2 -2.2 -2.2zM650.7 747.6h2.0v2.4h-2.0zM673.9 747.1l1.6 1.6 -1.6 1.6 -1.6 -1.6zM717.6 746.7l1.6 1.6 -1.6 1.6 -1.6 -1.6zM383.5 753.0h2.8v2.4h-2.8zM439.2 751.2l2.4 2.4 -2.4 2.4 -2.4 -2.4zM514.3 752.7h2.8v2.0h-2.8zM570.1 752.3l1.6 1.6 -1.6 1.6 -1.6 -1.6zM580.7 752.5l1.6 1.6 -1.6 1.6 -1.6 -1.6zM701.3 751.4l2.4 2.4 -2.4 2.4 -2.4 -2.4zM712.1 752.1l1.6 1.6 -1.6 1.6 -1.6 -1.6zM488.3 758.0l1.6 1.6 -1.6 1.6 -1.6 -1.6zM574.6 757.7h2.4v2.8h-2.4zM618.3 758.6h2.4v2.0h-2.4zM684.7 757.5l2.2 2.2 -2.2 2.2 -2.2 -2.2zM341.1 762.5l2.4 2.4 -2.4 2.4 -2.4 -2.4zM417.3 762.9l1.9 1.9 -1.9 1.9 -1.9 -1.9zM579.8 763.4h2.4v2.4h-2.4zM259.5 768.5l1.6 1.6 -1.6 1.6 -1.6 -1.6zM302.0 768.9h2.4v2.4h-2.4zM312.3 769.0h2.8v2.4h-2.8zM410.7 769.1h2.8v2.4h-2.8zM423.0 768.0l2.2 2.2 -2.2 2.2 -2.2 -2.2zM499.6 768.3l1.6 1.6 -1.6 1.6 -1.6 -1.6zM574.5 768.9h2.0v2.8h-2.0zM684.0 769.3h2.0v2.4h-2.0zM265.3 774.2l1.6 1.6 -1.6 1.6 -1.6 -1.6zM286.4 774.4l1.6 1.6 -1.6 1.6 -1.6 -1.6zM514.6 774.5h2.8v2.4h-2.8zM711.2 774.2h2.0v2.0h-2.0zM345.6 779.4h2.8v2.4h-2.8zM499.1 779.4l1.9 1.9 -1.9 1.9 -1.9 -1.9zM563.1 779.9h2.4v2.0h-2.4zM361.8 785.2h2.4v2.0h-2.4zM417.8 783.7l2.4 2.4 -2.4 2.4 -2.4 -2.4zM633.9 785.0h2.8v2.8h-2.8zM701.1 784.5l2.2 2.2 -2.2 2.2 -2.2 -2.2zM346.9 789.5l2.4 2.4 -2.4 2.4 -2.4 -2.4zM366.9 790.3h2.8v2.8h-2.8zM476.2 790.9h2.0v2.4h-2.0zM541.6 790.5h2.8v2.4h-2.8zM564.5 789.2l2.4 2.4 -2.4 2.4 -2.4 -2.4zM639.9 790.1h2.0v2.8h-2.0zM662.4 790.6l1.6 1.6 -1.6 1.6 -1.6 -1.6zM254.4 795.1l2.4 2.4 -2.4 2.4 -2.4 -2.4zM276.1 794.8l2.4 2.4 -2.4 2.4 -2.4 -2.4zM406.9 794.6l2.2 2.2 -2.2 2.2 -2.2 -2.2zM515.8 795.3l2.2 2.2 -2.2 2.2 -2.2 -2.2zM559.6 794.9l2.4 2.4 -2.4 2.4 -2.4 -2.4zM711.0 795.7h2.4v2.4h-2.4zM422.7 800.4l2.4 2.4 -2.4 2.4 -2.4 -2.4zM618.1 801.5h2.4v2.8h-2.4zM672.5 801.4h2.8v2.8h-2.8zM254.4 806.0l1.6 1.6 -1.6 1.6 -1.6 -1.6zM264.7 806.5l1.9 1.9 -1.9 1.9 -1.9 -1.9zM275.9 805.9l2.2 2.2 -2.2 2.2 -2.2 -2.2zM286.4 805.6l2.2 2.2 -2.2 2.2 -2.2 -2.2zM319.2 805.7l2.4 2.4 -2.4 2.4 -2.4 -2.4zM384.9 806.4l1.9 1.9 -1.9 1.9 -1.9 -1.9zM569.5 806.2h2.0v2.8h-2.0zM613.1 806.6h2.0v2.0h-2.0zM677.7 806.7h2.8v2.0h-2.8zM711.6 806.5l1.6 1.6 -1.6 1.6 -1.6 -1.6zM368.8 812.1l1.6 1.6 -1.6 1.6 -1.6 -1.6zM379.0 811.3l2.2 2.2 -2.2 2.2 -2.2 -2.2zM499.1 811.4l1.6 1.6 -1.6 1.6 -1.6 -1.6zM510.0 811.6l1.9 1.9 -1.9 1.9 -1.9 -1.9zM530.7 812.3h2.4v2.0h-2.4zM541.9 812.2h2.0v2.4h-2.0zM630.2 810.9l2.2 2.2 -2.2 2.2 -2.2 -2.2zM641.3 810.8l2.4 2.4 -2.4 2.4 -2.4 -2.4zM662.5 810.7l2.4 2.4 -2.4 2.4 -2.4 -2.4zM361.7 817.4h2.8v2.8h-2.8zM406.4 816.7l1.9 1.9 -1.9 1.9 -1.9 -1.9zM428.5 816.3l2.2 2.2 -2.2 2.2 -2.2 -2.2zM460.3 817.9h2.4v2.0h-2.4zM482.2 817.2h2.0v2.8h-2.0zM526.6 816.9l1.6 1.6 -1.6 1.6 -1.6 -1.6zM635.8 817.3l1.6 1.6 -1.6 1.6 -1.6 -1.6zM656.4 817.5h2.0v2.8h-2.0zM379.3 822.4l2.2 2.2 -2.2 2.2 -2.2 -2.2zM499.6 821.8l2.2 2.2 -2.2 2.2 -2.2 -2.2zM553.7 822.5l1.6 1.6 -1.6 1.6 -1.6 -1.6zM574.9 822.9h2.0v2.4h-2.0zM662.7 822.1l2.4 2.4 -2.4 2.4 -2.4 -2.4zM274.4 828.6h2.4v2.0h-2.4zM307.4 828.8h2.4v2.0h-2.4zM341.6 828.0l1.9 1.9 -1.9 1.9 -1.9 -1.9zM427.4 828.6h2.0v2.0h-2.0zM269.6 833.6h2.0v2.8h-2.0zM335.8 832.4l2.2 2.2 -2.2 2.2 -2.2 -2.2zM345.0 834.1h2.8v2.0h-2.8zM411.9 833.5l1.6 1.6 -1.6 1.6 -1.6 -1.6zM488.7 833.2l1.9 1.9 -1.9 1.9 -1.9 -1.9zM575.7 832.9l2.2 2.2 -2.2 2.2 -2.2 -2.2zM661.5 833.8h2.4v2.0h-2.4zM482.7 838.4l2.2 2.2 -2.2 2.2 -2.2 -2.2zM515.3 837.7l2.4 2.4 -2.4 2.4 -2.4 -2.4zM537.3 837.7l2.4 2.4 -2.4 2.4 -2.4 -2.4zM570.1 838.1l2.4 2.4 -2.4 2.4 -2.4 -2.4zM634.6 839.7h2.0v2.0h-2.0zM657.7 839.0l1.6 1.6 -1.6 1.6 -1.6 -1.6zM666.7 839.8h2.4v2.0h-2.4z" fill="#a2cced"/><path d="M487.2 553.0h2.0v2.8h-2.0zM265.3 557.8l1.6 1.6 -1.6 1.6 -1.6 -1.6zM624.9 557.3l2.4 2.4 -2.4 2.4 -2.4 -2.4zM388.7 564.4h2.8v2.0h-2.8zM606.7 563.9h2.8v2.4h-2.8zM286.8 568.3l2.4 2.4 -2.4 2.4 -2.4 -2.4zM537.8 568.7l1.9 1.9 -1.9 1.9 -1.9 -1.9zM580.2 569.1h2.0v2.8h-2.0zM635.3 568.0l2.4 2.4 -2.4 2.4 -2.4 -2.4zM635.8 579.0l2.2 2.2 -2.2 2.2 -2.2 -2.2zM646.7 579.0l2.2 2.2 -2.2 2.2 -2.2 -2.2zM268.9 585.4h2.4v2.8h-2.4zM444.1 585.5h2.0v2.8h-2.0zM264.0 590.8h2.4v2.8h-2.4zM297.3 589.8l2.2 2.2 -2.2 2.2 -2.2 -2.2zM448.9 590.9h2.8v2.4h-2.8zM302.2 596.0h2.0v2.8h-2.0zM363.4 601.2l1.9 1.9 -1.9 1.9 -1.9 -1.9zM481.3 601.6h2.8v2.8h-2.8zM568.4 601.4h2.8v2.8h-2.8zM591.9 600.6l1.9 1.9 -1.9 1.9 -1.9 -1.9zM623.6 601.5h2.0v2.8h-2.0zM711.6 600.9l1.9 1.9 -1.9 1.9 -1.9 -1.9zM377.9 607.2h2.8v2.4h-2.8zM541.7 607.1h2.4v2.8h-2.4zM253.2 612.0h2.4v2.8h-2.4zM427.4 612.5h2.0v2.4h-2.0zM438.4 612.0h2.4v2.8h-2.4zM504.9 612.0l1.6 1.6 -1.6 1.6 -1.6 -1.6zM537.6 611.2l2.4 2.4 -2.4 2.4 -2.4 -2.4zM258.2 617.7h2.0v2.0h-2.0zM388.5 617.5h2.8v2.4h-2.8zM487.2 618.0h2.8v2.4h-2.8zM509.0 618.4h2.0v2.0h-2.0zM459.8 623.6h2.4v2.0h-2.4zM612.6 623.5h2.8v2.0h-2.8zM678.8 622.7l1.6 1.6 -1.6 1.6 -1.6 -1.6zM711.5 622.5l1.6 1.6 -1.6 1.6 -1.6 -1.6zM574.7 629.0h2.4v2.0h-2.4zM585.3 628.8h2.4v2.0h-2.4zM252.7 633.9h2.0v2.4h-2.0zM493.5 632.9l2.4 2.4 -2.4 2.4 -2.4 -2.4zM514.4 634.2h2.4v2.0h-2.4zM581.2 632.8l2.2 2.2 -2.2 2.2 -2.2 -2.2zM614.1 633.2l2.4 2.4 -2.4 2.4 -2.4 -2.4zM700.1 633.7h2.4v2.4h-2.4zM367.3 639.1h2.8v2.4h-2.8zM662.9 638.0l2.2 2.2 -2.2 2.2 -2.2 -2.2zM672.3 639.5h2.4v2.0h-2.4zM265.3 644.7l1.6 1.6 -1.6 1.6 -1.6 -1.6zM275.6 644.3l1.9 1.9 -1.9 1.9 -1.9 -1.9zM341.5 643.8l2.4 2.4 -2.4 2.4 -2.4 -2.4zM524.9 644.8h2.8v2.4h-2.8zM336.2 649.3l2.4 2.4 -2.4 2.4 -2.4 -2.4zM553.8 649.6l1.6 1.6 -1.6 1.6 -1.6 -1.6zM285.4 655.5h2.8v2.8h-2.8zM330.3 654.4l2.4 2.4 -2.4 2.4 -2.4 -2.4zM481.4 655.9h2.8v2.4h-2.8zM678.3 655.6h2.4v2.4h-2.4zM368.8 660.8l1.6 1.6 -1.6 1.6 -1.6 -1.6zM564.6 660.2l1.6 1.6 -1.6 1.6 -1.6 -1.6zM639.4 660.9h2.4v2.4h-2.4zM617.9 672.2h2.8v2.4h-2.8zM264.1 677.2h2.0v2.4h-2.0zM363.1 676.3l2.2 2.2 -2.2 2.2 -2.2 -2.2zM406.8 676.3l1.9 1.9 -1.9 1.9 -1.9 -1.9zM493.0 677.4h2.4v2.4h-2.4zM515.8 676.0l2.2 2.2 -2.2 2.2 -2.2 -2.2zM603.1 676.3l2.4 2.4 -2.4 2.4 -2.4 -2.4zM634.6 677.1h2.4v2.4h-2.4zM292.2 681.9l1.9 1.9 -1.9 1.9 -1.9 -1.9zM466.3 681.6l2.4 2.4 -2.4 2.4 -2.4 -2.4zM521.2 681.9l1.9 1.9 -1.9 1.9 -1.9 -1.9zM428.3 688.0l1.6 1.6 -1.6 1.6 -1.6 -1.6zM481.9 688.2h2.4v2.4h-2.4zM548.0 686.9l2.4 2.4 -2.4 2.4 -2.4 -2.4zM679.0 687.3l1.6 1.6 -1.6 1.6 -1.6 -1.6zM269.5 694.0h2.4v2.0h-2.4zM325.2 692.4l2.2 2.2 -2.2 2.2 -2.2 -2.2zM553.0 693.8h2.4v2.0h-2.4zM275.9 697.8l2.2 2.2 -2.2 2.2 -2.2 -2.2zM525.7 699.2h2.4v2.4h-2.4zM292.2 703.3l2.2 2.2 -2.2 2.2 -2.2 -2.2zM401.2 703.8l1.9 1.9 -1.9 1.9 -1.9 -1.9zM411.8 703.6l1.9 1.9 -1.9 1.9 -1.9 -1.9zM445.1 702.8l2.4 2.4 -2.4 2.4 -2.4 -2.4zM564.4 702.9l2.4 2.4 -2.4 2.4 -2.4 -2.4zM672.3 704.5h2.4v2.4h-2.4zM329.0 709.4h2.0v2.8h-2.0zM461.1 708.6l2.2 2.2 -2.2 2.2 -2.2 -2.2zM568.8 709.8h2.8v2.4h-2.8zM602.0 709.3h2.4v2.8h-2.4zM303.2 714.4l2.2 2.2 -2.2 2.2 -2.2 -2.2zM443.4 715.0h2.0v2.8h-2.0zM547.4 720.5h2.4v2.8h-2.4zM580.7 719.8l1.9 1.9 -1.9 1.9 -1.9 -1.9zM710.1 720.6h2.8v2.0h-2.8zM291.0 725.7h2.0v2.4h-2.0zM532.0 724.6l2.4 2.4 -2.4 2.4 -2.4 -2.4zM439.0 729.8l2.2 2.2 -2.2 2.2 -2.2 -2.2zM450.6 730.6l2.2 2.2 -2.2 2.2 -2.2 -2.2zM259.8 735.4l2.4 2.4 -2.4 2.4 -2.4 -2.4zM270.5 736.0l1.9 1.9 -1.9 1.9 -1.9 -1.9zM313.3 736.8h2.0v2.8h-2.0zM355.9 736.5h2.8v2.8h-2.8zM542.8 736.5l1.6 1.6 -1.6 1.6 -1.6 -1.6zM372.9 742.2h2.0v2.4h-2.0zM269.2 747.4h2.4v2.8h-2.4zM465.2 747.0h2.4v2.8h-2.4zM576.0 746.5l2.4 2.4 -2.4 2.4 -2.4 -2.4zM306.8 752.3h2.8v2.8h-2.8zM460.0 752.4h2.4v2.8h-2.4zM312.9 758.4h2.8v2.4h-2.8zM455.6 757.4l1.6 1.6 -1.6 1.6 -1.6 -1.6zM563.8 758.2h2.0v2.0h-2.0zM585.5 758.2h2.0v2.0h-2.0zM607.5 758.2h2.0v2.0h-2.0zM662.5 757.6l1.6 1.6 -1.6 1.6 -1.6 -1.6zM330.3 762.8l2.4 2.4 -2.4 2.4 -2.4 -2.4zM352.4 762.6l2.4 2.4 -2.4 2.4 -2.4 -2.4zM374.1 762.6l1.9 1.9 -1.9 1.9 -1.9 -1.9zM603.2 762.3l2.4 2.4 -2.4 2.4 -2.4 -2.4zM466.4 767.9l2.2 2.2 -2.2 2.2 -2.2 -2.2zM564.7 768.9l1.6 1.6 -1.6 1.6 -1.6 -1.6zM706.2 768.9l1.6 1.6 -1.6 1.6 -1.6 -1.6zM306.8 774.4h2.8v2.8h-2.8zM493.2 774.9h2.0v2.0h-2.0zM357.3 779.2l1.6 1.6 -1.6 1.6 -1.6 -1.6zM465.0 779.5h2.8v2.8h-2.8zM552.3 779.6h2.4v2.0h-2.4zM574.0 780.3h2.4v2.0h-2.4zM651.9 779.1l1.9 1.9 -1.9 1.9 -1.9 -1.9zM694.9 780.3h2.0v2.0h-2.0zM308.9 785.2l1.6 1.6 -1.6 1.6 -1.6 -1.6zM395.9 784.9l1.9 1.9 -1.9 1.9 -1.9 -1.9zM504.7 784.8l1.9 1.9 -1.9 1.9 -1.9 -1.9zM651.8 789.4l2.2 2.2 -2.2 2.2 -2.2 -2.2zM438.4 795.9h2.0v2.0h-2.0zM612.9 795.9h2.0v2.0h-2.0zM498.2 801.3h2.0v2.4h-2.0zM662.9 801.3l1.6 1.6 -1.6 1.6 -1.6 -1.6zM308.5 806.2l1.6 1.6 -1.6 1.6 -1.6 -1.6zM395.9 806.0l1.9 1.9 -1.9 1.9 -1.9 -1.9zM334.4 811.9h2.8v2.8h-2.8zM388.8 812.5h2.4v2.4h-2.4zM476.5 811.8h2.4v2.8h-2.4zM608.1 812.1l1.6 1.6 -1.6 1.6 -1.6 -1.6zM695.3 811.7l1.9 1.9 -1.9 1.9 -1.9 -1.9zM395.1 817.5h2.0v2.0h-2.0zM537.5 816.8l2.2 2.2 -2.2 2.2 -2.2 -2.2zM559.0 816.3l2.2 2.2 -2.2 2.2 -2.2 -2.2zM601.5 817.6h2.8v2.0h-2.8zM487.6 822.6h2.0v2.8h-2.0zM509.2 823.4h2.4v2.0h-2.4zM640.8 822.4l1.6 1.6 -1.6 1.6 -1.6 -1.6zM383.8 828.8h2.4v2.0h-2.4zM503.3 828.4h2.4v2.8h-2.4zM514.7 828.2h2.4v2.0h-2.4zM536.2 828.7h2.8v2.0h-2.8zM666.5 828.4h2.8v2.8h-2.8zM651.6 833.2l1.6 1.6 -1.6 1.6 -1.6 -1.6zM341.0 838.5l1.6 1.6 -1.6 1.6 -1.6 -1.6zM384.5 838.1l1.9 1.9 -1.9 1.9 -1.9 -1.9zM461.3 838.4l2.2 2.2 -2.2 2.2 -2.2 -2.2zM678.8 838.8l1.9 1.9 -1.9 1.9 -1.9 -1.9z" fill="#b896d2"/><path d="M290.5 552.4h2.8v2.8h-2.8zM334.3 552.8h2.8v2.4h-2.8zM499.6 551.9l2.4 2.4 -2.4 2.4 -2.4 -2.4zM650.4 553.2h2.8v2.4h-2.8zM706.3 552.4l1.9 1.9 -1.9 1.9 -1.9 -1.9zM281.0 563.5l1.6 1.6 -1.6 1.6 -1.6 -1.6zM423.2 563.2l1.6 1.6 -1.6 1.6 -1.6 -1.6zM454.7 563.7h2.0v2.8h-2.0zM595.8 563.7h2.8v2.0h-2.8zM630.4 562.7l1.9 1.9 -1.9 1.9 -1.9 -1.9zM296.7 568.8h2.4v2.8h-2.4zM558.0 569.0h2.4v2.4h-2.4zM314.2 574.2l1.9 1.9 -1.9 1.9 -1.9 -1.9zM595.9 574.4h2.8v2.8h-2.8zM661.4 575.1h2.4v2.0h-2.4zM693.9 575.1h2.8v2.0h-2.8zM706.6 573.1l2.4 2.4 -2.4 2.4 -2.4 -2.4zM536.4 580.3h2.0v2.0h-2.0zM379.6 584.8l1.9 1.9 -1.9 1.9 -1.9 -1.9zM503.7 591.4h2.4v2.0h-2.4zM525.8 591.0h2.0v2.0h-2.0zM537.6 590.2l1.6 1.6 -1.6 1.6 -1.6 -1.6zM590.6 590.5h2.0v2.4h-2.0zM614.1 590.0l2.2 2.2 -2.2 2.2 -2.2 -2.2zM657.1 600.9l1.6 1.6 -1.6 1.6 -1.6 -1.6zM356.7 606.9h2.4v2.0h-2.4zM390.7 606.8l1.6 1.6 -1.6 1.6 -1.6 -1.6zM422.6 606.6l1.9 1.9 -1.9 1.9 -1.9 -1.9zM432.2 607.2h2.8v2.8h-2.8zM629.8 605.7l2.4 2.4 -2.4 2.4 -2.4 -2.4zM307.2 612.4h2.4v2.0h-2.4zM406.8 612.0l1.6 1.6 -1.6 1.6 -1.6 -1.6zM677.9 612.0h2.4v2.4h-2.4zM378.4 617.9h2.4v2.0h-2.4zM585.4 618.2h2.0v2.4h-2.0zM537.6 622.4l1.9 1.9 -1.9 1.9 -1.9 -1.9zM559.6 622.5l1.6 1.6 -1.6 1.6 -1.6 -1.6zM624.8 622.2l2.2 2.2 -2.2 2.2 -2.2 -2.2zM552.4 629.0h2.8v2.0h-2.8zM652.0 627.4l2.4 2.4 -2.4 2.4 -2.4 -2.4zM460.0 634.1h2.8v2.8h-2.8zM524.8 633.8h2.8v2.8h-2.8zM568.9 634.0h2.8v2.0h-2.8zM601.5 633.9h2.0v2.0h-2.0zM258.9 639.9h2.0v2.0h-2.0zM314.1 639.1l1.6 1.6 -1.6 1.6 -1.6 -1.6zM443.5 639.2h2.0v2.8h-2.0zM466.8 638.6l1.6 1.6 -1.6 1.6 -1.6 -1.6zM286.5 644.4l1.6 1.6 -1.6 1.6 -1.6 -1.6zM372.8 644.5h2.4v2.4h-2.4zM459.4 644.9h2.8v2.0h-2.8zM592.1 643.9l1.9 1.9 -1.9 1.9 -1.9 -1.9zM690.1 644.0l2.2 2.2 -2.2 2.2 -2.2 -2.2zM258.0 649.8h2.4v2.4h-2.4zM574.4 650.2h2.4v2.8h-2.4zM619.3 649.3l2.4 2.4 -2.4 2.4 -2.4 -2.4zM548.0 654.3l2.4 2.4 -2.4 2.4 -2.4 -2.4zM325.1 659.8l2.4 2.4 -2.4 2.4 -2.4 -2.4zM541.7 660.5h2.8v2.8h-2.8zM661.3 660.9h2.8v2.4h-2.8zM684.6 660.7l1.9 1.9 -1.9 1.9 -1.9 -1.9zM286.7 665.6l1.9 1.9 -1.9 1.9 -1.9 -1.9zM428.4 665.9l1.6 1.6 -1.6 1.6 -1.6 -1.6zM657.0 666.3l1.6 1.6 -1.6 1.6 -1.6 -1.6zM454.3 671.9h2.8v2.0h-2.8zM487.1 671.4h2.8v2.4h-2.8zM499.3 670.6l2.4 2.4 -2.4 2.4 -2.4 -2.4zM509.3 671.3h2.4v2.8h-2.4zM564.9 671.2l1.6 1.6 -1.6 1.6 -1.6 -1.6zM575.3 671.4l1.9 1.9 -1.9 1.9 -1.9 -1.9zM586.7 670.7l2.4 2.4 -2.4 2.4 -2.4 -2.4zM639.5 671.6h2.4v2.0h-2.4zM661.6 671.6h2.8v2.0h-2.8zM297.0 677.6h2.0v2.0h-2.0zM330.5 676.5l2.2 2.2 -2.2 2.2 -2.2 -2.2zM281.7 681.8l2.2 2.2 -2.2 2.2 -2.2 -2.2zM684.3 681.9l1.9 1.9 -1.9 1.9 -1.9 -1.9zM330.4 687.2l1.6 1.6 -1.6 1.6 -1.6 -1.6zM579.9 687.9h2.8v2.0h-2.8zM443.5 693.2h2.0v2.8h-2.0zM585.4 693.2h2.8v2.8h-2.8zM597.6 692.8l2.2 2.2 -2.2 2.2 -2.2 -2.2zM706.7 692.7l1.9 1.9 -1.9 1.9 -1.9 -1.9zM319.5 697.7l2.2 2.2 -2.2 2.2 -2.2 -2.2zM601.6 698.3h2.0v2.8h-2.0zM646.2 697.9l2.4 2.4 -2.4 2.4 -2.4 -2.4zM700.2 698.8h2.0v2.8h-2.0zM259.4 703.3l1.9 1.9 -1.9 1.9 -1.9 -1.9zM285.6 709.6h2.8v2.0h-2.8zM307.2 710.0h2.0v2.4h-2.0zM472.4 708.8l1.9 1.9 -1.9 1.9 -1.9 -1.9zM537.7 708.0l2.4 2.4 -2.4 2.4 -2.4 -2.4zM678.9 708.4l2.2 2.2 -2.2 2.2 -2.2 -2.2zM689.2 709.4h2.0v2.4h-2.0zM700.3 709.9h2.0v2.0h-2.0zM510.6 714.9l1.6 1.6 -1.6 1.6 -1.6 -1.6zM552.5 715.1h2.4v2.4h-2.4zM564.5 714.4l1.9 1.9 -1.9 1.9 -1.9 -1.9zM460.2 720.6h2.0v2.4h-2.0zM470.9 720.5h2.4v2.4h-2.4zM591.0 720.6h2.0v2.0h-2.0zM612.3 720.5h2.4v2.0h-2.4zM645.2 720.2h2.8v2.0h-2.8zM678.3 720.6h2.4v2.4h-2.4zM324.7 724.7l2.2 2.2 -2.2 2.2 -2.2 -2.2zM346.7 725.0l1.9 1.9 -1.9 1.9 -1.9 -1.9zM356.1 726.1h2.4v2.0h-2.4zM444.6 724.5l2.2 2.2 -2.2 2.2 -2.2 -2.2zM476.8 725.8h2.0v2.4h-2.0zM597.5 725.1l1.9 1.9 -1.9 1.9 -1.9 -1.9zM716.6 725.4h2.0v2.4h-2.0zM263.7 731.0h2.0v2.0h-2.0zM396.1 729.9l2.2 2.2 -2.2 2.2 -2.2 -2.2zM460.2 731.4h2.0v2.0h-2.0zM603.1 730.6l1.9 1.9 -1.9 1.9 -1.9 -1.9zM678.5 731.0h2.0v2.0h-2.0zM292.2 735.6l2.2 2.2 -2.2 2.2 -2.2 -2.2zM652.2 735.8l1.6 1.6 -1.6 1.6 -1.6 -1.6zM694.3 736.5h2.8v2.4h-2.8zM515.6 740.7l2.4 2.4 -2.4 2.4 -2.4 -2.4zM548.1 741.4l1.9 1.9 -1.9 1.9 -1.9 -1.9zM291.8 746.9l1.6 1.6 -1.6 1.6 -1.6 -1.6zM323.6 747.1h2.4v2.8h-2.4zM499.3 746.3l2.4 2.4 -2.4 2.4 -2.4 -2.4zM629.1 747.3h2.0v2.0h-2.0zM319.5 751.6l2.4 2.4 -2.4 2.4 -2.4 -2.4zM405.3 753.1h2.0v2.0h-2.0zM416.9 752.8h2.0v2.0h-2.0zM470.6 753.0h2.4v2.4h-2.4zM558.3 752.5h2.0v2.4h-2.0zM655.8 753.1h2.4v2.4h-2.4zM677.8 752.3h2.4v2.8h-2.4zM292.3 757.4l2.4 2.4 -2.4 2.4 -2.4 -2.4zM301.8 758.2h2.4v2.8h-2.4zM323.6 758.4h2.0v2.4h-2.0zM379.3 758.1l1.6 1.6 -1.6 1.6 -1.6 -1.6zM410.8 758.4h2.0v2.4h-2.0zM423.3 757.8l1.9 1.9 -1.9 1.9 -1.9 -1.9zM444.5 757.2l1.9 1.9 -1.9 1.9 -1.9 -1.9zM465.2 758.4h2.4v2.4h-2.4zM319.1 763.1l1.9 1.9 -1.9 1.9 -1.9 -1.9zM513.9 763.6h2.8v2.4h-2.8zM526.5 762.7l2.4 2.4 -2.4 2.4 -2.4 -2.4zM356.9 768.7h2.0v2.8h-2.0zM433.8 767.7l2.4 2.4 -2.4 2.4 -2.4 -2.4zM443.5 768.9h2.8v2.0h-2.8zM542.1 769.0h2.4v2.0h-2.4zM352.4 773.6l1.6 1.6 -1.6 1.6 -1.6 -1.6zM416.4 774.1h2.0v2.4h-2.0zM428.1 773.2l2.2 2.2 -2.2 2.2 -2.2 -2.2zM448.9 773.9h2.8v2.8h-2.8zM470.7 774.2h2.0v2.4h-2.0zM701.1 773.4l2.2 2.2 -2.2 2.2 -2.2 -2.2zM269.6 780.3h2.0v2.0h-2.0zM477.3 779.1l1.9 1.9 -1.9 1.9 -1.9 -1.9zM487.0 780.3h2.8v2.0h-2.8zM509.9 778.3l2.4 2.4 -2.4 2.4 -2.4 -2.4zM318.4 784.7h2.0v2.8h-2.0zM624.6 784.0l2.2 2.2 -2.2 2.2 -2.2 -2.2zM667.0 785.3h2.0v2.4h-2.0zM689.2 785.1h2.0v2.8h-2.0zM280.5 790.9h2.0v2.0h-2.0zM510.0 789.9l1.9 1.9 -1.9 1.9 -1.9 -1.9zM586.9 789.2l2.4 2.4 -2.4 2.4 -2.4 -2.4zM608.4 790.0l1.9 1.9 -1.9 1.9 -1.9 -1.9zM618.9 789.4l2.4 2.4 -2.4 2.4 -2.4 -2.4zM482.8 794.7l2.2 2.2 -2.2 2.2 -2.2 -2.2zM548.5 794.9l2.4 2.4 -2.4 2.4 -2.4 -2.4zM269.5 801.7h2.0v2.4h-2.0zM608.0 800.3l2.2 2.2 -2.2 2.2 -2.2 -2.2zM416.2 807.1h2.0v2.4h-2.0zM449.1 806.2h2.0v2.8h-2.0zM482.7 806.0l2.2 2.2 -2.2 2.2 -2.2 -2.2zM492.9 806.7h2.4v2.8h-2.4zM526.2 805.5l2.2 2.2 -2.2 2.2 -2.2 -2.2zM548.4 805.6l2.2 2.2 -2.2 2.2 -2.2 -2.2zM601.5 806.7h2.4v2.8h-2.4zM258.1 812.4h2.4v2.4h-2.4zM313.9 811.1l2.4 2.4 -2.4 2.4 -2.4 -2.4zM488.7 810.7l2.4 2.4 -2.4 2.4 -2.4 -2.4zM519.3 811.9h2.8v2.4h-2.8zM705.6 812.0h2.0v2.4h-2.0zM285.6 817.4h2.4v2.8h-2.4zM449.6 817.2h2.0v2.8h-2.0zM258.4 823.4h2.4v2.0h-2.4zM565.1 821.6l2.4 2.4 -2.4 2.4 -2.4 -2.4zM619.4 822.7l1.6 1.6 -1.6 1.6 -1.6 -1.6zM683.3 823.2h2.8v2.0h-2.8zM253.1 828.2h2.0v2.4h-2.0zM580.0 828.3h2.0v2.4h-2.0zM635.3 827.2l2.2 2.2 -2.2 2.2 -2.2 -2.2zM608.4 832.4l2.4 2.4 -2.4 2.4 -2.4 -2.4zM705.6 833.9h2.0v2.4h-2.0zM318.5 839.4h2.4v2.4h-2.4zM373.6 838.3l2.4 2.4 -2.4 2.4 -2.4 -2.4zM547.0 839.0h2.4v2.0h-2.4z" fill="#dcc8e6"/></g><rect x="442.3" y="548" width="2.2" height="295" fill="#9ab89c" opacity="0.55"/><rect x="427.8" y="547.5" width="14.5" height="294.5" fill="#e283a0"/><rect x="662.6" y="548" width="2.2" height="295" fill="#9ab89c" opacity="0.55"/><rect x="648.1" y="547.5" width="14.5" height="294.5" fill="#e283a0"/><path d="M270.0 633.8 L293.0 633.8" fill="none" stroke="#e2623c" stroke-width="1.1" stroke-linejoin="round"/><path d="M358.1 633.8 L402.5 633.8" fill="none" stroke="#e2623c" stroke-width="1.1" stroke-linejoin="round"/><path d="M468.4 633.8 L512.2 633.8" fill="none" stroke="#e2623c" stroke-width="1.1" stroke-linejoin="round"/><path d="M577.8 633.8 L710.4 633.8" fill="none" stroke="#e2623c" stroke-width="1.1" stroke-linejoin="round"/><path d="M293.0 633.8 L358.1 633.8" fill="none" stroke="#6cbf5c" stroke-width="1.1" stroke-linejoin="round"/><path d="M402.5 633.8 L468.4 633.8" fill="none" stroke="#6cbf5c" stroke-width="1.1" stroke-linejoin="round"/><path d="M512.2 633.8 L577.8 633.8" fill="none" stroke="#6cbf5c" stroke-width="1.1" stroke-linejoin="round"/><path d="M293.0 633.8 L293.0 625.1 L295.0 623.1 L303.4 593.9 L352.1 593.9 L354.3 629.8 L358.1 633.8" fill="none" stroke="#e2623c" stroke-width="1.1" stroke-linejoin="round"/><path d="M577.8 633.8 L577.8 625.1 L575.8 623.1 L567.4 593.9 L518.7 593.9 L516.5 629.8 L512.7 633.8" fill="none" stroke="#e2623c" stroke-width="1.1" stroke-linejoin="round"/><path d="M402.5 633.8 L402.5 568.3 A9.5 14.5 0 0 1 412.0 553.8 L458.9 553.8 A9.5 14.5 0 0 1 468.4 568.3 L468.4 633.8" fill="none" stroke="#e2623c" stroke-width="1.1"/><path d="M402.5 567.3 L413.5 567.3 L413.5 570.3" fill="none" stroke="#e2623c" stroke-width="1.1" stroke-linejoin="round"/><path d="M468.4 567.3 L457.4 567.3 L457.4 570.3" fill="none" stroke="#e2623c" stroke-width="1.1" stroke-linejoin="round"/><path d="M413.8 568.6 L457.1 568.6" fill="none" stroke="#6cbf5c" stroke-width="1.1" stroke-linejoin="round"/><path d="M270.0 676.5 L292.6 633.8" fill="none" stroke="#6cbf5c" stroke-width="1.1" stroke-linejoin="round"/><path d="M357.5 633.8 L380.1 676.5" fill="none" stroke="#6cbf5c" stroke-width="1.1" stroke-linejoin="round"/><path d="M380.1 676.5 L402.7 633.8" fill="none" stroke="#6cbf5c" stroke-width="1.1" stroke-linejoin="round"/><path d="M467.6 633.8 L490.2 676.5" fill="none" stroke="#6cbf5c" stroke-width="1.1" stroke-linejoin="round"/><path d="M490.2 676.5 L512.8 633.8" fill="none" stroke="#6cbf5c" stroke-width="1.1" stroke-linejoin="round"/><path d="M577.7 633.8 L600.3 676.5" fill="none" stroke="#6cbf5c" stroke-width="1.1" stroke-linejoin="round"/><path d="M600.3 676.5 L622.9 633.8" fill="none" stroke="#6cbf5c" stroke-width="1.1" stroke-linejoin="round"/><path d="M687.8 633.8 L710.4 676.5" fill="none" stroke="#6cbf5c" stroke-width="1.1" stroke-linejoin="round"/><path d="M270.0 633.8 L255.3 637.9 L255.3 646.4 L270.0 676.5" fill="none" stroke="#e2623c" stroke-width="1.1" stroke-linejoin="round"/><path d="M270.0 756.3 L293.0 756.3" fill="none" stroke="#e2623c" stroke-width="1.1" stroke-linejoin="round"/><path d="M358.1 756.3 L402.5 756.3" fill="none" stroke="#e2623c" stroke-width="1.1" stroke-linejoin="round"/><path d="M468.4 756.3 L512.2 756.3" fill="none" stroke="#e2623c" stroke-width="1.1" stroke-linejoin="round"/><path d="M577.8 756.3 L710.4 756.3" fill="none" stroke="#e2623c" stroke-width="1.1" stroke-linejoin="round"/><path d="M293.0 756.3 L358.1 756.3" fill="none" stroke="#6cbf5c" stroke-width="1.1" stroke-linejoin="round"/><path d="M402.5 756.3 L468.4 756.3" fill="none" stroke="#6cbf5c" stroke-width="1.1" stroke-linejoin="round"/><path d="M512.2 756.3 L577.8 756.3" fill="none" stroke="#6cbf5c" stroke-width="1.1" stroke-linejoin="round"/><path d="M293.0 756.3 L293.0 765.0 L295.0 767.0 L303.4 796.2 L352.1 796.2 L354.3 760.3 L358.1 756.3" fill="none" stroke="#e2623c" stroke-width="1.1" stroke-linejoin="round"/><path d="M577.8 756.3 L577.8 765.0 L575.8 767.0 L567.4 796.2 L518.7 796.2 L516.5 760.3 L512.7 756.3" fill="none" stroke="#e2623c" stroke-width="1.1" stroke-linejoin="round"/><path d="M402.5 756.3 L402.5 821.8 A9.5 14.5 0 0 0 412.0 836.3 L458.9 836.3 A9.5 14.5 0 0 0 468.4 821.8 L468.4 756.3" fill="none" stroke="#e2623c" stroke-width="1.1"/><path d="M402.5 822.8 L413.5 822.8 L413.5 819.8" fill="none" stroke="#e2623c" stroke-width="1.1" stroke-linejoin="round"/><path d="M468.4 822.8 L457.4 822.8 L457.4 819.8" fill="none" stroke="#e2623c" stroke-width="1.1" stroke-linejoin="round"/><path d="M413.8 821.5 L457.1 821.5" fill="none" stroke="#6cbf5c" stroke-width="1.1" stroke-linejoin="round"/><path d="M270.0 713.6 L292.6 756.3" fill="none" stroke="#6cbf5c" stroke-width="1.1" stroke-linejoin="round"/><path d="M357.5 756.3 L380.1 713.6" fill="none" stroke="#6cbf5c" stroke-width="1.1" stroke-linejoin="round"/><path d="M380.1 713.6 L402.7 756.3" fill="none" stroke="#6cbf5c" stroke-width="1.1" stroke-linejoin="round"/><path d="M467.6 756.3 L490.2 713.6" fill="none" stroke="#6cbf5c" stroke-width="1.1" stroke-linejoin="round"/><path d="M490.2 713.6 L512.8 756.3" fill="none" stroke="#6cbf5c" stroke-width="1.1" stroke-linejoin="round"/><path d="M577.7 756.3 L600.3 713.6" fill="none" stroke="#6cbf5c" stroke-width="1.1" stroke-linejoin="round"/><path d="M600.3 713.6 L622.9 756.3" fill="none" stroke="#6cbf5c" stroke-width="1.1" stroke-linejoin="round"/><path d="M687.8 756.3 L710.4 713.6" fill="none" stroke="#6cbf5c" stroke-width="1.1" stroke-linejoin="round"/><path d="M270.0 756.3 L255.3 752.2 L255.3 743.7 L270.0 713.6" fill="none" stroke="#e2623c" stroke-width="1.1" stroke-linejoin="round"/><path d="M270.0 633.8 L270.0 756.3" fill="none" stroke="#6cbf5c" stroke-width="1.1" stroke-linejoin="round"/><path d="M380.1 633.8 L380.1 756.3" fill="none" stroke="#6cbf5c" stroke-width="1.1" stroke-linejoin="round"/><path d="M490.2 633.8 L490.2 756.3" fill="none" stroke="#6cbf5c" stroke-width="1.1" stroke-linejoin="round"/><path d="M600.3 633.8 L600.3 756.3" fill="none" stroke="#6cbf5c" stroke-width="1.1" stroke-linejoin="round"/><path d="M710.4 633.8 L710.4 756.3" fill="none" stroke="#6cbf5c" stroke-width="1.1" stroke-linejoin="round"/><path d="M710.4 633.8 L710.4 756.3" fill="none" stroke="#e2623c" stroke-width="1.1" stroke-linejoin="round"/><path d="M270.0 676.5 L255.5 680.2 L255.5 709.4 L270.0 713.5" fill="none" stroke="#e2623c" stroke-width="1.1" stroke-linejoin="round"/><path d="M270.0 676.5 L710.4 676.5" fill="none" stroke="#2e8c84" stroke-width="1.1" stroke-linejoin="round"/><path d="M270.0 713.5 L710.4 713.5" fill="none" stroke="#2e8c84" stroke-width="1.1" stroke-linejoin="round"/><circle cx="323.9" cy="694.5" r="15.3" fill="#f0d8dc" opacity="0.8"/><circle cx="323.9" cy="694.5" r="14.5" fill="#d9263a"/><path d="M323.9 694.5 Q330.7 690.3 336.9 694.5 L336.6 697.6 Q330.3 693.1 323.9 694.5 Z" fill="#ffffff"/><path d="M323.9 694.5 Q331.9 695.1 334.5 702.2 L332.3 704.5 Q329.9 697.2 323.9 694.5 Z" fill="#ffffff"/><path d="M323.9 694.5 Q330.0 699.7 327.9 706.9 L324.9 707.5 Q327.2 700.1 323.9 694.5 Z" fill="#ffffff"/><path d="M323.9 694.5 Q325.8 702.3 319.9 706.9 L317.0 705.6 Q323.2 701.0 323.9 694.5 Z" fill="#ffffff"/><path d="M323.9 694.5 Q320.8 701.9 313.3 702.2 L311.8 699.4 Q319.5 699.4 323.9 694.5 Z" fill="#ffffff"/><path d="M323.9 694.5 Q317.1 698.7 310.8 694.5 L311.2 691.4 Q317.5 695.9 323.9 694.5 Z" fill="#ffffff"/><path d="M323.9 694.5 Q315.9 693.9 313.3 686.8 L315.5 684.5 Q317.9 691.8 323.9 694.5 Z" fill="#ffffff"/><path d="M323.9 694.5 Q317.8 689.3 319.9 682.1 L322.9 681.5 Q320.6 688.9 323.9 694.5 Z" fill="#ffffff"/><path d="M323.9 694.5 Q322.0 686.7 327.9 682.1 L330.8 683.4 Q324.6 688.0 323.9 694.5 Z" fill="#ffffff"/><path d="M323.9 694.5 Q327.0 687.1 334.5 686.8 L336.0 689.6 Q328.3 689.6 323.9 694.5 Z" fill="#ffffff"/><circle cx="323.9" cy="694.5" r="2.2" fill="#d9263a"/><circle cx="545" cy="694.5" r="15.3" fill="#f0d8dc" opacity="0.8"/><circle cx="545" cy="694.5" r="14.5" fill="#d9263a"/><path d="M545 694.5 Q551.8 690.3 558.0 694.5 L557.7 697.6 Q551.4 693.1 545 694.5 Z" fill="#ffffff"/><path d="M545 694.5 Q553.0 695.1 555.6 702.2 L553.4 704.5 Q551.0 697.2 545 694.5 Z" fill="#ffffff"/><path d="M545 694.5 Q551.1 699.7 549.0 706.9 L546.0 707.5 Q548.3 700.1 545 694.5 Z" fill="#ffffff"/><path d="M545 694.5 Q546.9 702.3 541.0 706.9 L538.1 705.6 Q544.3 701.0 545 694.5 Z" fill="#ffffff"/><path d="M545 694.5 Q541.9 701.9 534.4 702.2 L532.9 699.4 Q540.6 699.4 545 694.5 Z" fill="#ffffff"/><path d="M545 694.5 Q538.2 698.7 532.0 694.5 L532.3 691.4 Q538.6 695.9 545 694.5 Z" fill="#ffffff"/><path d="M545 694.5 Q537.0 693.9 534.4 686.8 L536.6 684.5 Q539.0 691.8 545 694.5 Z" fill="#ffffff"/><path d="M545 694.5 Q538.9 689.3 541.0 682.1 L544.0 681.5 Q541.7 688.9 545 694.5 Z" fill="#ffffff"/><path d="M545 694.5 Q543.1 686.7 549.0 682.1 L551.9 683.4 Q545.7 688.0 545 694.5 Z" fill="#ffffff"/><path d="M545 694.5 Q548.1 687.1 555.6 686.8 L557.1 689.6 Q549.4 689.6 545 694.5 Z" fill="#ffffff"/><circle cx="545" cy="694.5" r="2.2" fill="#d9263a"/><path d="M399.3 734.8 L404.3 750.8" stroke="#f4f4f4" stroke-width="1.6"/><path d="M399.3 734.8 L404.3 750.8" stroke="#9a9a9a" stroke-width="1.6" stroke-dasharray="1.2 1.2"/><path d="M413.1 731.7 L418.1 747.7" stroke="#f4f4f4" stroke-width="1.6"/><path d="M413.1 731.7 L418.1 747.7" stroke="#9a9a9a" stroke-width="1.6" stroke-dasharray="1.2 1.2"/><path d="M452.7 732.6 L447.7 748.6" stroke="#f4f4f4" stroke-width="1.6"/><path d="M452.7 732.6 L447.7 748.6" stroke="#9a9a9a" stroke-width="1.6" stroke-dasharray="1.2 1.2"/><path d="M468.3 735.7 L463.3 751.7" stroke="#f4f4f4" stroke-width="1.6"/><path d="M468.3 735.7 L463.3 751.7" stroke="#9a9a9a" stroke-width="1.6" stroke-dasharray="1.2 1.2"/><path d="M619.5 734.8 L624.5 750.8" stroke="#f4f4f4" stroke-width="1.6"/><path d="M619.5 734.8 L624.5 750.8" stroke="#9a9a9a" stroke-width="1.6" stroke-dasharray="1.2 1.2"/><path d="M633.3 731.7 L638.3 747.7" stroke="#f4f4f4" stroke-width="1.6"/><path d="M633.3 731.7 L638.3 747.7" stroke="#9a9a9a" stroke-width="1.6" stroke-dasharray="1.2 1.2"/><path d="M672.9 732.6 L667.9 748.6" stroke="#f4f4f4" stroke-width="1.6"/><path d="M672.9 732.6 L667.9 748.6" stroke="#9a9a9a" stroke-width="1.6" stroke-dasharray="1.2 1.2"/><path d="M688.5 735.7 L683.5 751.7" stroke="#f4f4f4" stroke-width="1.6"/><path d="M688.5 735.7 L683.5 751.7" stroke="#9a9a9a" stroke-width="1.6" stroke-dasharray="1.2 1.2"/><circle cx="397.3" cy="727.8" r="10.4" fill="#f0d8dc" opacity="0.8"/><circle cx="397.3" cy="727.8" r="9.6" fill="#d9263a"/><path d="M397.3 727.8 Q401.8 725.0 405.9 727.8 L405.7 729.9 Q401.5 726.9 397.3 727.8 Z" fill="#ffffff"/><path d="M397.3 727.8 Q402.6 728.2 404.3 732.9 L402.9 734.4 Q401.2 729.6 397.3 727.8 Z" fill="#ffffff"/><path d="M397.3 727.8 Q401.3 731.2 400.0 736.0 L397.9 736.4 Q399.5 731.5 397.3 727.8 Z" fill="#ffffff"/><path d="M397.3 727.8 Q398.5 732.9 394.6 736.0 L392.8 735.1 Q396.9 732.1 397.3 727.8 Z" fill="#ffffff"/><path d="M397.3 727.8 Q395.3 732.7 390.3 732.9 L389.3 731.1 Q394.4 731.0 397.3 727.8 Z" fill="#ffffff"/><path d="M397.3 727.8 Q392.8 730.6 388.7 727.8 L388.9 725.7 Q393.1 728.7 397.3 727.8 Z" fill="#ffffff"/><path d="M397.3 727.8 Q392.0 727.4 390.3 722.7 L391.7 721.2 Q393.4 726.0 397.3 727.8 Z" fill="#ffffff"/><path d="M397.3 727.8 Q393.3 724.4 394.6 719.6 L396.7 719.2 Q395.1 724.1 397.3 727.8 Z" fill="#ffffff"/><path d="M397.3 727.8 Q396.1 722.7 400.0 719.6 L401.8 720.5 Q397.7 723.5 397.3 727.8 Z" fill="#ffffff"/><path d="M397.3 727.8 Q399.3 722.9 404.3 722.7 L405.3 724.5 Q400.2 724.6 397.3 727.8 Z" fill="#ffffff"/><circle cx="397.3" cy="727.8" r="1.4" fill="#d9263a"/><circle cx="411.1" cy="724.7" r="10.4" fill="#f0d8dc" opacity="0.8"/><circle cx="411.1" cy="724.7" r="9.6" fill="#d9263a"/><path d="M411.1 724.7 Q415.6 721.9 419.7 724.7 L419.5 726.8 Q415.3 723.8 411.1 724.7 Z" fill="#ffffff"/><path d="M411.1 724.7 Q416.4 725.1 418.1 729.8 L416.7 731.3 Q415.0 726.5 411.1 724.7 Z" fill="#ffffff"/><path d="M411.1 724.7 Q415.1 728.1 413.8 732.9 L411.7 733.3 Q413.3 728.4 411.1 724.7 Z" fill="#ffffff"/><path d="M411.1 724.7 Q412.3 729.8 408.4 732.9 L406.6 732.0 Q410.7 729.0 411.1 724.7 Z" fill="#ffffff"/><path d="M411.1 724.7 Q409.1 729.6 404.1 729.8 L403.1 728.0 Q408.2 727.9 411.1 724.7 Z" fill="#ffffff"/><path d="M411.1 724.7 Q406.6 727.5 402.5 724.7 L402.7 722.6 Q406.9 725.6 411.1 724.7 Z" fill="#ffffff"/><path d="M411.1 724.7 Q405.8 724.3 404.1 719.6 L405.5 718.1 Q407.2 722.9 411.1 724.7 Z" fill="#ffffff"/><path d="M411.1 724.7 Q407.1 721.3 408.4 716.5 L410.5 716.1 Q408.9 721.0 411.1 724.7 Z" fill="#ffffff"/><path d="M411.1 724.7 Q409.9 719.6 413.8 716.5 L415.6 717.4 Q411.5 720.4 411.1 724.7 Z" fill="#ffffff"/><path d="M411.1 724.7 Q413.1 719.8 418.1 719.6 L419.1 721.4 Q414.0 721.5 411.1 724.7 Z" fill="#ffffff"/><circle cx="411.1" cy="724.7" r="1.4" fill="#d9263a"/><circle cx="454.7" cy="725.6" r="10.4" fill="#f0d8dc" opacity="0.8"/><circle cx="454.7" cy="725.6" r="9.6" fill="#d9263a"/><path d="M454.7 725.6 Q459.2 722.8 463.3 725.6 L463.1 727.7 Q458.9 724.7 454.7 725.6 Z" fill="#ffffff"/><path d="M454.7 725.6 Q460.0 726.0 461.7 730.7 L460.3 732.2 Q458.6 727.4 454.7 725.6 Z" fill="#ffffff"/><path d="M454.7 725.6 Q458.7 729.0 457.4 733.8 L455.3 734.2 Q456.9 729.3 454.7 725.6 Z" fill="#ffffff"/><path d="M454.7 725.6 Q455.9 730.7 452.0 733.8 L450.2 732.9 Q454.3 729.9 454.7 725.6 Z" fill="#ffffff"/><path d="M454.7 725.6 Q452.7 730.5 447.7 730.7 L446.7 728.9 Q451.8 728.8 454.7 725.6 Z" fill="#ffffff"/><path d="M454.7 725.6 Q450.2 728.4 446.1 725.6 L446.3 723.5 Q450.5 726.5 454.7 725.6 Z" fill="#ffffff"/><path d="M454.7 725.6 Q449.4 725.2 447.7 720.5 L449.1 719.0 Q450.8 723.8 454.7 725.6 Z" fill="#ffffff"/><path d="M454.7 725.6 Q450.7 722.2 452.0 717.4 L454.1 717.0 Q452.5 721.9 454.7 725.6 Z" fill="#ffffff"/><path d="M454.7 725.6 Q453.5 720.5 457.4 717.4 L459.2 718.3 Q455.1 721.3 454.7 725.6 Z" fill="#ffffff"/><path d="M454.7 725.6 Q456.7 720.7 461.7 720.5 L462.7 722.3 Q457.6 722.4 454.7 725.6 Z" fill="#ffffff"/><circle cx="454.7" cy="725.6" r="1.4" fill="#d9263a"/><circle cx="470.3" cy="728.7" r="10.4" fill="#f0d8dc" opacity="0.8"/><circle cx="470.3" cy="728.7" r="9.6" fill="#d9263a"/><path d="M470.3 728.7 Q474.8 725.9 478.9 728.7 L478.7 730.8 Q474.5 727.8 470.3 728.7 Z" fill="#ffffff"/><path d="M470.3 728.7 Q475.6 729.1 477.3 733.8 L475.9 735.3 Q474.2 730.5 470.3 728.7 Z" fill="#ffffff"/><path d="M470.3 728.7 Q474.3 732.1 473.0 736.9 L470.9 737.3 Q472.5 732.4 470.3 728.7 Z" fill="#ffffff"/><path d="M470.3 728.7 Q471.5 733.8 467.6 736.9 L465.8 736.0 Q469.9 733.0 470.3 728.7 Z" fill="#ffffff"/><path d="M470.3 728.7 Q468.3 733.6 463.3 733.8 L462.3 732.0 Q467.4 731.9 470.3 728.7 Z" fill="#ffffff"/><path d="M470.3 728.7 Q465.8 731.5 461.7 728.7 L461.9 726.6 Q466.1 729.6 470.3 728.7 Z" fill="#ffffff"/><path d="M470.3 728.7 Q465.0 728.3 463.3 723.6 L464.7 722.1 Q466.4 726.9 470.3 728.7 Z" fill="#ffffff"/><path d="M470.3 728.7 Q466.3 725.3 467.6 720.5 L469.7 720.1 Q468.1 725.0 470.3 728.7 Z" fill="#ffffff"/><path d="M470.3 728.7 Q469.1 723.6 473.0 720.5 L474.8 721.4 Q470.7 724.4 470.3 728.7 Z" fill="#ffffff"/><path d="M470.3 728.7 Q472.3 723.8 477.3 723.6 L478.3 725.4 Q473.2 725.5 470.3 728.7 Z" fill="#ffffff"/><circle cx="470.3" cy="728.7" r="1.4" fill="#d9263a"/><circle cx="617.5" cy="727.8" r="10.4" fill="#f0d8dc" opacity="0.8"/><circle cx="617.5" cy="727.8" r="9.6" fill="#d9263a"/><path d="M617.5 727.8 Q622.0 725.0 626.1 727.8 L625.9 729.9 Q621.7 726.9 617.5 727.8 Z" fill="#ffffff"/><path d="M617.5 727.8 Q622.8 728.2 624.5 732.9 L623.1 734.4 Q621.4 729.6 617.5 727.8 Z" fill="#ffffff"/><path d="M617.5 727.8 Q621.5 731.2 620.2 736.0 L618.1 736.4 Q619.7 731.5 617.5 727.8 Z" fill="#ffffff"/><path d="M617.5 727.8 Q618.7 732.9 614.8 736.0 L613.0 735.1 Q617.1 732.1 617.5 727.8 Z" fill="#ffffff"/><path d="M617.5 727.8 Q615.5 732.7 610.5 732.9 L609.5 731.1 Q614.6 731.0 617.5 727.8 Z" fill="#ffffff"/><path d="M617.5 727.8 Q613.0 730.6 608.9 727.8 L609.1 725.7 Q613.3 728.7 617.5 727.8 Z" fill="#ffffff"/><path d="M617.5 727.8 Q612.2 727.4 610.5 722.7 L611.9 721.2 Q613.6 726.0 617.5 727.8 Z" fill="#ffffff"/><path d="M617.5 727.8 Q613.5 724.4 614.8 719.6 L616.9 719.2 Q615.3 724.1 617.5 727.8 Z" fill="#ffffff"/><path d="M617.5 727.8 Q616.3 722.7 620.2 719.6 L622.0 720.5 Q617.9 723.5 617.5 727.8 Z" fill="#ffffff"/><path d="M617.5 727.8 Q619.5 722.9 624.5 722.7 L625.5 724.5 Q620.4 724.6 617.5 727.8 Z" fill="#ffffff"/><circle cx="617.5" cy="727.8" r="1.4" fill="#d9263a"/><circle cx="631.3" cy="724.7" r="10.4" fill="#f0d8dc" opacity="0.8"/><circle cx="631.3" cy="724.7" r="9.6" fill="#d9263a"/><path d="M631.3 724.7 Q635.8 721.9 639.9 724.7 L639.7 726.8 Q635.5 723.8 631.3 724.7 Z" fill="#ffffff"/><path d="M631.3 724.7 Q636.6 725.1 638.3 729.8 L636.9 731.3 Q635.2 726.5 631.3 724.7 Z" fill="#ffffff"/><path d="M631.3 724.7 Q635.3 728.1 634.0 732.9 L631.9 733.3 Q633.5 728.4 631.3 724.7 Z" fill="#ffffff"/><path d="M631.3 724.7 Q632.5 729.8 628.6 732.9 L626.8 732.0 Q630.9 729.0 631.3 724.7 Z" fill="#ffffff"/><path d="M631.3 724.7 Q629.3 729.6 624.3 729.8 L623.3 728.0 Q628.4 727.9 631.3 724.7 Z" fill="#ffffff"/><path d="M631.3 724.7 Q626.8 727.5 622.7 724.7 L622.9 722.6 Q627.1 725.6 631.3 724.7 Z" fill="#ffffff"/><path d="M631.3 724.7 Q626.0 724.3 624.3 719.6 L625.7 718.1 Q627.4 722.9 631.3 724.7 Z" fill="#ffffff"/><path d="M631.3 724.7 Q627.3 721.3 628.6 716.5 L630.7 716.1 Q629.1 721.0 631.3 724.7 Z" fill="#ffffff"/><path d="M631.3 724.7 Q630.1 719.6 634.0 716.5 L635.8 717.4 Q631.7 720.4 631.3 724.7 Z" fill="#ffffff"/><path d="M631.3 724.7 Q633.3 719.8 638.3 719.6 L639.3 721.4 Q634.2 721.5 631.3 724.7 Z" fill="#ffffff"/><circle cx="631.3" cy="724.7" r="1.4" fill="#d9263a"/><circle cx="674.9" cy="725.6" r="10.4" fill="#f0d8dc" opacity="0.8"/><circle cx="674.9" cy="725.6" r="9.6" fill="#d9263a"/><path d="M674.9 725.6 Q679.4 722.8 683.5 725.6 L683.3 727.7 Q679.1 724.7 674.9 725.6 Z" fill="#ffffff"/><path d="M674.9 725.6 Q680.2 726.0 681.9 730.7 L680.5 732.2 Q678.8 727.4 674.9 725.6 Z" fill="#ffffff"/><path d="M674.9 725.6 Q678.9 729.0 677.6 733.8 L675.5 734.2 Q677.1 729.3 674.9 725.6 Z" fill="#ffffff"/><path d="M674.9 725.6 Q676.1 730.7 672.2 733.8 L670.4 732.9 Q674.5 729.9 674.9 725.6 Z" fill="#ffffff"/><path d="M674.9 725.6 Q672.9 730.5 667.9 730.7 L666.9 728.9 Q672.0 728.8 674.9 725.6 Z" fill="#ffffff"/><path d="M674.9 725.6 Q670.4 728.4 666.3 725.6 L666.5 723.5 Q670.7 726.5 674.9 725.6 Z" fill="#ffffff"/><path d="M674.9 725.6 Q669.6 725.2 667.9 720.5 L669.3 719.0 Q671.0 723.8 674.9 725.6 Z" fill="#ffffff"/><path d="M674.9 725.6 Q670.9 722.2 672.2 717.4 L674.3 717.0 Q672.7 721.9 674.9 725.6 Z" fill="#ffffff"/><path d="M674.9 725.6 Q673.7 720.5 677.6 717.4 L679.4 718.3 Q675.3 721.3 674.9 725.6 Z" fill="#ffffff"/><path d="M674.9 725.6 Q676.9 720.7 681.9 720.5 L682.9 722.3 Q677.8 722.4 674.9 725.6 Z" fill="#ffffff"/><circle cx="674.9" cy="725.6" r="1.4" fill="#d9263a"/><circle cx="690.5" cy="728.7" r="10.4" fill="#f0d8dc" opacity="0.8"/><circle cx="690.5" cy="728.7" r="9.6" fill="#d9263a"/><path d="M690.5 728.7 Q695.0 725.9 699.1 728.7 L698.9 730.8 Q694.7 727.8 690.5 728.7 Z" fill="#ffffff"/><path d="M690.5 728.7 Q695.8 729.1 697.5 733.8 L696.1 735.3 Q694.4 730.5 690.5 728.7 Z" fill="#ffffff"/><path d="M690.5 728.7 Q694.5 732.1 693.2 736.9 L691.1 737.3 Q692.7 732.4 690.5 728.7 Z" fill="#ffffff"/><path d="M690.5 728.7 Q691.7 733.8 687.8 736.9 L686.0 736.0 Q690.1 733.0 690.5 728.7 Z" fill="#ffffff"/><path d="M690.5 728.7 Q688.5 733.6 683.5 733.8 L682.5 732.0 Q687.6 731.9 690.5 728.7 Z" fill="#ffffff"/><path d="M690.5 728.7 Q686.0 731.5 681.9 728.7 L682.1 726.6 Q686.3 729.6 690.5 728.7 Z" fill="#ffffff"/><path d="M690.5 728.7 Q685.2 728.3 683.5 723.6 L684.9 722.1 Q686.6 726.9 690.5 728.7 Z" fill="#ffffff"/><path d="M690.5 728.7 Q686.5 725.3 687.8 720.5 L689.9 720.1 Q688.3 725.0 690.5 728.7 Z" fill="#ffffff"/><path d="M690.5 728.7 Q689.3 723.6 693.2 720.5 L695.0 721.4 Q690.9 724.4 690.5 728.7 Z" fill="#ffffff"/><path d="M690.5 728.7 Q692.5 723.8 697.5 723.6 L698.5 725.4 Q693.4 725.5 690.5 728.7 Z" fill="#ffffff"/><circle cx="690.5" cy="728.7" r="1.4" fill="#d9263a"/><circle cx="441.9" cy="699.8" r="8" fill="#fbeef2"/><circle cx="434.5" cy="704.0" r="8" fill="#fbeef2"/><circle cx="427.1" cy="699.8" r="8" fill="#fbeef2"/><circle cx="427.1" cy="691.2" r="8" fill="#fbeef2"/><circle cx="434.5" cy="687.0" r="8" fill="#fbeef2"/><circle cx="441.9" cy="691.2" r="8" fill="#fbeef2"/><circle cx="441.9" cy="699.8" r="7" fill="#eeb6c8"/><circle cx="434.5" cy="704.0" r="7" fill="#eeb6c8"/><circle cx="427.1" cy="699.8" r="7" fill="#eeb6c8"/><circle cx="427.1" cy="691.2" r="7" fill="#eeb6c8"/><circle cx="434.5" cy="687.0" r="7" fill="#eeb6c8"/><circle cx="441.9" cy="691.2" r="7" fill="#eeb6c8"/><circle cx="434.5" cy="695.5" r="12" fill="#eeb6c8"/><circle cx="434.5" cy="695.5" r="11" fill="#6a2a22"/><circle cx="434.5" cy="695.5" r="9.5" fill="#7c3a2e"/><text x="434.5" y="696.0" font-size="4.2" font-weight="bold" fill="#f4e8e4" text-anchor="middle" font-family="Liberation Sans">SWEET</text><text x="434.5" y="701.0" font-size="4.2" font-weight="bold" fill="#f4e8e4" text-anchor="middle" font-family="Liberation Sans">DESSERT</text><circle cx="662.9" cy="699.8" r="8" fill="#fbeef2"/><circle cx="655.5" cy="704.0" r="8" fill="#fbeef2"/><circle cx="648.1" cy="699.8" r="8" fill="#fbeef2"/><circle cx="648.1" cy="691.2" r="8" fill="#fbeef2"/><circle cx="655.5" cy="687.0" r="8" fill="#fbeef2"/><circle cx="662.9" cy="691.2" r="8" fill="#fbeef2"/><circle cx="662.9" cy="699.8" r="7" fill="#eeb6c8"/><circle cx="655.5" cy="704.0" r="7" fill="#eeb6c8"/><circle cx="648.1" cy="699.8" r="7" fill="#eeb6c8"/><circle cx="648.1" cy="691.2" r="7" fill="#eeb6c8"/><circle cx="655.5" cy="687.0" r="7" fill="#eeb6c8"/><circle cx="662.9" cy="691.2" r="7" fill="#eeb6c8"/><circle cx="655.5" cy="695.5" r="12" fill="#eeb6c8"/><circle cx="655.5" cy="695.5" r="11" fill="#6a2a22"/><circle cx="655.5" cy="695.5" r="9.5" fill="#7c3a2e"/><text x="655.5" y="696.0" font-size="4.2" font-weight="bold" fill="#f4e8e4" text-anchor="middle" font-family="Liberation Sans">SWEET</text><text x="655.5" y="701.0" font-size="4.2" font-weight="bold" fill="#f4e8e4" text-anchor="middle" font-family="Liberation Sans">DESSERT</text></svg>
<div class="a" style="left:943px;top:68px;width:653px;height:13px;background:#454545;"></div>
<div class="a" style="left:943px;top:80px;width:653px;height:1px;background:#3c3c3c;"></div>
<svg class="a" style="left:1202px;top:71px;" width="9" height="7" viewBox="0 0 9 7"><path d="M0.5 0.5 L4 3.5 L0.5 6.5 Z M5 0.5 L8.5 3.5 L5 6.5 Z" fill="#d0d0d0"/></svg>
<svg class="a" style="left:1581px;top:71px;" width="9" height="7" viewBox="0 0 9 7"><path d="M0.5 0.5 L4 3.5 L0.5 6.5 Z M5 0.5 L8.5 3.5 L5 6.5 Z" fill="#d0d0d0"/></svg>
<div class="a" style="left:1216px;top:81px;width:3px;height:813px;background:#3a3a3a;"></div>
<div class="a" style="left:1595px;top:68px;width:1px;height:826px;background:#3a3a3a;"></div>
<div class="a" style="left:943px;top:81px;width:273px;height:269px;background:#535353;"></div>
<div class="a" style="left:1007px;top:81px;width:209px;height:26px;background:#424242;"></div>
<div class="t" style="left:952.3px;top:89.39px;font-size:9.7px;color:#ececec;font-weight:bold;">Artboards</div>
<svg class="a" style="left:1200px;top:91px;" width="11" height="7" viewBox="0 0 11 7"><path d="M0 0.5 H11 M0 2.5 H11 M0 4.5 H11 M0 6.5 H11" stroke="#cfcfcf" stroke-width="1"/></svg>
<div class="a" style="left:948px;top:114px;width:263px;height:216px;border:1px solid #5f5f5f;box-sizing:border-box;border-radius:3px;"></div>
<div class="a" style="left:949px;top:133px;width:261px;height:1px;background:#5f5f5f;"></div>
<div class="a" style="left:949px;top:133.5px;width:261px;height:18.5px;background:#4b6079;"></div>
<div class="a" style="left:949px;top:153px;width:261px;height:1px;background:#5f5f5f;"></div>
<div class="a" style="left:979px;top:115px;width:1px;height:38px;background:#5f5f5f;"></div>
<div class="a" style="left:1169px;top:115px;width:1px;height:38px;background:#5f5f5f;"></div>
<div class="t" style="left:954.6px;top:118.57px;font-size:11.5px;color:#ececec;">1</div>
<div class="t" style="left:954.6px;top:138.27px;font-size:11.5px;color:#ececec;">2</div>
<div class="t" style="left:985px;top:119.75px;font-size:9.75px;color:#dcdcdc;">EVF12062.front.Pink Candies</div>
<div class="t" style="left:985px;top:139.05px;font-size:9.75px;color:#dcdcdc;">EVF12062.front.Yellow Candies</div>
<svg class="a" style="left:1176px;top:117px;" width="14" height="12" viewBox="0 0 14 12"><path d="M2 0 V4 M0 2 H4" stroke="#d0d0d0" stroke-width="1"/><path d="M3.5 3.5 H9 L12.5 7 V11.5 H3.5 Z" fill="none" stroke="#d0d0d0" stroke-width="1.2"/></svg>
<svg class="a" style="left:1176px;top:136px;" width="14" height="12" viewBox="0 0 14 12"><path d="M2 0 V4 M0 2 H4" stroke="#d0d0d0" stroke-width="1"/><path d="M3.5 3.5 H9 L12.5 7 V11.5 H3.5 Z" fill="none" stroke="#d0d0d0" stroke-width="1.2"/></svg>
<div class="a" style="left:933px;top:129px;width:289px;height:31px;border:1px solid #f0923a;box-sizing:border-box;border-width:2px;z-index:10;"></div>
<div class="t" style="left:948px;top:336.12px;font-size:10.25px;color:#dcdcdc;">2 Artboa...</div>
<svg class="a" style="left:1098px;top:334px;" width="12" height="12" viewBox="0 0 12 12"><path d="M6 0 L12 6 H8.5 V12 H3.5 V6 H0 Z" fill="#d0d0d0"/></svg>
<svg class="a" style="left:1125px;top:334px;" width="12" height="12" viewBox="0 0 12 12"><path d="M6 12 L12 6 H8.5 V0 H3.5 V6 H0 Z" fill="#6e6e6e"/></svg>
<svg class="a" style="left:1151px;top:334px;" width="11" height="12" viewBox="0 0 11 12"><path d="M0 0 H11 V11 H4 V7 H0 Z" fill="#d0d0d0"/><path d="M0.3 7.6 H3.4 V10.7 Z" fill="#d0d0d0"/></svg>
<svg class="a" style="left:1177px;top:333px;" width="11" height="13" viewBox="0 0 11 13"><path d="M0.5 3 H10.5 M3.5 3 V1 H7.5 V3" stroke="#d0d0d0" stroke-width="1.2" fill="none"/><path d="M1.5 4 H9.5 L9 12 H2 Z" fill="none" stroke="#d0d0d0" stroke-width="1.2"/><path d="M4 5.5 V10.5 M5.5 5.5 V10.5 M7 5.5 V10.5" stroke="#d0d0d0" stroke-width="0.9"/></svg>
<div class="a" style="left:943px;top:350px;width:273px;height:3px;background:#3a3a3a;"></div>
<div class="a" style="left:943px;top:353px;width:273px;height:269px;background:#535353;"></div>
<div class="a" style="left:989px;top:353px;width:227px;height:27px;background:#424242;"></div>
<div class="t" style="left:952.3px;top:362.43px;font-size:9.3px;color:#ececec;font-weight:bold;">Layers</div>
<svg class="a" style="left:1200px;top:363px;" width="11" height="7" viewBox="0 0 11 7"><path d="M0 0.5 H11 M0 2.5 H11 M0 4.5 H11 M0 6.5 H11" stroke="#cfcfcf" stroke-width="1"/></svg>
<div class="a" style="left:948px;top:386px;width:263px;height:216px;border:1px solid #5f5f5f;box-sizing:border-box;border-radius:3px;"></div>
<div class="a" style="left:949px;top:407.0px;width:261px;height:1px;background:#5f5f5f;"></div>
<div class="a" style="left:969px;top:386.5px;width:1px;height:21px;background:#5f5f5f;"></div>
<div class="a" style="left:990px;top:386.5px;width:1px;height:21px;background:#5f5f5f;"></div>
<div class="a" style="left:1174px;top:386.5px;width:1px;height:21px;background:#5f5f5f;"></div>
<div class="a" style="left:992px;top:388.5px;width:3.5px;height:17px;background:#f04848;"></div>
<svg class="a" style="left:952px;top:392.5px;" width="14" height="9" viewBox="0 0 14 9"><path d="M0.5 4.5 C3 0.5 11 0.5 13.5 4.5 C11 8.5 3 8.5 0.5 4.5 Z" fill="#cfcfcf"/><circle cx="7" cy="4.5" r="2.3" fill="#535353"/><circle cx="7" cy="4.5" r="1.2" fill="#cfcfcf"/></svg>
<svg class="a" style="left:975px;top:390.5px;" width="9" height="12" viewBox="0 0 9 12"><path d="M2 5.5 V3.5 A2.5 2.5 0 0 1 7 3.5 V5.5" fill="none" stroke="#cfcfcf" stroke-width="1.4"/><rect x="0.5" y="5.5" width="8" height="6" fill="#cfcfcf"/><rect x="4" y="7.5" width="1.2" height="2.5" fill="#535353"/></svg>
<svg class="a" style="left:1002px;top:394.5px;" width="10" height="6" viewBox="0 0 10 6"><path d="M1 1 L5 5 L9 1" stroke="#e0e0e0" stroke-width="1.4" fill="none"/></svg>
<div class="a" style="left:1021px;top:388.5px;width:18px;height:17px;background:#111111;"></div>
<div class="a" style="left:1022px;top:389.5px;width:16px;height:15px;background:#ffffff;"></div>
<svg class="a" style="left:1022px;top:389.5px;" width="16" height="15" viewBox="0 0 16 15"><rect x="1" y="6" width="14" height="3.5" fill="#a8d8e0"/><path d="M1 5 H15 V10.5 H1 Z M5 5 V2 H11 V5 M5 10.5 V13 H11 V10.5" fill="none" stroke="#e8806a" stroke-width="0.8"/><path d="M4 5.5 V10 M8 5.5 V10 M12 5.5 V10" stroke="#70c070" stroke-width="0.8"/></svg>
<div class="t" style="left:1043.7px;top:393.25px;font-size:9.75px;color:#dcdcdc;">EVDrawing</div>
<svg class="a" style="left:1179px;top:391.5px;" width="11" height="11" viewBox="0 0 11 11"><circle cx="5.5" cy="5.5" r="4.6" fill="none" stroke="#d8d8d8" stroke-width="1.1"/></svg>
<div class="a" style="left:949px;top:428.0px;width:261px;height:1px;background:#5f5f5f;"></div>
<div class="a" style="left:969px;top:407.5px;width:1px;height:21px;background:#5f5f5f;"></div>
<div class="a" style="left:990px;top:407.5px;width:1px;height:21px;background:#5f5f5f;"></div>
<div class="a" style="left:1174px;top:407.5px;width:1px;height:21px;background:#5f5f5f;"></div>
<div class="a" style="left:992px;top:409.5px;width:3.5px;height:17px;background:#48e048;"></div>
<svg class="a" style="left:975px;top:411.5px;" width="9" height="12" viewBox="0 0 9 12"><path d="M2 5.5 V3.5 A2.5 2.5 0 0 1 7 3.5 V5.5" fill="none" stroke="#737373" stroke-width="1.4"/><rect x="0.5" y="5.5" width="8" height="6" fill="#737373"/><rect x="4" y="7.5" width="1.2" height="2.5" fill="#535353"/></svg>
<svg class="a" style="left:1025.6px;top:415.5px;" width="10" height="6" viewBox="0 0 10 6"><path d="M1 1 L5 5 L9 1" stroke="#e0e0e0" stroke-width="1.4" fill="none"/></svg>
<div class="a" style="left:1044px;top:409.5px;width:18px;height:17px;background:#111111;"></div>
<div class="a" style="left:1045px;top:410.5px;width:16px;height:15px;background:#ffffff;"></div>
<svg class="a" style="left:1045px;top:410.5px;" width="16" height="15" viewBox="0 0 16 15"><path d="M2 7 H14 M5 5 V9 M11 5 V9" stroke="#7a3a9a" stroke-width="0.8"/><rect x="9" y="3" width="3" height="2" fill="#7a3a9a"/><rect x="3" y="10" width="2" height="2" fill="#7a3a9a"/></svg>
<div class="t" style="left:1067px;top:414.25px;font-size:9.75px;color:#dcdcdc;">[Dimension Li...</div>
<svg class="a" style="left:1179px;top:412.5px;" width="11" height="11" viewBox="0 0 11 11"><circle cx="5.5" cy="5.5" r="4.6" fill="none" stroke="#d8d8d8" stroke-width="1.1"/></svg>
<div class="a" style="left:949px;top:449.0px;width:261px;height:1px;background:#5f5f5f;"></div>
<div class="a" style="left:969px;top:428.5px;width:1px;height:21px;background:#5f5f5f;"></div>
<div class="a" style="left:990px;top:428.5px;width:1px;height:21px;background:#5f5f5f;"></div>
<div class="a" style="left:1174px;top:428.5px;width:1px;height:21px;background:#5f5f5f;"></div>
<div class="a" style="left:992px;top:430.5px;width:3.5px;height:17px;background:#e048e0;"></div>
<svg class="a" style="left:952px;top:434.5px;" width="14" height="9" viewBox="0 0 14 9"><path d="M0.5 4.5 C3 0.5 11 0.5 13.5 4.5 C11 8.5 3 8.5 0.5 4.5 Z" fill="#777777"/><circle cx="7" cy="4.5" r="2.3" fill="#535353"/><circle cx="7" cy="4.5" r="1.2" fill="#777777"/></svg>
<svg class="a" style="left:975px;top:432.5px;" width="9" height="12" viewBox="0 0 9 12"><path d="M2 5.5 V3.5 A2.5 2.5 0 0 1 7 3.5 V5.5" fill="none" stroke="#737373" stroke-width="1.4"/><rect x="0.5" y="5.5" width="8" height="6" fill="#737373"/><rect x="4" y="7.5" width="1.2" height="2.5" fill="#535353"/></svg>
<svg class="a" style="left:1048px;top:434.5px;" width="6" height="10" viewBox="0 0 6 10"><path d="M1 1 L5 5 L1 9" stroke="#e0e0e0" stroke-width="1.4" fill="none"/></svg>
<div class="a" style="left:1067px;top:430.5px;width:18px;height:17px;background:#111111;"></div>
<div class="a" style="left:1068px;top:431.5px;width:16px;height:15px;background:#ffffff;"></div>
<svg class="a" style="left:1068px;top:431.5px;" width="16" height="15" viewBox="0 0 16 15"><path d="M2 7 H14 M5 5 V9 M11 5 V9" stroke="#7a3a9a" stroke-width="0.8"/><rect x="9" y="3" width="3" height="2" fill="#7a3a9a"/><rect x="3" y="10" width="2" height="2" fill="#7a3a9a"/></svg>
<div class="t" style="left:1090px;top:435.25px;font-size:9.75px;color:#dcdcdc;">1 EVF120...</div>
<svg class="a" style="left:1179px;top:433.5px;" width="11" height="11" viewBox="0 0 11 11"><circle cx="5.5" cy="5.5" r="4.6" fill="none" stroke="#d8d8d8" stroke-width="1.1"/></svg>
<div class="a" style="left:949px;top:470.0px;width:261px;height:1px;background:#5f5f5f;"></div>
<div class="a" style="left:969px;top:449.5px;width:1px;height:21px;background:#5f5f5f;"></div>
<div class="a" style="left:990px;top:449.5px;width:1px;height:21px;background:#5f5f5f;"></div>
<div class="a" style="left:1174px;top:449.5px;width:1px;height:21px;background:#5f5f5f;"></div>
<div class="a" style="left:992px;top:451.5px;width:3.5px;height:17px;background:#808080;"></div>
<svg class="a" style="left:952px;top:455.5px;" width="14" height="9" viewBox="0 0 14 9"><path d="M0.5 4.5 C3 0.5 11 0.5 13.5 4.5 C11 8.5 3 8.5 0.5 4.5 Z" fill="#777777"/><circle cx="7" cy="4.5" r="2.3" fill="#535353"/><circle cx="7" cy="4.5" r="1.2" fill="#777777"/></svg>
<svg class="a" style="left:975px;top:453.5px;" width="9" height="12" viewBox="0 0 9 12"><path d="M2 5.5 V3.5 A2.5 2.5 0 0 1 7 3.5 V5.5" fill="none" stroke="#737373" stroke-width="1.4"/><rect x="0.5" y="5.5" width="8" height="6" fill="#737373"/><rect x="4" y="7.5" width="1.2" height="2.5" fill="#535353"/></svg>
<svg class="a" style="left:1048px;top:455.5px;" width="6" height="10" viewBox="0 0 6 10"><path d="M1 1 L5 5 L1 9" stroke="#e0e0e0" stroke-width="1.4" fill="none"/></svg>
<div class="a" style="left:1067px;top:451.5px;width:18px;height:17px;background:#111111;"></div>
<div class="a" style="left:1068px;top:452.5px;width:16px;height:15px;background:#ffffff;"></div>
<svg class="a" style="left:1068px;top:452.5px;" width="16" height="15" viewBox="0 0 16 15"><path d="M2 7 H14 M5 5 V9 M11 5 V9" stroke="#7a3a9a" stroke-width="0.8"/><rect x="9" y="3" width="3" height="2" fill="#7a3a9a"/><rect x="3" y="10" width="2" height="2" fill="#7a3a9a"/></svg>
<div class="t" style="left:1090px;top:456.25px;font-size:9.75px;color:#dcdcdc;">1 EVF120...</div>
<svg class="a" style="left:1179px;top:454.5px;" width="11" height="11" viewBox="0 0 11 11"><circle cx="5.5" cy="5.5" r="4.6" fill="none" stroke="#d8d8d8" stroke-width="1.1"/></svg>
<div class="a" style="left:949px;top:491.0px;width:261px;height:1px;background:#5f5f5f;"></div>
<div class="a" style="left:969px;top:470.5px;width:1px;height:21px;background:#5f5f5f;"></div>
<div class="a" style="left:990px;top:470.5px;width:1px;height:21px;background:#5f5f5f;"></div>
<div class="a" style="left:1174px;top:470.5px;width:1px;height:21px;background:#5f5f5f;"></div>
<div class="a" style="left:992px;top:472.5px;width:3.5px;height:17px;background:#4848e0;"></div>
<svg class="a" style="left:952px;top:476.5px;" width="14" height="9" viewBox="0 0 14 9"><path d="M0.5 4.5 C3 0.5 11 0.5 13.5 4.5 C11 8.5 3 8.5 0.5 4.5 Z" fill="#cfcfcf"/><circle cx="7" cy="4.5" r="2.3" fill="#535353"/><circle cx="7" cy="4.5" r="1.2" fill="#cfcfcf"/></svg>
<svg class="a" style="left:975px;top:474.5px;" width="9" height="12" viewBox="0 0 9 12"><path d="M2 5.5 V3.5 A2.5 2.5 0 0 1 7 3.5 V5.5" fill="none" stroke="#737373" stroke-width="1.4"/><rect x="0.5" y="5.5" width="8" height="6" fill="#737373"/><rect x="4" y="7.5" width="1.2" height="2.5" fill="#535353"/></svg>
<svg class="a" style="left:1025px;top:476.5px;" width="6" height="10" viewBox="0 0 6 10"><path d="M1 1 L5 5 L1 9" stroke="#e0e0e0" stroke-width="1.4" fill="none"/></svg>
<div class="a" style="left:1044px;top:472.5px;width:18px;height:17px;background:#111111;"></div>
<div class="a" style="left:1045px;top:473.5px;width:16px;height:15px;background:#ffffff;"></div>
<svg class="a" style="left:1045px;top:473.5px;" width="16" height="15" viewBox="0 0 16 15"><rect x="1" y="6" width="14" height="3.5" fill="#a8d8e0"/><path d="M1 5 H15 V10.5 H1 Z M5 5 V2 H11 V5 M5 10.5 V13 H11 V10.5" fill="none" stroke="#e8806a" stroke-width="0.8"/><path d="M4 5.5 V10 M8 5.5 V10 M12 5.5 V10" stroke="#70c070" stroke-width="0.8"/></svg>
<div class="t" style="left:1067px;top:477.25px;font-size:9.75px;color:#dcdcdc;">1 EVF12062.Pi...</div>
<svg class="a" style="left:1179px;top:475.5px;" width="11" height="11" viewBox="0 0 11 11"><circle cx="5.5" cy="5.5" r="4.6" fill="none" stroke="#d8d8d8" stroke-width="1.1"/></svg>
<div class="a" style="left:949px;top:512.0px;width:261px;height:1px;background:#5f5f5f;"></div>
<div class="a" style="left:969px;top:491.5px;width:1px;height:21px;background:#5f5f5f;"></div>
<div class="a" style="left:990px;top:491.5px;width:1px;height:21px;background:#5f5f5f;"></div>
<div class="a" style="left:1174px;top:491.5px;width:1px;height:21px;background:#5f5f5f;"></div>
<div class="a" style="left:992px;top:493.5px;width:3.5px;height:17px;background:#48e0e0;"></div>
<svg class="a" style="left:952px;top:496.5px;" width="13" height="11" viewBox="0 0 13 11"><rect x="0.5" y="0.5" width="12" height="10" fill="none" stroke="#cfcfcf" stroke-width="1"/><rect x="2.5" y="2.5" width="8" height="6" fill="#cfcfcf"/></svg>
<svg class="a" style="left:975px;top:495.5px;" width="9" height="12" viewBox="0 0 9 12"><path d="M2 5.5 V3.5 A2.5 2.5 0 0 1 7 3.5 V5.5" fill="none" stroke="#737373" stroke-width="1.4"/><rect x="0.5" y="5.5" width="8" height="6" fill="#737373"/><rect x="4" y="7.5" width="1.2" height="2.5" fill="#535353"/></svg>
<div class="a" style="left:1044px;top:493.5px;width:18px;height:17px;background:#111111;"></div>
<div class="a" style="left:1045px;top:494.5px;width:16px;height:15px;background:#ffffff;"></div>
<div class="t" style="left:1067px;top:498.25px;font-size:9.75px;color:#dcdcdc;font-style:italic;">PanelSelection</div>
<svg class="a" style="left:1179px;top:496.5px;" width="11" height="11" viewBox="0 0 11 11"><circle cx="5.5" cy="5.5" r="4.6" fill="none" stroke="#d8d8d8" stroke-width="1.1"/></svg>
<div class="a" style="left:949px;top:533.0px;width:261px;height:1px;background:#5f5f5f;"></div>
<div class="a" style="left:969px;top:512.5px;width:1px;height:21px;background:#5f5f5f;"></div>
<div class="a" style="left:990px;top:512.5px;width:1px;height:21px;background:#5f5f5f;"></div>
<div class="a" style="left:1174px;top:512.5px;width:1px;height:21px;background:#5f5f5f;"></div>
<div class="a" style="left:992px;top:514.5px;width:3.5px;height:17px;background:#e8e048;"></div>
<svg class="a" style="left:952px;top:518.5px;" width="14" height="9" viewBox="0 0 14 9"><path d="M0.5 4.5 C3 0.5 11 0.5 13.5 4.5 C11 8.5 3 8.5 0.5 4.5 Z" fill="#cfcfcf"/><circle cx="7" cy="4.5" r="2.3" fill="#535353"/><circle cx="7" cy="4.5" r="1.2" fill="#cfcfcf"/></svg>
<svg class="a" style="left:975px;top:516.5px;" width="9" height="12" viewBox="0 0 9 12"><path d="M2 5.5 V3.5 A2.5 2.5 0 0 1 7 3.5 V5.5" fill="none" stroke="#737373" stroke-width="1.4"/><rect x="0.5" y="5.5" width="8" height="6" fill="#737373"/><rect x="4" y="7.5" width="1.2" height="2.5" fill="#535353"/></svg>
<svg class="a" style="left:1025px;top:518.5px;" width="6" height="10" viewBox="0 0 6 10"><path d="M1 1 L5 5 L1 9" stroke="#e0e0e0" stroke-width="1.4" fill="none"/></svg>
<div class="a" style="left:1044px;top:514.5px;width:18px;height:17px;background:#111111;"></div>
<div class="a" style="left:1045px;top:515.5px;width:16px;height:15px;background:#ffffff;"></div>
<svg class="a" style="left:1045px;top:515.5px;" width="16" height="15" viewBox="0 0 16 15"><rect x="1" y="6" width="14" height="3.5" fill="#a8d8e0"/><path d="M1 5 H15 V10.5 H1 Z M5 5 V2 H11 V5 M5 10.5 V13 H11 V10.5" fill="none" stroke="#e8806a" stroke-width="0.8"/><path d="M4 5.5 V10 M8 5.5 V10 M12 5.5 V10" stroke="#70c070" stroke-width="0.8"/></svg>
<div class="t" style="left:1067px;top:519.25px;font-size:9.75px;color:#dcdcdc;">1 EVF12062.Yel...</div>
<svg class="a" style="left:1179px;top:517.5px;" width="11" height="11" viewBox="0 0 11 11"><circle cx="5.5" cy="5.5" r="4.6" fill="none" stroke="#d8d8d8" stroke-width="1.1"/></svg>
<div class="a" style="left:949px;top:533.5px;width:261px;height:21px;background:#4b6079;"></div>
<svg class="a" style="left:1203px;top:533.5px;" width="7" height="7" viewBox="0 0 7 7"><path d="M0 0 H7 V7 Z" fill="#d8d8d8"/></svg>
<div class="a" style="left:969px;top:533.5px;width:1px;height:21px;background:#5f5f5f;"></div>
<div class="a" style="left:990px;top:533.5px;width:1px;height:21px;background:#5f5f5f;"></div>
<div class="a" style="left:1174px;top:533.5px;width:1px;height:21px;background:#5f5f5f;"></div>
<div class="a" style="left:992px;top:535.5px;width:3.5px;height:17px;background:#4870e8;"></div>
<svg class="a" style="left:952px;top:539.5px;" width="14" height="9" viewBox="0 0 14 9"><path d="M0.5 4.5 C3 0.5 11 0.5 13.5 4.5 C11 8.5 3 8.5 0.5 4.5 Z" fill="#cfcfcf"/><circle cx="7" cy="4.5" r="2.3" fill="#535353"/><circle cx="7" cy="4.5" r="1.2" fill="#cfcfcf"/></svg>
<svg class="a" style="left:1002px;top:539.5px;" width="6" height="10" viewBox="0 0 6 10"><path d="M1 1 L5 5 L1 9" stroke="#e0e0e0" stroke-width="1.4" fill="none"/></svg>
<div class="a" style="left:1021px;top:535.5px;width:18px;height:17px;background:#111111;"></div>
<div class="a" style="left:1022px;top:536.5px;width:16px;height:15px;background:#ffffff;"></div>
<svg class="a" style="left:1022px;top:536.5px;" width="16" height="15" viewBox="0 0 16 15"><rect x="0" y="2" width="16" height="11" fill="#cbe6cc"/><path d="M6 2 V13 M12 2 V13" stroke="#e08898" stroke-width="1.2"/><path d="M2 8 H15" stroke="#e05050" stroke-width="0.8" stroke-dasharray="1 1.5"/></svg>
<div class="t" style="left:1043.7px;top:540.25px;font-size:9.75px;color:#dcdcdc;">Layer 1</div>
<svg class="a" style="left:1179px;top:538.5px;" width="11" height="11" viewBox="0 0 11 11"><circle cx="5.5" cy="5.5" r="4.6" fill="none" stroke="#d8d8d8" stroke-width="1.1"/></svg>
<div class="t" style="left:948px;top:608.02px;font-size:10.25px;color:#dcdcdc;">2 Layers</div>
<svg class="a" style="left:1072px;top:607px;" width="13" height="13" viewBox="0 0 13 13"><circle cx="8" cy="5" r="4" fill="none" stroke="#6e6e6e" stroke-width="1.4"/><path d="M5 8 L0.5 12.5" stroke="#6e6e6e" stroke-width="1.8"/></svg>
<svg class="a" style="left:1099px;top:607px;" width="12" height="12" viewBox="0 0 12 12"><rect x="0.5" y="0.5" width="7" height="7" fill="none" stroke="#d0d0d0" stroke-width="1.2"/><rect x="4" y="4" width="7.5" height="7.5" fill="#d0d0d0"/></svg>
<svg class="a" style="left:1122px;top:607px;" width="16" height="12" viewBox="0 0 16 12"><path d="M0 3 H4 L6 5 L4 7 H0" fill="none" stroke="#d0d0d0" stroke-width="1.2"/><path d="M6 3 L9 0 H15.5 V12 H6 Z" fill="#d0d0d0"/></svg>
<svg class="a" style="left:1151px;top:607px;" width="11" height="12" viewBox="0 0 11 12"><path d="M0 0 H11 V11 H4 V7 H0 Z" fill="#d0d0d0"/><path d="M0.3 7.6 H3.4 V10.7 Z" fill="#d0d0d0"/></svg>
<svg class="a" style="left:1177px;top:606px;" width="11" height="13" viewBox="0 0 11 13"><path d="M0.5 3 H10.5 M3.5 3 V1 H7.5 V3" stroke="#d0d0d0" stroke-width="1.2" fill="none"/><path d="M1.5 4 H9.5 L9 12 H2 Z" fill="none" stroke="#d0d0d0" stroke-width="1.2"/><path d="M4 5.5 V10.5 M5.5 5.5 V10.5 M7 5.5 V10.5" stroke="#d0d0d0" stroke-width="0.9"/></svg>
<div class="a" style="left:943px;top:622px;width:273px;height:3px;background:#3a3a3a;"></div>
<div class="a" style="left:943px;top:625px;width:273px;height:268px;background:#535353;"></div>
<div class="a" style="left:1004px;top:625px;width:212px;height:26px;background:#424242;"></div>
<div class="t" style="left:952px;top:633.56px;font-size:9.5px;color:#ececec;font-weight:bold;">Swatches</div>
<svg class="a" style="left:1200px;top:636px;" width="11" height="7" viewBox="0 0 11 7"><path d="M0 0.5 H11 M0 2.5 H11 M0 4.5 H11 M0 6.5 H11" stroke="#cfcfcf" stroke-width="1"/></svg>
<div class="a" style="left:958px;top:668px;width:20px;height:20px;background:#111111;"></div>
<div class="a" style="left:959px;top:669px;width:18px;height:18px;background:#ffffff;"></div>
<svg class="a" style="left:959px;top:669px;" width="18" height="18" viewBox="0 0 18 18"><path d="M0.5 17.5 L17.5 0.5" stroke="#ff0000" stroke-width="1.8"/><rect x="5" y="5" width="7" height="7" fill="none" stroke="#333" stroke-width="1"/></svg>
<div class="a" style="left:948px;top:658px;width:20px;height:20px;background:#111111;"></div>
<div class="a" style="left:949px;top:659px;width:18px;height:18px;background:#ffffff;"></div>
<div class="a" style="left:1162px;top:658px;width:48px;height:24px;border:1px solid #4a4a4a;box-sizing:border-box;border-radius:3px;"></div>
<div class="a" style="left:1163px;top:659px;width:23px;height:22px;background:#363636;"></div>
<svg class="a" style="left:1167px;top:663px;" width="14" height="13" viewBox="0 0 14 13"><path d="M0 1 H14 M0 4.5 H14 M0 8 H14 M0 11.5 H14" stroke="#e0e0e0" stroke-width="1.6"/></svg>
<svg class="a" style="left:1191px;top:663px;" width="15" height="13" viewBox="0 0 15 13"><rect x="0" y="0" width="4" height="3.5" fill="#d0d0d0"/><rect x="5.5" y="0" width="4" height="3.5" fill="#d0d0d0"/><rect x="11" y="0" width="4" height="3.5" fill="#d0d0d0"/><rect x="0" y="4.7" width="4" height="3.5" fill="#d0d0d0"/><rect x="5.5" y="4.7" width="4" height="3.5" fill="#d0d0d0"/><rect x="11" y="4.7" width="4" height="3.5" fill="#d0d0d0"/><rect x="0" y="9.4" width="4" height="3.5" fill="#d0d0d0"/><rect x="5.5" y="9.4" width="4" height="3.5" fill="#d0d0d0"/><rect x="11" y="9.4" width="4" height="3.5" fill="#d0d0d0"/></svg>
<div class="a" style="left:948px;top:693px;width:263px;height:180px;border:1px solid #5f5f5f;box-sizing:border-box;border-radius:3px;"></div>
<div class="a" style="left:949px;top:713.5px;width:261px;height:1px;background:#5f5f5f;"></div>
<div class="a" style="left:972px;top:696.5px;width:15px;height:15px;background:#1a1a1a;"></div>
<div class="a" style="left:973px;top:697.5px;width:13px;height:13px;background:#ffffff;"></div>
<svg class="a" style="left:973px;top:697.5px;" width="13" height="13" viewBox="0 0 13 13"><path d="M0.5 12.5 L12.5 0.5" stroke="#ff0000" stroke-width="1.8"/></svg>
<svg class="a" style="left:1193px;top:698px;" width="12" height="12" viewBox="0 0 12 12"><rect x="1" y="1" width="10" height="10" fill="none" stroke="#cfcfcf" stroke-width="1.2"/><path d="M0 0 L12 12" stroke="#cfcfcf" stroke-width="1.4"/></svg>
<div class="t" style="left:993px;top:700.04px;font-size:10px;color:#bdbdbd;">[None]</div>
<div class="a" style="left:949px;top:733.5px;width:261px;height:1px;background:#5f5f5f;"></div>
<div class="a" style="left:972px;top:716.5px;width:15px;height:15px;background:#1a1a1a;"></div>
<div class="a" style="left:973px;top:717.5px;width:13px;height:13px;background:#000000;"></div>
<svg class="a" style="left:1193px;top:718px;" width="12" height="12" viewBox="0 0 12 12"><rect x="0.5" y="0.5" width="11" height="11" fill="none" stroke="#cfcfcf" stroke-width="1"/><circle cx="6" cy="6" r="3.2" fill="none" stroke="#cfcfcf" stroke-width="1"/><path d="M6 1.5 V10.5 M1.5 6 H10.5" stroke="#cfcfcf" stroke-width="1"/></svg>
<div class="t" style="left:993px;top:720.04px;font-size:10px;color:#bdbdbd;">[Registration]</div>
<div class="a" style="left:949px;top:753.5px;width:261px;height:1px;background:#5f5f5f;"></div>
<div class="a" style="left:972px;top:736.5px;width:15px;height:15px;background:#1a1a1a;"></div>
<div class="a" style="left:973px;top:737.5px;width:13px;height:13px;background:#00ff00;"></div>
<svg class="a" style="left:973px;top:737.5px;" width="13" height="13" viewBox="0 0 13 13"><path d="M13 4 L13 13 L4 13 Z" fill="#ffffff"/><path d="M13 9 L13 13 L9 13 Z" fill="#000"/></svg>
<div class="a" style="left:1173px;top:738.5px;width:11px;height:11px;background:#c8c8c8;"></div>
<div class="a" style="left:1177px;top:742.5px;width:3px;height:3px;background:#333333;border-radius:50%;"></div>
<svg class="a" style="left:1193px;top:738px;" width="12" height="12" viewBox="0 0 12 12"><rect x="0.5" y="0.5" width="11" height="11" fill="#e0e0e0"/><rect x="1.5" y="1.5" width="3" height="9" fill="#e03030"/><rect x="4.5" y="1.5" width="3" height="9" fill="#30b030"/><rect x="7.5" y="1.5" width="3" height="9" fill="#3060e0"/></svg>
<div class="t" style="left:993px;top:740.04px;font-size:10px;color:#dcdcdc;">Creasing</div>
<div class="a" style="left:949px;top:773.5px;width:261px;height:1px;background:#5f5f5f;"></div>
<div class="a" style="left:972px;top:756.5px;width:15px;height:15px;background:#1a1a1a;"></div>
<div class="a" style="left:973px;top:757.5px;width:13px;height:13px;background:#ff0000;"></div>
<svg class="a" style="left:973px;top:757.5px;" width="13" height="13" viewBox="0 0 13 13"><path d="M13 4 L13 13 L4 13 Z" fill="#ffffff"/><path d="M13 9 L13 13 L9 13 Z" fill="#000"/></svg>
<div class="a" style="left:1173px;top:758.5px;width:11px;height:11px;background:#c8c8c8;"></div>
<div class="a" style="left:1177px;top:762.5px;width:3px;height:3px;background:#333333;border-radius:50%;"></div>
<svg class="a" style="left:1193px;top:758px;" width="12" height="12" viewBox="0 0 12 12"><rect x="0.5" y="0.5" width="11" height="11" fill="#e0e0e0"/><rect x="1.5" y="1.5" width="3" height="9" fill="#e03030"/><rect x="4.5" y="1.5" width="3" height="9" fill="#30b030"/><rect x="7.5" y="1.5" width="3" height="9" fill="#3060e0"/></svg>
<div class="t" style="left:993px;top:760.04px;font-size:10px;color:#dcdcdc;">Cutting</div>
<div class="a" style="left:949px;top:793.5px;width:261px;height:1px;background:#5f5f5f;"></div>
<div class="a" style="left:972px;top:776.5px;width:15px;height:15px;background:#1a1a1a;"></div>
<div class="a" style="left:973px;top:777.5px;width:13px;height:13px;background:#007878;"></div>
<svg class="a" style="left:973px;top:777.5px;" width="13" height="13" viewBox="0 0 13 13"><path d="M13 4 L13 13 L4 13 Z" fill="#ffffff"/><path d="M13 9 L13 13 L9 13 Z" fill="#000"/></svg>
<div class="a" style="left:1173px;top:778.5px;width:11px;height:11px;background:#c8c8c8;"></div>
<div class="a" style="left:1177px;top:782.5px;width:3px;height:3px;background:#333333;border-radius:50%;"></div>
<svg class="a" style="left:1193px;top:778px;" width="12" height="12" viewBox="0 0 12 12"><rect x="0.5" y="0.5" width="11" height="11" fill="#e0e0e0"/><rect x="1.5" y="1.5" width="3" height="9" fill="#e03030"/><rect x="4.5" y="1.5" width="3" height="9" fill="#30b030"/><rect x="7.5" y="1.5" width="3" height="9" fill="#3060e0"/></svg>
<div class="t" style="left:993px;top:780.04px;font-size:10px;color:#dcdcdc;">Cut-creasing</div>
<div class="a" style="left:949px;top:813.5px;width:261px;height:1px;background:#5f5f5f;"></div>
<div class="a" style="left:972px;top:796.5px;width:15px;height:15px;background:#1a1a1a;"></div>
<div class="a" style="left:973px;top:797.5px;width:13px;height:13px;background:#800080;"></div>
<svg class="a" style="left:973px;top:797.5px;" width="13" height="13" viewBox="0 0 13 13"><path d="M13 4 L13 13 L4 13 Z" fill="#ffffff"/><path d="M13 9 L13 13 L9 13 Z" fill="#000"/></svg>
<div class="a" style="left:1173px;top:798.5px;width:11px;height:11px;background:#c8c8c8;"></div>
<div class="a" style="left:1177px;top:802.5px;width:3px;height:3px;background:#333333;border-radius:50%;"></div>
<svg class="a" style="left:1193px;top:798px;" width="12" height="12" viewBox="0 0 12 12"><rect x="0.5" y="0.5" width="11" height="11" fill="#e0e0e0"/><rect x="1.5" y="1.5" width="3" height="9" fill="#e03030"/><rect x="4.5" y="1.5" width="3" height="9" fill="#30b030"/><rect x="7.5" y="1.5" width="3" height="9" fill="#3060e0"/></svg>
<div class="t" style="left:993px;top:800.04px;font-size:10px;color:#dcdcdc;">Dimensions</div>
<svg class="a" style="left:952px;top:877px;" width="18" height="13" viewBox="0 0 18 13"><path d="M1 1 V12 M4 1 V12 M7 1 L11 12" stroke="#d0d0d0" stroke-width="1.5"/><path d="M13 10 L17 10 L15 12.5 Z" fill="#d0d0d0"/></svg>
<svg class="a" style="left:980px;top:877px;" width="13" height="13" viewBox="0 0 13 13"><circle cx="6" cy="6.5" r="4" fill="none" stroke="#d0d0d0" stroke-width="1.4"/><circle cx="11" cy="2" r="1.6" fill="#d0d0d0"/><circle cx="11" cy="11" r="1.6" fill="#d0d0d0"/><circle cx="5" cy="6.5" r="1.4" fill="#d0d0d0"/></svg>
<svg class="a" style="left:1003px;top:877px;" width="20" height="13" viewBox="0 0 20 13"><path d="M7 12 H17 A3 3 0 0 0 17 6 A5 5 0 0 0 8 4 A4 4 0 0 0 7 12 Z" fill="#6e6e6e"/><path d="M0 8 H7 M5 6 L7 8 L5 10" stroke="#6e6e6e" stroke-width="1.2" fill="none"/></svg>
<svg class="a" style="left:1071px;top:877px;" width="17" height="14" viewBox="0 0 17 14"><g fill="#d0d0d0"><rect x="0" y="0" width="3" height="3"/><rect x="4" y="0" width="3" height="3"/><rect x="8" y="0" width="3" height="3"/><rect x="0" y="4" width="3" height="3"/><rect x="4" y="4" width="3" height="3"/><rect x="8" y="4" width="3" height="3"/><rect x="0" y="8" width="3" height="3"/><rect x="4" y="8" width="3" height="3"/><path d="M12 11 H16 L14 13.5 Z"/></g></svg>
<svg class="a" style="left:1098px;top:877px;" width="12" height="13" viewBox="0 0 12 13"><rect x="0.5" y="0.5" width="11" height="12" fill="none" stroke="#6e6e6e" stroke-width="1"/><path d="M2.5 3.5 H9.5 M2.5 6.5 H9.5 M2.5 9.5 H9.5" stroke="#6e6e6e" stroke-width="1"/></svg>
<svg class="a" style="left:1123px;top:878px;" width="15" height="11" viewBox="0 0 15 11"><path d="M0 1 H5 L6.5 2.5 H15 V11 H0 Z" fill="#d0d0d0"/></svg>
<svg class="a" style="left:1151px;top:877px;" width="11" height="12" viewBox="0 0 11 12"><path d="M0 0 H11 V11 H4 V7 H0 Z" fill="#d0d0d0"/><path d="M0.3 7.6 H3.4 V10.7 Z" fill="#d0d0d0"/></svg>
<svg class="a" style="left:1177px;top:877px;" width="11" height="13" viewBox="0 0 11 13"><path d="M0.5 3 H10.5 M3.5 3 V1 H7.5 V3" stroke="#6e6e6e" stroke-width="1.2" fill="none"/><path d="M1.5 4 H9.5 L9 12 H2 Z" fill="none" stroke="#6e6e6e" stroke-width="1.2"/><path d="M4 5.5 V10.5 M5.5 5.5 V10.5 M7 5.5 V10.5" stroke="#6e6e6e" stroke-width="0.9"/></svg>
<div class="a" style="left:943px;top:893px;width:273px;height:1px;background:#3a3a3a;"></div>
<div class="a" style="left:1219px;top:81px;width:376px;height:229px;background:#535353;"></div>
<div class="a" style="left:1365px;top:81px;width:230px;height:26px;background:#424242;"></div>
<div class="a" style="left:1460px;top:84px;width:1px;height:21px;background:#3a3a3a;"></div>
<div class="a" style="left:1555px;top:84px;width:1px;height:21px;background:#3a3a3a;"></div>
<div class="t" style="left:1228px;top:89.56px;font-size:9.5px;color:#ececec;font-weight:bold;">EngView Design Parameters</div>
<div class="t" style="left:1374px;top:90.57px;font-size:9.25px;color:#9a9a9a;font-weight:bold;">EngView Processes</div>
<div class="t" style="left:1468.8px;top:90.57px;font-size:9.25px;color:#9a9a9a;font-weight:bold;">EngView Step and</div>
<svg class="a" style="left:1579px;top:91px;" width="11" height="7" viewBox="0 0 11 7"><path d="M0 0.5 H11 M0 2.5 H11 M0 4.5 H11 M0 6.5 H11" stroke="#cfcfcf" stroke-width="1"/></svg>
<div class="a" style="left:1224px;top:114px;width:367px;height:179px;border:1px solid #dcdcdc;box-sizing:border-box;background:#535353;"></div>
<div class="a" style="left:1225px;top:115px;width:348px;height:21px;background:#555555;"></div>
<div class="t" style="left:1233px;top:120.98px;font-size:11.6px;color:#e8e8e8;">Parameter</div>
<div class="t" style="left:1307px;top:120.98px;font-size:11.6px;color:#e8e8e8;">Express</div>
<div class="t" style="left:1367.6px;top:120.98px;font-size:11.6px;color:#e8e8e8;">Value</div>
<div class="t" style="left:1442.8px;top:120.98px;font-size:11.6px;color:#e8e8e8;">Remark</div>
<div class="a" style="left:1299.4px;top:119px;width:1px;height:12px;background:#9a9a9a;"></div>
<div class="a" style="left:1360px;top:119px;width:1px;height:12px;background:#9a9a9a;"></div>
<div class="a" style="left:1435.3px;top:119px;width:1px;height:12px;background:#9a9a9a;"></div>
<div class="a" style="left:1225px;top:136.5px;width:346px;height:20px;border:1px solid #e8e8e8;box-sizing:border-box;background:#505050;border-width:1.5px;"></div>
<svg class="a" style="left:1229px;top:141.5px;" width="10" height="10" viewBox="0 0 10 10"><rect x="0.5" y="0.5" width="9" height="9" fill="none" stroke="#e8e8e8" stroke-width="1"/><path d="M2.5 5 H7.5" stroke="#e8e8e8" stroke-width="1.2"/></svg>
<div class="t" style="left:1245.4px;top:141.18px;font-size:11.6px;color:#e8e8e8;">1 EVF12062</div>
<div class="a" style="left:1225px;top:157.5px;width:346px;height:20px;border:1px solid #e8e8e8;box-sizing:border-box;background:#505050;border-width:1.5px;"></div>
<svg class="a" style="left:1244.8px;top:162.5px;" width="10" height="10" viewBox="0 0 10 10"><rect x="0.5" y="0.5" width="9" height="9" fill="none" stroke="#e8e8e8" stroke-width="1"/><path d="M2.5 5 H7.5" stroke="#e8e8e8" stroke-width="1.2"/></svg>
<div class="t" style="left:1261.3px;top:162.18px;font-size:11.6px;color:#e8e8e8;">Main</div>
<div class="a" style="left:1224px;top:178px;width:349px;height:114px;overflow:hidden;">
<div class="a" style="left:0.5px;top:0.0px;width:74.5px;height:20px;border:1px solid #e8e8e8;box-sizing:border-box;background:#505050;"></div>
<div class="t" style="left:21.4px;top:5.48px;font-size:11.6px;color:#e8e8e8;">A</div>
<div class="a" style="left:75.4px;top:0.0px;width:60.0px;height:20px;border:1px solid #e8e8e8;box-sizing:border-box;background:#505050;"></div>
<div class="t" style="left:83.0px;top:5.48px;font-size:11.6px;color:#e8e8e8;">90</div>
<div class="a" style="left:136.0px;top:0.0px;width:74.5px;height:20px;border:1px solid #e8e8e8;box-sizing:border-box;background:#505050;"></div>
<div class="t" style="left:143.6px;top:5.48px;font-size:11.6px;color:#e8e8e8;">90.00</div>
<div class="a" style="left:211.3px;top:0.0px;width:135.5px;height:20px;border:1px solid #e8e8e8;box-sizing:border-box;background:#505050;"></div>
<div class="t" style="left:219.4px;top:5.48px;font-size:11.6px;color:#e8e8e8;">Box Length</div>
<div class="a" style="left:0.5px;top:20.8px;width:74.5px;height:20px;border:1px solid #e8e8e8;box-sizing:border-box;background:#505050;"></div>
<div class="t" style="left:21.4px;top:26.28px;font-size:11.6px;color:#e8e8e8;">Dist</div>
<div class="a" style="left:75.4px;top:20.8px;width:60.0px;height:20px;border:1px solid #e8e8e8;box-sizing:border-box;background:#505050;"></div>
<div class="t" style="left:83.0px;top:26.28px;font-size:11.6px;color:#e8e8e8;">30</div>
<div class="a" style="left:136.0px;top:20.8px;width:74.5px;height:20px;border:1px solid #e8e8e8;box-sizing:border-box;background:#505050;"></div>
<div class="t" style="left:143.6px;top:26.28px;font-size:11.6px;color:#e8e8e8;">30.00</div>
<div class="a" style="left:211.3px;top:20.8px;width:135.5px;height:20px;border:1px solid #e8e8e8;box-sizing:border-box;background:#505050;"></div>
<div class="t" style="left:219.4px;top:26.28px;font-size:11.6px;color:#e8e8e8;">Distance</div>
<div class="a" style="left:0.5px;top:41.6px;width:74.5px;height:20px;border:1px solid #e8e8e8;box-sizing:border-box;background:#505050;"></div>
<div class="t" style="left:21.4px;top:47.08px;font-size:11.6px;color:#e8e8e8;">TrL</div>
<div class="a" style="left:75.4px;top:41.6px;width:60.0px;height:20px;border:1px solid #e8e8e8;box-sizing:border-box;background:#505050;"></div>
<div class="t" style="left:83.0px;top:47.08px;font-size:11.6px;color:#e8e8e8;">A/5</div>
<div class="a" style="left:136.0px;top:41.6px;width:74.5px;height:20px;border:1px solid #e8e8e8;box-sizing:border-box;background:#505050;"></div>
<div class="t" style="left:143.6px;top:47.08px;font-size:11.6px;color:#e8e8e8;">18.00</div>
<div class="a" style="left:211.3px;top:41.6px;width:135.5px;height:20px;border:1px solid #e8e8e8;box-sizing:border-box;background:#505050;"></div>
<div class="t" style="left:219.4px;top:47.08px;font-size:11.6px;color:#e8e8e8;">Triangle Length</div>
<div class="a" style="left:0.5px;top:62.4px;width:74.5px;height:20px;border:1px solid #e8e8e8;box-sizing:border-box;background:#505050;"></div>
<div class="t" style="left:21.4px;top:67.88px;font-size:11.6px;color:#e8e8e8;">TrH</div>
<div class="a" style="left:75.4px;top:62.4px;width:60.0px;height:20px;border:1px solid #e8e8e8;box-sizing:border-box;background:#505050;"></div>
<div class="t" style="left:83.0px;top:67.88px;font-size:11.6px;color:#e8e8e8;">35</div>
<div class="a" style="left:136.0px;top:62.4px;width:74.5px;height:20px;border:1px solid #e8e8e8;box-sizing:border-box;background:#505050;"></div>
<div class="t" style="left:143.6px;top:67.88px;font-size:11.6px;color:#e8e8e8;">35.00</div>
<div class="a" style="left:211.3px;top:62.4px;width:135.5px;height:20px;border:1px solid #e8e8e8;box-sizing:border-box;background:#505050;"></div>
<div class="t" style="left:219.4px;top:67.88px;font-size:11.6px;color:#e8e8e8;">Triangle Height</div>
<div class="a" style="left:0.5px;top:83.2px;width:74.5px;height:20px;border:1px solid #e8e8e8;box-sizing:border-box;background:#505050;"></div>
<div class="t" style="left:21.4px;top:88.68px;font-size:11.6px;color:#e8e8e8;">H</div>
<div class="a" style="left:75.4px;top:83.2px;width:60.0px;height:20px;border:1px solid #e8e8e8;box-sizing:border-box;background:#505050;"></div>
<div class="t" style="left:83.0px;top:88.68px;font-size:11.6px;color:#e8e8e8;">2*TrH+...</div>
<div class="a" style="left:136.0px;top:83.2px;width:74.5px;height:20px;border:1px solid #e8e8e8;box-sizing:border-box;background:#505050;"></div>
<div class="t" style="left:143.6px;top:88.68px;font-size:11.6px;color:#e8e8e8;">100.00</div>
<div class="a" style="left:211.3px;top:83.2px;width:135.5px;height:20px;border:1px solid #e8e8e8;box-sizing:border-box;background:#505050;"></div>
<div class="t" style="left:219.4px;top:88.68px;font-size:11.6px;color:#e8e8e8;">Height</div>
<div class="a" style="left:0.5px;top:104.0px;width:74.5px;height:20px;border:1px solid #e8e8e8;box-sizing:border-box;background:#505050;"></div>
<div class="t" style="left:21.4px;top:109.48px;font-size:11.6px;color:#e8e8e8;">A1</div>
<div class="a" style="left:75.4px;top:104.0px;width:60.0px;height:20px;border:1px solid #e8e8e8;box-sizing:border-box;background:#505050;"></div>
<div class="t" style="left:83.0px;top:109.48px;font-size:11.6px;color:#e8e8e8;">A+l0</div>
<div class="a" style="left:136.0px;top:104.0px;width:74.5px;height:20px;border:1px solid #e8e8e8;box-sizing:border-box;background:#505050;"></div>
<div class="t" style="left:143.6px;top:109.48px;font-size:11.6px;color:#e8e8e8;">90.50</div>
<div class="a" style="left:211.3px;top:104.0px;width:135.5px;height:20px;border:1px solid #e8e8e8;box-sizing:border-box;background:#505050;"></div>
<div class="t" style="left:219.4px;top:109.48px;font-size:11.6px;color:#e8e8e8;">Length</div>
</div>
<div class="a" style="left:1572.5px;top:114.5px;width:17px;height:177.5px;background:#f0f0f0;"></div>
<svg class="a" style="left:1576px;top:120px;" width="11" height="7" viewBox="0 0 11 7"><path d="M1.5 6 L5.5 2 L9.5 6" stroke="#404040" stroke-width="1.8" fill="none"/></svg>
<div class="a" style="left:1573.5px;top:132px;width:14.5px;height:66px;background:#c8c8c8;"></div>
<svg class="a" style="left:1576px;top:279px;" width="11" height="7" viewBox="0 0 11 7"><path d="M1.5 1.5 L5.5 5.5 L9.5 1.5" stroke="#404040" stroke-width="1.8" fill="none"/></svg>
<svg class="a" style="left:1563px;top:295px;" width="13" height="11" viewBox="0 0 13 11"><path d="M9.5 2.5 A5 5 0 1 0 11 7" fill="none" stroke="#6a6a6a" stroke-width="1.3"/><path d="M8 0 L12 2 L9 5 Z" fill="#6a6a6a"/></svg>
<div class="a" style="left:1219px;top:309px;width:376px;height:3px;background:#3a3a3a;"></div>
<div class="a" style="left:1219px;top:312px;width:376px;height:228px;background:#535353;"></div>
<div class="a" style="left:1315px;top:312px;width:280px;height:27px;background:#424242;"></div>
<div class="t" style="left:1228.3px;top:320.66px;font-size:9.5px;color:#ececec;font-weight:bold;">EngView Articles</div>
<svg class="a" style="left:1579px;top:322px;" width="11" height="7" viewBox="0 0 11 7"><path d="M0 0.5 H11 M0 2.5 H11 M0 4.5 H11 M0 6.5 H11" stroke="#cfcfcf" stroke-width="1"/></svg>
<div class="a" style="left:1224px;top:345px;width:366px;height:174px;border:1px solid #dcdcdc;box-sizing:border-box;background:#535353;"></div>
<div class="a" style="left:1225px;top:346px;width:364px;height:20px;background:#555555;"></div>
<div class="t" style="left:1233px;top:352.68px;font-size:11.6px;color:#e8e8e8;">Article</div>
<div class="t" style="left:1331.8px;top:352.68px;font-size:11.6px;color:#e8e8e8;">Front</div>
<div class="t" style="left:1438.9px;top:352.68px;font-size:11.6px;color:#e8e8e8;">Rear</div>
<div class="t" style="left:1546px;top:352.68px;font-size:11.6px;color:#e8e8e8;">In Use</div>
<div class="a" style="left:1324.3px;top:350px;width:1px;height:12px;background:#9a9a9a;"></div>
<div class="a" style="left:1431px;top:350px;width:1px;height:12px;background:#9a9a9a;"></div>
<div class="a" style="left:1538px;top:350px;width:1px;height:12px;background:#9a9a9a;"></div>
<div class="a" style="left:1587.6px;top:350px;width:1px;height:12px;background:#9a9a9a;"></div>
<div class="a" style="left:1225.5px;top:367.5px;width:362px;height:19.5px;border:1px solid #e8e8e8;box-sizing:border-box;background:#505050;border-width:1.5px;"></div>
<svg class="a" style="left:1229px;top:372.5px;" width="10" height="10" viewBox="0 0 10 10"><rect x="0.5" y="0.5" width="9" height="9" fill="none" stroke="#e8e8e8" stroke-width="1"/><path d="M2.5 5 H7.5" stroke="#e8e8e8" stroke-width="1.2"/></svg>
<div class="t" style="left:1244.8px;top:372.48px;font-size:11.6px;color:#e8e8e8;">EVF12062</div>
<div class="a" style="left:1224.5px;top:388px;width:364px;height:20px;background:#4d6480;"></div>
<div class="a" style="left:1224.5px;top:388px;width:99.5px;height:20px;border:1px solid #dcdcdc;box-sizing:border-box;"></div>
<div class="a" style="left:1324.5px;top:388px;width:107px;height:20px;border:1px solid #dcdcdc;box-sizing:border-box;"></div>
<div class="a" style="left:1431.5px;top:388px;width:106.5px;height:20px;border:1px solid #dcdcdc;box-sizing:border-box;"></div>
<div class="a" style="left:1538px;top:388px;width:50.5px;height:20px;border:1px solid #dcdcdc;box-sizing:border-box;"></div>
<div class="a" style="left:1325.5px;top:389px;width:105px;height:18px;background:#6f93b7;"></div>
<div class="t" style="left:1245px;top:393.18px;font-size:11.6px;color:#1e1e1e;">Article</div>
<div class="t" style="left:1344.3px;top:393.18px;font-size:11.6px;color:#1e1e1e;">Yellow Candies</div>
<div class="t" style="left:1451.4px;top:393.18px;font-size:11.6px;color:#f0f0f0;">&lt;None&gt;</div>
<div class="t" style="left:1546px;top:393.18px;font-size:11.6px;color:#f0f0f0;">1</div>
<div class="a" style="left:1313px;top:379px;width:131px;height:38px;border:1px solid #f0923a;box-sizing:border-box;border-width:2px;"></div>
<svg class="a" style="left:1467px;top:526px;" width="13" height="12" viewBox="0 0 13 12"><defs><linearGradient id="gi" x1="0" y1="0" x2="0" y2="1"><stop offset="0" stop-color="#e0e0e0"/><stop offset="1" stop-color="#b8b8b8"/></linearGradient></defs><rect x="0" y="0.5" width="12.5" height="11" fill="url(#gi)"/><rect x="0" y="0" width="12.5" height="1" fill="#111"/><rect x="0" y="10.5" width="12.5" height="1.2" fill="#f0f0f0"/><path d="M0.5 5 L5 9.5 L0.5 9.5 Z" fill="#111"/></svg>
<svg class="a" style="left:1499px;top:526px;" width="12" height="12" viewBox="0 0 12 12"><defs><linearGradient id="gt" x1="0" y1="0" x2="0" y2="1"><stop offset="0" stop-color="#e8e8e8"/><stop offset="1" stop-color="#b0b0b0"/></linearGradient></defs><path d="M0.5 2.5 C0.5 0 11.5 0 11.5 2.5 L10.5 10.5 C10 12 2 12 1.5 10.5 Z" fill="url(#gt)"/><path d="M1 2.5 H11" stroke="#333" stroke-width="0.8"/><path d="M4 4.5 V10 M6 4.5 V10 M8 4.5 V10" stroke="#222" stroke-width="1"/></svg>
<svg class="a" style="left:1531px;top:526px;" width="12" height="12" viewBox="0 0 12 12"><path d="M6 0.5 L11.5 6 H8 V11.5 H4 V6 H0.5 Z" fill="#6a6a6a"/></svg>
<svg class="a" style="left:1563px;top:527px;" width="12" height="11" viewBox="0 0 12 11"><path d="M6 10.5 L11.5 5 H8 V0 H4 V5 H0.5 Z" fill="#6a6a6a"/></svg>
<div class="a" style="left:1219px;top:540px;width:376px;height:3px;background:#3a3a3a;"></div>
<div class="a" style="left:1219px;top:543px;width:376px;height:350px;background:#535353;"></div>
<div class="a" style="left:1293px;top:543px;width:302px;height:27px;background:#424242;"></div>
<div class="t" style="left:1228.4px;top:551.46px;font-size:9.5px;color:#ececec;font-weight:bold;">EngView 3D</div>
<svg class="a" style="left:1579px;top:553px;" width="11" height="7" viewBox="0 0 11 7"><path d="M0 0.5 H11 M0 2.5 H11 M0 4.5 H11 M0 6.5 H11" stroke="#cfcfcf" stroke-width="1"/></svg>
<svg class="a" style="left:1226px;top:573px;" width="21" height="20" viewBox="0 0 21 20"><circle cx="8.5" cy="8.5" r="7.5" fill="none" stroke="#d8d8d8" stroke-width="1.6"/><path d="M14 14 L20 19.5" stroke="#d8d8d8" stroke-width="2.6"/><path d="M8.5 3.5 V13.5 M3.5 8.5 H13.5" stroke="#d8d8d8" stroke-width="1.1"/><path d="M8.5 2.5 L7 4.5 H10 Z M8.5 14.5 L7 12.5 H10 Z M2.5 8.5 L4.5 7 V10 Z M14.5 8.5 L12.5 7 V10 Z" fill="#d8d8d8"/></svg>
<svg class="a" style="left:1250px;top:574px;" width="22" height="19" viewBox="0 0 22 19"><ellipse cx="9" cy="11" rx="8" ry="3.5" fill="none" stroke="#d8d8d8" stroke-width="1.5"/><path d="M9 1 C3 5 4 14 9 18 C13 14 14 5 9 1" fill="none" stroke="#d8d8d8" stroke-width="1.5"/><path d="M18 16 H22 L20 18.5 Z" fill="#d8d8d8"/></svg>
<div class="a" style="left:1279px;top:576px;width:1.5px;height:16px;background:#8a8a8a;"></div>
<svg class="a" style="left:1287px;top:574px;" width="21" height="19" viewBox="0 0 21 19"><path d="M1 5 L5 1 H16 V13 L12 17 H1 Z" fill="#e0e0e0"/><path d="M1 5 H12 V17 M12 5 L16 1" stroke="#6a6a6a" stroke-width="1" fill="none"/><path d="M12 5 L16 1 V13 L12 17 Z" fill="#a8a8a8"/><path d="M17 16 H21 L19 18.5 Z" fill="#d8d8d8"/></svg>
<div class="a" style="left:1315px;top:576px;width:1.5px;height:16px;background:#8a8a8a;"></div>
<svg class="a" style="left:1327px;top:575px;" width="17" height="18" viewBox="0 0 17 18"><path d="M1 1 L11 8.5 L1 16 Z" fill="#e0e0e0"/><path d="M12 15 H16 L14 17.5 Z" fill="#d8d8d8"/></svg>
<div class="a" style="left:1351px;top:576px;width:1.5px;height:16px;background:#8a8a8a;"></div>
<svg class="a" style="left:1359px;top:574px;" width="19" height="19" viewBox="0 0 19 19"><rect x="1" y="1" width="17" height="17" fill="none" stroke="#d8d8d8" stroke-width="1.5"/><rect x="4" y="11" width="11" height="7" fill="none" stroke="#d8d8d8" stroke-width="1.3"/><path d="M5 8 C6 4 11 4 13 5 M11 2.5 L14 5 L11 7.5" stroke="#d8d8d8" stroke-width="1.4" fill="none"/></svg>
<svg class="a" style="left:1385px;top:574px;" width="15" height="19" viewBox="0 0 15 19"><circle cx="7.5" cy="7" r="6.5" fill="#f0f0f0"/><rect x="4.5" y="12" width="6" height="5" fill="#e0e0e0"/><rect x="5.5" y="17" width="4" height="2" fill="#c0c0c0"/></svg>
<svg class="a" style="left:1407px;top:574px;" width="18" height="19" viewBox="0 0 18 19"><path d="M1 1 H12 L17 6 V18 H1 Z" fill="none" stroke="#d8d8d8" stroke-width="1.4"/><path d="M4 7 H13 M4 12 H13 M9 5 V9 M7 10 V14" stroke="#d8d8d8" stroke-width="1.3"/></svg>
<div class="a" style="left:1434px;top:576px;width:1.5px;height:16px;background:#8a8a8a;"></div>
<svg class="a" style="left:1443px;top:575px;" width="18" height="17" viewBox="0 0 18 17"><path d="M1 6 L6 1 H17 V11 L12 16 H1 Z" fill="none" stroke="#d8d8d8" stroke-width="1.3"/><path d="M1 6 H12 V16 M12 6 L17 1" stroke="#d8d8d8" stroke-width="1.2" fill="none"/><rect x="4" y="9" width="5" height="4" fill="none" stroke="#d8d8d8" stroke-width="1"/></svg>
<svg class="a" style="left:1466px;top:574px;" width="20" height="19" viewBox="0 0 20 19"><path d="M6 17 V5 M2 8 L6 3 L10 8" stroke="#d8d8d8" stroke-width="1.8" fill="none"/><path d="M14 2 V14 M10 11 L14 16 L18 11" stroke="#d8d8d8" stroke-width="1.8" fill="none"/></svg>
<svg class="a" style="left:1490px;top:574px;" width="19" height="19" viewBox="0 0 19 19"><path d="M1 5 L5 1 H18 V12 L14 16 H1 Z" fill="#e8e8e8"/><path d="M1 5 H14 V16 M14 5 L18 1" stroke="#6a6a6a" stroke-width="1" fill="none"/><path d="M2 18 H13 M2 16.5 V19.5 M13 16.5 V19.5" stroke="#d8d8d8" stroke-width="1"/></svg>
<div class="a" style="left:1225px;top:596px;width:364px;height:272px;background:#bfcad9;"></div>
<svg class="a" style="left:0px;top:0px;pointer-events:none;" width="1601" height="899" viewBox="0 0 1601 899">
<defs>
<linearGradient id="topf" x1="0" y1="0.2" x2="1" y2="0.5"><stop offset="0" stop-color="#e9e9e9"/><stop offset="0.6" stop-color="#ffffff"/><stop offset="1" stop-color="#fbfbfb"/></linearGradient>
<linearGradient id="frontf" x1="0" y1="0" x2="1" y2="0"><stop offset="0" stop-color="#ececec"/><stop offset="1" stop-color="#dadada"/></linearGradient>
<linearGradient id="botf" x1="0" y1="0" x2="1" y2="0.3"><stop offset="0" stop-color="#c4c4c4"/><stop offset="1" stop-color="#a2a2a2"/></linearGradient>
<linearGradient id="rlf" x1="0" y1="0" x2="0.3" y2="1"><stop offset="0" stop-color="#a8a8a8"/><stop offset="1" stop-color="#8e8e8e"/></linearGradient>
<linearGradient id="lid" x1="0" y1="1" x2="0.6" y2="0"><stop offset="0" stop-color="#e6e5cd"/><stop offset="1" stop-color="#dddbc3"/></linearGradient>
</defs>
<g stroke-width="0.7" stroke-linejoin="round">
<path d="M1311.6 744.5 L1447.2 792.1 L1442.6 841.2 L1315 786.1 Z" fill="url(#frontf)" stroke="#e2e2e2"/>
<path d="M1315 786.1 L1354 818.2 L1422.1 849.2 L1442.6 841.2 Z" fill="url(#botf)" stroke="#b4b4b4"/>
<path d="M1447.9 790.9 L1495.6 743.2 L1494.1 767.8 L1442.1 840.1 Z" fill="url(#rlf)" stroke="#9a9a9a"/>
<path d="M1436.3 714.3 L1490 753 L1495.6 743.2 L1447.9 790.9 Z" fill="#bababa" stroke="#bababa"/>
<path d="M1311.6 744.5 L1352.5 695.6 L1436.3 714.3 L1447.9 790.9 Z" fill="url(#topf)" stroke="#f0f0f0"/>
<path d="M1353.5 694 L1400 678 L1393.5 703.5 Z" fill="#8e8d7b" stroke="#8e8d7b"/>
<path d="M1393.5 703.5 L1400 678 L1471 692.6 L1436.3 714.3 Z" fill="#c9c8af" stroke="#c9c8af"/>
<path d="M1332.5 648.5 L1371.5 642.5 L1400 678 L1353.5 694 L1346.5 684 Z" fill="#c7c6ad" stroke="#c7c6ad"/>
<path d="M1400.1 678.1 L1432 627.5 L1495.6 634.1 L1471 692.6 Z" fill="url(#lid)" stroke="#e0dec6"/>
<path d="M1432 627.5 L1433.4 616.8 L1485.5 620.2 L1495.6 631.8 L1495.6 634.1 Z" fill="#d3d2ba" stroke="#d3d2ba"/>
<path d="M1436.3 714.3 L1471 692.6 L1505.7 730.2 L1489.8 753.3 Z" fill="#c6c5ab" stroke="#c6c5ab"/>
</g>
</svg>
<svg class="a" style="left:1233px;top:879px;" width="14" height="12" viewBox="0 0 14 12"><path d="M10.5 3 A5 5 0 1 0 12 8" fill="none" stroke="#b0b0b0" stroke-width="1.3"/><path d="M9 0.5 L13 2.5 L10 5.5 Z" fill="#b0b0b0"/></svg>
<div class="a" style="left:1257px;top:879px;width:12px;height:12px;background:#f4f4f4;"></div>
<svg class="a" style="left:1257px;top:879px;" width="12" height="12" viewBox="0 0 12 12"><path d="M2.5 6 L5 9 L10 2.5" stroke="#111" stroke-width="1.6" fill="none"/></svg>
<div class="t" style="left:1272px;top:881.11px;font-size:10.5px;color:#ececec;">Enable Auto Refresh</div>
<div class="a" style="left:1564px;top:879px;width:13px;height:11px;background:linear-gradient(#8a8a8a,#c8c8c8);border-top:1px solid #111;border-bottom:1px solid #e8e8e8;box-sizing:border-box;"></div>
<svg class="a" style="left:1578px;top:886px;" width="5" height="4" viewBox="0 0 5 4"><path d="M0 0 H5 L2.5 3 Z" fill="#f0f0f0"/></svg>
</body></html>
